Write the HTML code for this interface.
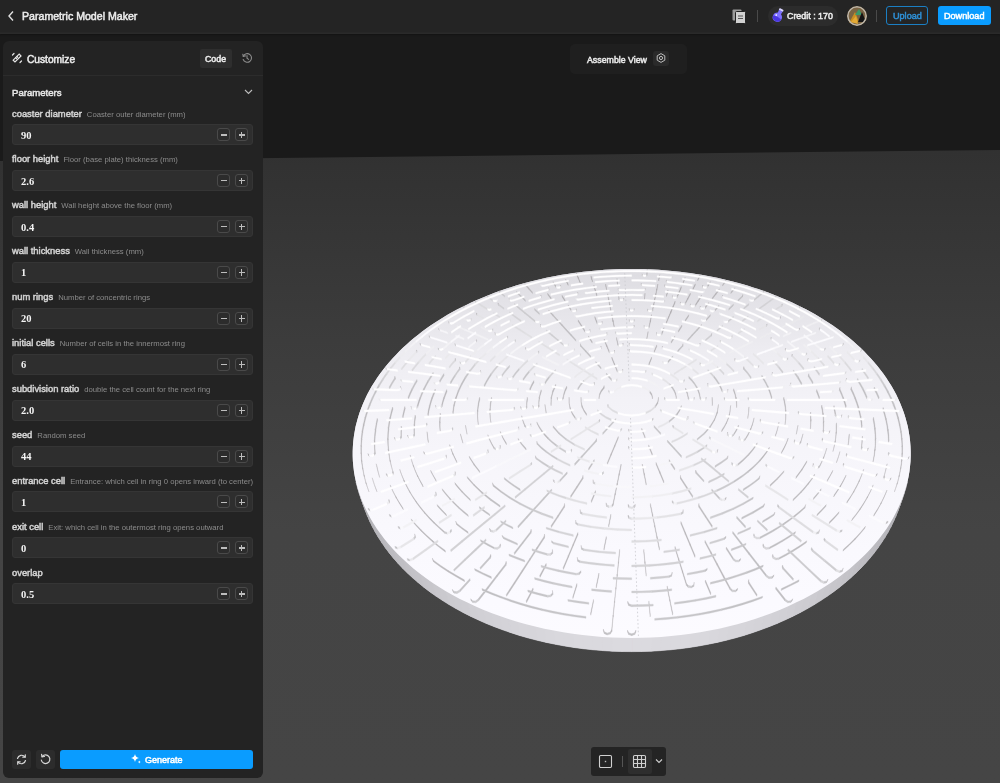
<!DOCTYPE html>
<html><head><meta charset="utf-8">
<style>
*{box-sizing:border-box;margin:0;padding:0}
html,body{width:1000px;height:783px;overflow:hidden;background:#1a1a1a;font-family:"Liberation Sans",sans-serif;color:#e8e8e8}
.abs{position:absolute}
#top{left:0;top:0;width:1000px;height:34px;background:#242424;box-shadow:inset 0 -1.5px 0 #2a2a2a,0 1px 1.5px #141414}
#sky{left:0;top:34px;width:1000px;height:749px;background:#1a1a1a}
#panel{left:3px;top:41px;width:260px;height:737px;background:#232323;border-radius:6px}
.t{position:absolute;white-space:nowrap;font-weight:normal;-webkit-text-stroke:0.5px currentColor}
#panel,#top,.t{will-change:transform}
.lbl{position:absolute;left:12px;font-size:9.4px;font-weight:normal;-webkit-text-stroke:0.5px currentColor;color:#d2d2d2;white-space:nowrap}
.lbl span{font-weight:normal;-webkit-text-stroke:0;font-size:7.7px;color:#8c8c8c;margin-left:5px}
.inp{position:absolute;left:12px;width:241px;height:21px;background:#2e2e2e;border:1px solid #353535;border-radius:3px}
.val{position:absolute;left:8px;top:4.5px;font-family:"Liberation Serif",serif;font-weight:bold;font-size:10.5px;color:#f4f4f4}
.pm{position:absolute;top:3px;width:13px;height:13px;border:1px solid #4a4a4a;border-radius:3px;background:#2c2c2c}
.pm:before{content:"";position:absolute;left:2.5px;top:5.2px;width:6.5px;height:1.2px;background:#bdbdbd}
.pm.p:after{content:"";position:absolute;left:5.15px;top:2.5px;width:1.2px;height:6.5px;background:#bdbdbd}
</style></head><body>
<div id="sky" class="abs"></div>
<svg class="abs" style="left:0;top:0" width="1000" height="783" viewBox="0 0 1000 783">
<defs><linearGradient id="fl" x1="0" y1="150" x2="0" y2="783" gradientUnits="userSpaceOnUse">
<stop offset="0" stop-color="#313131"/><stop offset="0.3" stop-color="#3c3c3c"/><stop offset="0.6" stop-color="#444444"/><stop offset="1" stop-color="#454545"/></linearGradient></defs>
<polygon points="0,161 1000,150 1000,783 0,783" fill="url(#fl)"/>
</svg>
<svg width="1000" height="783" viewBox="0 0 1000 783" style="position:absolute;left:0;top:0"><defs><linearGradient id="tg" x1="0" y1="269" x2="0" y2="638" gradientUnits="userSpaceOnUse"><stop offset="0.000" stop-color="rgb(221,220,225)"/><stop offset="0.084" stop-color="rgb(227,226,231)"/><stop offset="0.220" stop-color="rgb(237,236,241)"/><stop offset="0.355" stop-color="rgb(243,242,247)"/><stop offset="0.491" stop-color="rgb(246,245,250)"/><stop offset="0.626" stop-color="rgb(248,247,252)"/><stop offset="0.762" stop-color="rgb(250,249,254)"/><stop offset="0.897" stop-color="rgb(251,250,255)"/><stop offset="1.000" stop-color="rgb(252,251,255)"/></linearGradient></defs><polygon points="352.7,451.2 352.9,446.2 353.3,441.2 353.9,436.3 354.7,431.4 355.6,426.6 356.8,421.9 358.1,417.2 359.6,412.5 361.3,407.9 363.1,403.4 365.1,399.0 367.2,394.6 369.5,390.3 371.9,386.1 374.5,381.9 377.2,377.8 380.0,373.8 382.9,369.9 386.0,366.0 389.2,362.2 392.5,358.5 395.9,354.9 399.4,351.3 402.9,347.8 406.6,344.4 410.4,341.1 414.3,337.8 418.2,334.7 422.2,331.6 426.3,328.6 430.5,325.6 434.8,322.8 439.1,320.0 443.5,317.3 447.9,314.6 452.4,312.1 457.0,309.6 461.6,307.2 466.3,304.9 471.0,302.6 475.7,300.5 480.6,298.4 485.4,296.4 490.3,294.4 495.2,292.6 500.2,290.8 505.2,289.0 510.2,287.4 515.3,285.8 520.4,284.3 525.5,282.9 530.7,281.5 535.9,280.2 541.1,279.0 546.3,277.8 551.5,276.8 556.8,275.8 562.1,274.8 567.4,273.9 572.7,273.1 578.0,272.4 583.4,271.8 588.7,271.2 594.0,270.7 599.4,270.2 604.8,269.8 610.2,269.5 615.5,269.3 620.9,269.1 626.3,269.0 631.7,269.0 637.1,269.0 642.5,269.1 647.9,269.3 653.2,269.5 658.6,269.8 664.0,270.2 669.4,270.7 674.7,271.2 680.0,271.8 685.4,272.4 690.7,273.1 696.0,273.9 701.3,274.8 706.6,275.8 711.9,276.8 717.1,277.8 722.3,279.0 727.5,280.2 732.7,281.5 737.9,282.9 743.0,284.3 748.1,285.8 753.1,287.4 758.2,289.0 763.2,290.8 768.2,292.6 773.1,294.4 778.0,296.4 782.9,298.4 787.7,300.5 792.4,302.6 797.1,304.9 801.8,307.2 806.4,309.6 811.0,312.1 815.5,314.6 819.9,317.3 824.3,320.0 828.6,322.8 832.9,325.6 837.1,328.6 841.2,331.6 845.2,334.7 849.1,337.8 853.0,341.1 856.8,344.4 860.5,347.8 864.0,351.3 867.5,354.9 870.9,358.5 874.2,362.2 877.4,366.0 880.5,369.9 883.4,373.8 886.2,377.8 888.9,381.9 891.5,386.1 893.9,390.3 896.2,394.6 898.3,399.0 900.3,403.4 902.1,407.9 903.8,412.5 905.3,417.2 906.6,421.9 907.8,426.6 908.7,431.4 909.5,436.3 910.1,441.2 910.5,446.2 910.7,451.2 910.7,456.3 910.5,461.4 910.0,466.5 909.4,471.7 908.5,476.9 907.4,482.1 906.0,487.3 904.4,492.5 902.6,497.8 897.6,511.7 895.5,517.0 893.2,522.2 890.6,527.5 887.8,532.7 884.6,537.9 881.3,543.1 877.7,548.3 873.8,553.4 869.7,558.4 865.3,563.5 860.6,568.4 855.7,573.3 850.5,578.1 845.0,582.8 839.3,587.4 833.4,591.9 827.2,596.3 820.7,600.6 814.0,604.8 807.0,608.8 799.9,612.7 792.5,616.5 784.9,620.0 777.0,623.5 769.0,626.7 760.8,629.8 752.4,632.7 743.8,635.5 735.0,638.0 726.1,640.3 717.1,642.4 707.9,644.3 698.7,646.0 689.3,647.5 679.8,648.8 670.3,649.8 660.7,650.6 651.0,651.2 641.4,651.5 631.7,651.6 622.0,651.5 612.4,651.2 602.7,650.6 593.1,649.8 583.6,648.8 574.1,647.5 564.7,646.0 555.5,644.3 546.3,642.4 537.3,640.3 528.4,638.0 519.6,635.5 511.0,632.7 502.6,629.8 494.4,626.7 486.4,623.5 478.5,620.0 470.9,616.5 463.5,612.7 456.4,608.8 449.4,604.8 442.7,600.6 436.2,596.3 430.0,591.9 424.1,587.4 418.4,582.8 412.9,578.1 407.7,573.3 402.8,568.4 398.1,563.5 393.7,558.4 389.6,553.4 385.7,548.3 382.1,543.1 378.8,537.9 375.6,532.7 372.8,527.5 370.2,522.2 367.9,517.0 365.8,511.7 360.8,497.8 359.0,492.5 357.4,487.3 356.0,482.1 354.9,476.9 354.0,471.7 353.4,466.5 352.9,461.4 352.7,456.3" fill="#d8d7dc"/><polygon points="907.4,482.1 906.0,487.3 901.1,501.2 902.4,495.9" fill="rgb(177,176,181)" stroke="rgb(177,176,181)" stroke-width="0.6"/><polygon points="906.0,487.3 904.4,492.5 899.5,506.4 901.1,501.2" fill="rgb(177,176,181)" stroke="rgb(177,176,181)" stroke-width="0.6"/><polygon points="904.4,492.5 902.6,497.8 897.6,511.7 899.5,506.4" fill="rgb(177,176,181)" stroke="rgb(177,176,181)" stroke-width="0.6"/><polygon points="902.6,497.8 900.5,503.0 895.5,517.0 897.6,511.7" fill="rgb(178,177,182)" stroke="rgb(178,177,182)" stroke-width="0.6"/><polygon points="900.5,503.0 898.1,508.3 893.2,522.2 895.5,517.0" fill="rgb(179,178,183)" stroke="rgb(179,178,183)" stroke-width="0.6"/><polygon points="898.1,508.3 895.5,513.5 890.6,527.5 893.2,522.2" fill="rgb(180,179,184)" stroke="rgb(180,179,184)" stroke-width="0.6"/><polygon points="895.5,513.5 892.7,518.8 887.8,532.7 890.6,527.5" fill="rgb(181,180,185)" stroke="rgb(181,180,185)" stroke-width="0.6"/><polygon points="892.7,518.8 889.6,524.0 884.7,537.9 887.8,532.7" fill="rgb(182,181,186)" stroke="rgb(182,181,186)" stroke-width="0.6"/><polygon points="889.6,524.0 886.2,529.2 881.3,543.1 884.7,537.9" fill="rgb(184,183,188)" stroke="rgb(184,183,188)" stroke-width="0.6"/><polygon points="886.2,529.2 882.5,534.3 877.7,548.3 881.3,543.1" fill="rgb(185,184,189)" stroke="rgb(185,184,189)" stroke-width="0.6"/><polygon points="882.5,534.3 878.6,539.4 873.8,553.4 877.7,548.3" fill="rgb(186,185,190)" stroke="rgb(186,185,190)" stroke-width="0.6"/><polygon points="878.6,539.4 874.4,544.5 869.7,558.4 873.8,553.4" fill="rgb(187,186,191)" stroke="rgb(187,186,191)" stroke-width="0.6"/><polygon points="874.4,544.5 870.0,549.5 865.3,563.4 869.7,558.4" fill="rgb(188,187,192)" stroke="rgb(188,187,192)" stroke-width="0.6"/><polygon points="870.0,549.5 865.2,554.5 860.6,568.4 865.3,563.4" fill="rgb(190,189,194)" stroke="rgb(190,189,194)" stroke-width="0.6"/><polygon points="865.2,554.5 860.2,559.3 855.7,573.3 860.6,568.4" fill="rgb(191,190,195)" stroke="rgb(191,190,195)" stroke-width="0.6"/><polygon points="860.2,559.3 855.0,564.1 850.5,578.1 855.7,573.3" fill="rgb(193,192,197)" stroke="rgb(193,192,197)" stroke-width="0.6"/><polygon points="855.0,564.1 849.4,568.9 845.0,582.8 850.5,578.1" fill="rgb(195,194,199)" stroke="rgb(195,194,199)" stroke-width="0.6"/><polygon points="849.4,568.9 843.6,573.5 839.3,587.4 845.0,582.8" fill="rgb(196,195,200)" stroke="rgb(196,195,200)" stroke-width="0.6"/><polygon points="843.6,573.5 837.6,578.0 833.4,591.9 839.3,587.4" fill="rgb(198,197,202)" stroke="rgb(198,197,202)" stroke-width="0.6"/><polygon points="837.6,578.0 831.3,582.4 827.2,596.3 833.4,591.9" fill="rgb(199,198,203)" stroke="rgb(199,198,203)" stroke-width="0.6"/><polygon points="831.3,582.4 824.7,586.7 820.7,600.6 827.2,596.3" fill="rgb(201,200,205)" stroke="rgb(201,200,205)" stroke-width="0.6"/><polygon points="824.7,586.7 817.9,590.9 814.0,604.8 820.7,600.6" fill="rgb(202,201,206)" stroke="rgb(202,201,206)" stroke-width="0.6"/><polygon points="817.9,590.9 810.8,595.0 807.1,608.8 814.0,604.8" fill="rgb(204,203,208)" stroke="rgb(204,203,208)" stroke-width="0.6"/><polygon points="810.8,595.0 803.5,598.9 799.9,612.7 807.1,608.8" fill="rgb(205,204,209)" stroke="rgb(205,204,209)" stroke-width="0.6"/><polygon points="803.5,598.9 795.9,602.6 792.5,616.4 799.9,612.7" fill="rgb(206,205,210)" stroke="rgb(206,205,210)" stroke-width="0.6"/><polygon points="795.9,602.6 788.2,606.2 784.9,620.0 792.5,616.4" fill="rgb(208,207,212)" stroke="rgb(208,207,212)" stroke-width="0.6"/><polygon points="788.2,606.2 780.2,609.7 777.0,623.5 784.9,620.0" fill="rgb(209,208,213)" stroke="rgb(209,208,213)" stroke-width="0.6"/><polygon points="780.2,609.7 772.0,613.0 769.0,626.7 777.0,623.5" fill="rgb(210,209,214)" stroke="rgb(210,209,214)" stroke-width="0.6"/><polygon points="772.0,613.0 763.6,616.1 760.8,629.8 769.0,626.7" fill="rgb(211,210,215)" stroke="rgb(211,210,215)" stroke-width="0.6"/><polygon points="763.6,616.1 755.0,619.0 752.4,632.7 760.8,629.8" fill="rgb(212,211,216)" stroke="rgb(212,211,216)" stroke-width="0.6"/><polygon points="755.0,619.0 746.2,621.7 743.8,635.5 752.4,632.7" fill="rgb(213,212,217)" stroke="rgb(213,212,217)" stroke-width="0.6"/><polygon points="746.2,621.7 737.3,624.2 735.0,638.0 743.8,635.5" fill="rgb(214,213,218)" stroke="rgb(214,213,218)" stroke-width="0.6"/><polygon points="737.3,624.2 728.2,626.6 726.1,640.3 735.0,638.0" fill="rgb(214,213,218)" stroke="rgb(214,213,218)" stroke-width="0.6"/><polygon points="728.2,626.6 719.0,628.7 717.1,642.4 726.1,640.3" fill="rgb(215,214,219)" stroke="rgb(215,214,219)" stroke-width="0.6"/><polygon points="719.0,628.7 709.6,630.6 707.9,644.3 717.1,642.4" fill="rgb(216,215,220)" stroke="rgb(216,215,220)" stroke-width="0.6"/><polygon points="709.6,630.6 700.2,632.3 698.7,646.0 707.9,644.3" fill="rgb(217,216,221)" stroke="rgb(217,216,221)" stroke-width="0.6"/><polygon points="700.2,632.3 690.6,633.8 689.3,647.5 698.7,646.0" fill="rgb(217,216,221)" stroke="rgb(217,216,221)" stroke-width="0.6"/><polygon points="690.6,633.8 680.9,635.1 679.8,648.8 689.3,647.5" fill="rgb(218,217,222)" stroke="rgb(218,217,222)" stroke-width="0.6"/><polygon points="680.9,635.1 671.2,636.1 670.3,649.8 679.8,648.8" fill="rgb(218,217,222)" stroke="rgb(218,217,222)" stroke-width="0.6"/><polygon points="671.2,636.1 661.3,636.9 660.7,650.6 670.3,649.8" fill="rgb(218,217,222)" stroke="rgb(218,217,222)" stroke-width="0.6"/><polygon points="661.3,636.9 651.5,637.5 651.1,651.2 660.7,650.6" fill="rgb(218,217,222)" stroke="rgb(218,217,222)" stroke-width="0.6"/><polygon points="651.5,637.5 641.6,637.8 641.4,651.5 651.1,651.2" fill="rgb(219,218,223)" stroke="rgb(219,218,223)" stroke-width="0.6"/><polygon points="641.6,637.8 631.7,638.0 631.7,651.6 641.4,651.5" fill="rgb(219,218,223)" stroke="rgb(219,218,223)" stroke-width="0.6"/><polygon points="631.7,638.0 621.8,637.8 622.0,651.5 631.7,651.6" fill="rgb(219,218,223)" stroke="rgb(219,218,223)" stroke-width="0.6"/><polygon points="621.8,637.8 611.9,637.5 612.3,651.2 622.0,651.5" fill="rgb(219,218,223)" stroke="rgb(219,218,223)" stroke-width="0.6"/><polygon points="611.9,637.5 602.1,636.9 602.7,650.6 612.3,651.2" fill="rgb(218,217,222)" stroke="rgb(218,217,222)" stroke-width="0.6"/><polygon points="602.1,636.9 592.2,636.1 593.1,649.8 602.7,650.6" fill="rgb(218,217,222)" stroke="rgb(218,217,222)" stroke-width="0.6"/><polygon points="592.2,636.1 582.5,635.1 583.6,648.8 593.1,649.8" fill="rgb(218,217,222)" stroke="rgb(218,217,222)" stroke-width="0.6"/><polygon points="582.5,635.1 572.8,633.8 574.1,647.5 583.6,648.8" fill="rgb(218,217,222)" stroke="rgb(218,217,222)" stroke-width="0.6"/><polygon points="572.8,633.8 563.2,632.3 564.7,646.0 574.1,647.5" fill="rgb(217,216,221)" stroke="rgb(217,216,221)" stroke-width="0.6"/><polygon points="563.2,632.3 553.8,630.6 555.5,644.3 564.7,646.0" fill="rgb(217,216,221)" stroke="rgb(217,216,221)" stroke-width="0.6"/><polygon points="553.8,630.6 544.4,628.7 546.3,642.4 555.5,644.3" fill="rgb(216,215,220)" stroke="rgb(216,215,220)" stroke-width="0.6"/><polygon points="544.4,628.7 535.2,626.6 537.3,640.3 546.3,642.4" fill="rgb(215,214,219)" stroke="rgb(215,214,219)" stroke-width="0.6"/><polygon points="535.2,626.6 526.1,624.2 528.4,638.0 537.3,640.3" fill="rgb(214,213,218)" stroke="rgb(214,213,218)" stroke-width="0.6"/><polygon points="526.1,624.2 517.2,621.7 519.6,635.5 528.4,638.0" fill="rgb(214,213,218)" stroke="rgb(214,213,218)" stroke-width="0.6"/><polygon points="517.2,621.7 508.4,619.0 511.0,632.7 519.6,635.5" fill="rgb(213,212,217)" stroke="rgb(213,212,217)" stroke-width="0.6"/><polygon points="508.4,619.0 499.8,616.1 502.6,629.8 511.0,632.7" fill="rgb(212,211,216)" stroke="rgb(212,211,216)" stroke-width="0.6"/><polygon points="499.8,616.1 491.4,613.0 494.4,626.7 502.6,629.8" fill="rgb(211,210,215)" stroke="rgb(211,210,215)" stroke-width="0.6"/><polygon points="491.4,613.0 483.2,609.7 486.4,623.5 494.4,626.7" fill="rgb(210,209,214)" stroke="rgb(210,209,214)" stroke-width="0.6"/><polygon points="483.2,609.7 475.2,606.2 478.5,620.0 486.4,623.5" fill="rgb(209,208,213)" stroke="rgb(209,208,213)" stroke-width="0.6"/><polygon points="475.2,606.2 467.5,602.6 470.9,616.4 478.5,620.0" fill="rgb(208,207,212)" stroke="rgb(208,207,212)" stroke-width="0.6"/><polygon points="467.5,602.6 459.9,598.9 463.5,612.7 470.9,616.4" fill="rgb(206,205,210)" stroke="rgb(206,205,210)" stroke-width="0.6"/><polygon points="459.9,598.9 452.6,595.0 456.3,608.8 463.5,612.7" fill="rgb(205,204,209)" stroke="rgb(205,204,209)" stroke-width="0.6"/><polygon points="452.6,595.0 445.5,590.9 449.4,604.8 456.3,608.8" fill="rgb(204,203,208)" stroke="rgb(204,203,208)" stroke-width="0.6"/><polygon points="445.5,590.9 438.7,586.7 442.7,600.6 449.4,604.8" fill="rgb(202,201,206)" stroke="rgb(202,201,206)" stroke-width="0.6"/><polygon points="438.7,586.7 432.1,582.4 436.2,596.3 442.7,600.6" fill="rgb(201,200,205)" stroke="rgb(201,200,205)" stroke-width="0.6"/><polygon points="432.1,582.4 425.8,578.0 430.0,591.9 436.2,596.3" fill="rgb(199,198,203)" stroke="rgb(199,198,203)" stroke-width="0.6"/><polygon points="425.8,578.0 419.8,573.5 424.1,587.4 430.0,591.9" fill="rgb(198,197,202)" stroke="rgb(198,197,202)" stroke-width="0.6"/><polygon points="419.8,573.5 414.0,568.9 418.4,582.8 424.1,587.4" fill="rgb(196,195,200)" stroke="rgb(196,195,200)" stroke-width="0.6"/><polygon points="414.0,568.9 408.4,564.1 412.9,578.1 418.4,582.8" fill="rgb(195,194,199)" stroke="rgb(195,194,199)" stroke-width="0.6"/><polygon points="408.4,564.1 403.2,559.3 407.7,573.3 412.9,578.1" fill="rgb(193,192,197)" stroke="rgb(193,192,197)" stroke-width="0.6"/><polygon points="403.2,559.3 398.2,554.5 402.8,568.4 407.7,573.3" fill="rgb(191,190,195)" stroke="rgb(191,190,195)" stroke-width="0.6"/><polygon points="398.2,554.5 393.4,549.5 398.1,563.4 402.8,568.4" fill="rgb(190,189,194)" stroke="rgb(190,189,194)" stroke-width="0.6"/><polygon points="393.4,549.5 389.0,544.5 393.7,558.4 398.1,563.4" fill="rgb(188,187,192)" stroke="rgb(188,187,192)" stroke-width="0.6"/><polygon points="389.0,544.5 384.8,539.4 389.6,553.4 393.7,558.4" fill="rgb(187,186,191)" stroke="rgb(187,186,191)" stroke-width="0.6"/><polygon points="384.8,539.4 380.9,534.3 385.7,548.3 389.6,553.4" fill="rgb(186,185,190)" stroke="rgb(186,185,190)" stroke-width="0.6"/><polygon points="380.9,534.3 377.2,529.2 382.1,543.1 385.7,548.3" fill="rgb(185,184,189)" stroke="rgb(185,184,189)" stroke-width="0.6"/><polygon points="377.2,529.2 373.8,524.0 378.7,537.9 382.1,543.1" fill="rgb(184,183,188)" stroke="rgb(184,183,188)" stroke-width="0.6"/><polygon points="373.8,524.0 370.7,518.8 375.6,532.7 378.7,537.9" fill="rgb(182,181,186)" stroke="rgb(182,181,186)" stroke-width="0.6"/><polygon points="370.7,518.8 367.9,513.5 372.8,527.5 375.6,532.7" fill="rgb(181,180,185)" stroke="rgb(181,180,185)" stroke-width="0.6"/><polygon points="367.9,513.5 365.3,508.3 370.2,522.2 372.8,527.5" fill="rgb(180,179,184)" stroke="rgb(180,179,184)" stroke-width="0.6"/><polygon points="365.3,508.3 362.9,503.0 367.9,517.0 370.2,522.2" fill="rgb(179,178,183)" stroke="rgb(179,178,183)" stroke-width="0.6"/><polygon points="362.9,503.0 360.8,497.8 365.8,511.7 367.9,517.0" fill="rgb(178,177,182)" stroke="rgb(178,177,182)" stroke-width="0.6"/><polygon points="360.8,497.8 359.0,492.5 363.9,506.4 365.8,511.7" fill="rgb(177,176,181)" stroke="rgb(177,176,181)" stroke-width="0.6"/><polygon points="359.0,492.5 357.4,487.3 362.3,501.2 363.9,506.4" fill="rgb(177,176,181)" stroke="rgb(177,176,181)" stroke-width="0.6"/><polygon points="357.4,487.3 356.0,482.1 361.0,495.9 362.3,501.2" fill="rgb(177,176,181)" stroke="rgb(177,176,181)" stroke-width="0.6"/><polygon points="898.3,399.0 900.3,403.4 902.1,408.0 903.8,412.5 905.3,417.2 906.6,421.9 907.8,426.6 908.7,431.4 909.5,436.3 910.1,441.2 910.5,446.2 910.7,451.2 910.7,456.3 910.5,461.4 910.0,466.5 909.4,471.7 908.5,476.8 907.4,482.1 906.0,487.3 904.4,492.5 902.6,497.8 900.5,503.0 898.1,508.3 895.5,513.5 892.7,518.8 889.6,524.0 886.2,529.2 882.5,534.3 878.6,539.4 874.4,544.5 870.0,549.5 865.2,554.5 860.2,559.3 855.0,564.1 849.4,568.9 843.6,573.5 837.6,578.0 831.3,582.4 824.7,586.7 817.9,590.9 810.8,595.0 803.5,598.9 795.9,602.6 788.2,606.2 780.2,609.7 772.0,613.0 763.6,616.1 755.0,619.0 746.2,621.7 737.3,624.2 728.2,626.6 719.0,628.7 709.6,630.6 700.2,632.3 690.6,633.8 680.9,635.1 671.2,636.1 661.3,636.9 651.5,637.5 641.6,637.8 631.7,638.0 621.8,637.8 611.9,637.5 602.1,636.9 592.2,636.1 582.5,635.1 572.8,633.8 563.2,632.3 553.8,630.6 544.4,628.7 535.2,626.6 526.1,624.2 517.2,621.7 508.4,619.0 499.8,616.1 491.4,613.0 483.2,609.7 475.2,606.2 467.5,602.6 459.9,598.9 452.6,595.0 445.5,590.9 438.7,586.7 432.1,582.4 425.8,578.0 419.8,573.5 414.0,568.9 408.4,564.1 403.2,559.3 398.2,554.5 393.4,549.5 389.0,544.5 384.8,539.4 380.9,534.3 377.2,529.2 373.8,524.0 370.7,518.8 367.9,513.5 365.3,508.3 362.9,503.0 360.8,497.8 359.0,492.5 357.4,487.3 356.0,482.1 354.9,476.8 354.0,471.7 353.4,466.5 352.9,461.4 352.7,456.3 352.7,451.2 352.9,446.2 353.3,441.2 353.9,436.3 354.7,431.4 355.6,426.6 356.8,421.9 358.1,417.2 359.6,412.5 361.3,408.0 363.1,403.4 365.1,399.0 367.2,394.6 369.5,390.3 371.9,386.1 374.5,381.9 377.2,377.8 380.0,373.8 382.9,369.9 386.0,366.0 389.2,362.2 392.5,358.5 395.9,354.9 399.3,351.3 402.9,347.8 406.6,344.4 410.4,341.1 414.3,337.8 418.2,334.7 422.2,331.6 426.3,328.6 430.5,325.6 434.8,322.8 439.1,320.0 443.5,317.3 447.9,314.6 452.4,312.1 457.0,309.6 461.6,307.2 466.3,304.9 471.0,302.7 475.7,300.5 480.6,298.4 485.4,296.4 490.3,294.4 495.2,292.5 500.2,290.7 505.2,289.0 510.2,287.4 515.3,285.8 520.4,284.3 525.5,282.8 530.7,281.5 535.9,280.2 541.1,279.0 546.3,277.8 551.5,276.8 556.8,275.7 562.1,274.8 567.4,273.9 572.7,273.2 578.0,272.4 583.3,271.8 588.7,271.2 594.0,270.7 599.4,270.2 604.8,269.8 610.2,269.5 615.5,269.3 620.9,269.1 626.3,269.0 631.7,269.0 637.1,269.0 642.5,269.1 647.9,269.3 653.2,269.5 658.6,269.8 664.0,270.2 669.4,270.7 674.7,271.2 680.1,271.8 685.4,272.4 690.7,273.2 696.0,273.9 701.3,274.8 706.6,275.7 711.9,276.8 717.1,277.8 722.3,279.0 727.5,280.2 732.7,281.5 737.9,282.8 743.0,284.3 748.1,285.8 753.2,287.4 758.2,289.0 763.2,290.7 768.2,292.5 773.1,294.4 778.0,296.4 782.8,298.4 787.7,300.5 792.4,302.7 797.1,304.9 801.8,307.2 806.4,309.6 811.0,312.1 815.5,314.6 819.9,317.3 824.3,320.0 828.6,322.8 832.9,325.6 837.1,328.6 841.2,331.6 845.2,334.7 849.1,337.8 853.0,341.1 856.8,344.4 860.5,347.8 864.1,351.3 867.5,354.9 870.9,358.5 874.2,362.2 877.4,366.0 880.5,369.9 883.4,373.8 886.2,377.8 888.9,381.9 891.5,386.1 893.9,390.3 896.2,394.6" fill="url(#tg)"/><g stroke-width="0.6" stroke-opacity="0.55" stroke-linejoin="round"><path fill="#9f9ea1" stroke="#9f9ea1" d="M646.8 275.6l.5 -4.5 0 -1.7 -.4 4.6z"/><path fill="#a2a1a4" stroke="#a2a1a4" d="M658.7 281l.9 -4.7 .1 -1.6 -1 4.6zM617.5 285l-.5 -4.7 0 -1.7 .5 4.8zM763.6 292.1l-.2 1 .2 -1.7 .3 -.9zM500 293.1l-.2 -1 -.3 -1.6 .3 .9zM548.8 289.4l-.1 .9 -.1 -1.7 0 -.9zM742.5 296.2l-.1 .9 .2 -1.6 .1 -1zM541 296.7l.1 1 -.2 -1.7 -.1 -1zM722.3 297.7l.1 -1 .2 -1.7 -.1 1zM619 299.9l-.5 -5.1 -.1 -1.6 .5 5zM644.4 299.9l.5 -5.1 .1 -1.6 -.5 5z"/><path fill="#a5a4a7" stroke="#a5a4a7" d="M578.4 279l-1.9 -4.5 -.1 -1.7 1.9 4.5zM592.5 282l-1.5 -4.6 0 -1.6 1.4 4.6zM560.7 286.8l-.1 .9 -.2 -1.6 .2 -1zM702.8 287.7l-.1 -.9 .1 -1.7 .2 1zM656.7 290.5l1 -4.8 .1 -1.7 -1 4.9zM606.7 290.5l-1 -4.8 -.1 -1.7 1 4.9zM595.4 291.6l-1.5 -4.8 0 -1.7 1.5 4.8zM487.9 297.7l-.4 -.9 -.2 -1.7 .3 .9zM775.9 296.8l-.4 .9 .3 -1.7 .3 -.9zM655.7 295.5l1 -5 .1 -1.6 -1 4.9zM509.7 301.1l-.2 -.9 -.3 -1.7 .3 .9zM498.6 305.5l-.3 -.9 -.3 -1.7 .4 .9zM608.7 300.5l-1 -5 -.1 -1.7 1.1 5zM654.7 300.5l1 -5 .1 -1.7 -1.1 5zM609.8 305.7l-1.1 -5.2 0 -1.7 1 5.2zM653.6 305.7l1.1 -5.2 0 -1.7 -1 5.2zM700.2 308.7l0 -1 .1 -1.7 .1 1z"/><path fill="#a8a7aa" stroke="#a8a7aa" d="M580.3 283.5l-1.9 -4.5 -.1 -1.7 1.9 4.6zM683.1 283.5l1.9 -4.5 .1 -1.7 -1.9 4.6zM679.2 293l2 -4.8 .1 -1.7 -2 4.8zM476 302.8l-.4 -.9 -.3 -1.7 .4 .9zM577.8 294l-.2 .9 -.1 -1.7 .2 -.9zM596.9 296.5l-1.5 -4.9 0 -1.7 1.5 4.9zM666.5 296.5l1.5 -4.9 0 -1.7 -1.5 4.9zM677.1 297.8l2.1 -4.8 .1 -1.7 -2.1 4.8zM799.5 307.5l-.5 .9 .3 -1.7 .5 -.9zM464.4 308.4l-.5 -.9 -.3 -1.7 .5 .9zM782 305.6l-.4 1 .2 -1.8 .5 -.9zM680.6 304.6l-.3 -1 .1 -1.7 .3 1zM690.5 306.5l-.2 -1 .1 -1.7 .2 1zM652.6 311l1 -5.3 .1 -1.7 -1.1 5.2zM610.8 311l-1 -5.3 -.1 -1.7 1.1 5.2zM576.3 310.4l-.1 1 -.1 -1.7 .1 -1zM650.4 321.9l1.1 -5.6 0 -1.7 -1.1 5.5zM613 321.9l-1.1 -5.6 0 -1.7 1.1 5.5zM590 331.1l-.1 1.1 -.1 -1.8 .1 -1.1z"/><path fill="#abaaad" stroke="#abaaad" d="M697.6 280.9l2.4 -4.4 .1 -1.7 -2.4 4.5zM568.2 285.4l-2.4 -4.5 -.1 -1.6 2.4 4.5zM692.8 290l2.4 -4.6 .1 -1.6 -2.4 4.6zM672.7 298.1l-.3 -.9 0 -1.7 .4 .9zM672.9 307.9l2.2 -5.1 0 -1.7 -2.1 5.1zM477.2 315.6l-.5 -1 -.3 -1.7 .6 .9zM780.2 318.2l-.6 1 .3 -1.7 .6 -1zM670.8 313.1l2.1 -5.2 .1 -1.7 -2.2 5.1zM668.5 318.3l2.3 -5.2 0 -1.8 -2.2 5.3zM541 327l-.3 -1 -.2 -1.8 .3 1.1zM614.2 327.5l-1.2 -5.6 0 -1.8 1.2 5.6zM649.2 327.5l1.2 -5.6 0 -1.8 -1.2 5.6zM711.5 335.2l-.3 1.1 .1 -1.8 .4 -1.1zM646.8 339.2l1.2 -5.9 .1 -1.8 -1.2 5.9zM617.8 345.2l-1.2 -6 -.1 -1.8 1.3 6zM580.7 346.6l-.1 -1.1 -.1 -1.8 .1 1.2zM682.8 345.5l-.1 1.1 .1 -1.7 .1 -1.2zM601 347.8l0 1.2 -.1 -1.8 .1 -1.2zM662.4 349l0 -1.2 0 -1.8 .1 1.2zM400.9 388.1l.1 1.3 -.4 -1.8 -.2 -1.3zM850.9 389.9l.2 -1.3 .4 -1.8 -.2 1.3zM839.4 390.4l.2 -1.3 .4 -1.8 -.2 1.3zM790.2 385.8l.2 -1.3 .4 -1.8 -.2 1.3zM707.6 386.2l.1 -1.4 .1 -1.8 -.1 1.3z"/><path fill="#aeadb0" stroke="#aeadb0" d="M666.7 282.5l-.4 -.9 0 -1.7 .5 .9zM707.2 287.7l2.9 -4.4 .2 -1.7 -2.9 4.5zM556.2 287.7l-2.9 -4.4 -.2 -1.7 2.9 4.5zM665.2 287.2l-.4 -.9 0 -1.7 .4 .9zM687.7 299.6l2.6 -4.8 .1 -1.7 -2.6 4.8zM685.1 304.5l2.6 -4.9 .1 -1.7 -2.6 4.9zM766.8 325.7l-.6 .9 .3 -1.7 .6 -1zM597.1 323.8l-2.2 -5.5 -.1 -1.7 2.3 5.4zM666.3 323.8l2.2 -5.5 .1 -1.7 -2.3 5.4zM602.1 323l-.3 1.1 0 -1.7 .3 -1.1zM661.6 335l2.4 -5.7 0 -1.7 -2.4 5.6zM606.9 334.2l-.3 1.1 0 -1.7 .3 -1.2zM656.8 335.3l-.3 -1.1 0 -1.8 .3 1.2zM699.9 344.8l-.4 1.1 .2 -1.7 .4 -1.2zM395.2 378l.1 1.3 -.5 -1.8 0 -1.3zM614.5 351.9l-.3 1.2 0 -1.8 .3 -1.2zM460 368.6l-.2 1.3 -.3 -1.8 .1 -1.3zM846.1 381.2l0 -1.3 .5 -1.8 -.1 1.3zM808.4 376.8l0 -1.3 .4 -1.8 0 1.3zM480.8 372.1l-.1 1.3 -.3 -1.8 .1 -1.3zM772.2 375.2l-.1 -1.3 .3 -1.8 .1 1.3zM412 409.4l-.5 -1.3 -.5 -1.8 .5 1.3zM436.5 408.4l-.5 -1.3 -.5 -1.8 .6 1.3zM727.7 391l-.4 1.4 .2 -1.9 .4 -1.3zM712.1 399l.2 6.7 .2 -1.8 -.3 -6.7zM551.1 405.7l.2 -6.7 -.1 -1.8 -.3 6.7zM582.1 407.4l-.9 -4.2 -.1 -4.2 -.1 -1.8 .1 4.2 .9 4.1zM570.3 409.4l-1.1 -5.2 0 -5.2 -.1 -1.8 0 5.2 1 5.1zM478.4 424.9l-.5 -4.4 -.2 -4.4 .1 -4.3 -.3 -1.9 -.1 4.4 .2 4.4 .5 4.4zM785.6 411.8l.1 4.3 -.2 4.4 -.5 4.4 .3 -1.8 .5 -4.4 .2 -4.4 -.1 -4.4zM491 422.8l-.6 -4 -.3 -4 .1 -4 -.3 -1.9 -.1 4 .3 4 .5 4.1zM546.2 413.5l-1.1 -7.3 -.2 -1.8 1.2 7.2zM718.3 406.2l-1.1 7.3 .1 -1.9 1.2 -7.2zM748.7 408.7l-.2 5 -.8 4.9 .2 -1.8 .8 -5 .3 -4.9zM730.4 407.2l-.3 4.2 -.8 4.1 .2 -1.8 .8 -4.2 .4 -4.1zM608.2 407.6l-.3 -1.5 0 -1.8 .2 1.4zM836 433.6l-.4 4.5 -.7 4.5 .5 -1.9 .6 -4.5 .4 -4.5zM428.5 442.6l-.7 -4.5 -.4 -4.5 -.4 -1.9 .4 4.5 .6 4.5zM797.6 427.1l-1.3 7.2 .4 -1.9 1.3 -7.2zM467.1 434.3l-1.3 -7.2 -.4 -1.9 1.3 7.2zM687.9 417.9l-.2 1.5 .2 -1.8 .1 -1.5zM778.7 423.9l-.9 4.2 -1.1 4.2 -1.4 4.3 .3 -1.9 1.4 -4.2 1.2 -4.3 .8 -4.2zM874.6 451.1l-.7 5.5 -1 5.5 .6 -1.9 1 -5.5 .7 -5.5zM390.5 462.1l-1 -5.5 -.7 -5.5 -.6 -1.9 .7 5.5 1 5.5zM462.9 443.2l-2.1 -7.5 -.4 -1.9 2.1 7.5zM802.6 435.7l-2.1 7.5 .4 -1.9 2.1 -7.5zM834.9 442.6l-.9 4.5 -1.1 4.5 .5 -1.8 1.1 -4.6 .9 -4.5zM900.4 469.3l-.7 3.7 -.8 3.8 .6 -1.9 .8 -3.8 .7 -3.7zM364.5 476.8l-.8 -3.8 -.7 -3.7 -.6 -1.9 .7 3.7 .8 3.8zM727.4 435.5l0 -1.6 .2 -1.9 0 1.6zM453 454.7l-3 -8.2 -.4 -1.9 3 8.2z"/><path fill="#b1b0b3" stroke="#b1b0b3" d="M565.2 301.7l-3.1 -4.8 -.1 -1.7 3.1 4.8zM698.2 301.7l3.1 -4.8 .1 -1.7 -3.1 4.8zM695.1 306.5l3.1 -4.8 .1 -1.7 -3.1 4.8zM821.8 320.1l-.7 .9 .3 -1.7 .8 -.9zM731.9 337.4l-.5 1 .2 -1.8 .5 -1zM606.7 346.7l-2.5 -6 0 -1.7 2.5 5.9zM808 361.2l-.3 -1.2 .4 -1.8 .2 1.2zM455.7 360l-.3 1.2 -.3 -1.8 .2 -1.2zM609.3 352.7l-2.6 -6 0 -1.8 2.5 6zM654.1 352.7l2.6 -6 0 -1.8 -2.5 6zM614.5 365.3l-2.6 -6.4 -.1 -1.8 2.7 6.4zM648.9 365.3l2.6 -6.4 .1 -1.8 -2.7 6.4zM743.8 369.7l-.2 -1.3 .2 -1.8 .3 1.3zM622.7 370.9l-.3 1.3 0 -1.8 .3 -1.3zM604.2 387.5l-.4 1.3 0 -1.8 .3 -1.4zM841.5 416.4l-.7 1.4 .4 -1.9 .7 -1.3zM526.8 407.7l.2 -4.4 .5 -4.3 -.2 -1.8 -.6 4.3 -.1 4.4zM735.9 399l.5 4.3 .2 4.4 .2 -1.8 -.1 -4.4 -.6 -4.3zM539 406.7l0 -3.9 .4 -3.8 -.2 -1.8 -.4 3.8 0 3.9zM810.3 413.9l.4 7.6 .4 -1.9 -.4 -7.6zM414.5 435.8l-.1 -4.8 .2 -4.7 -.5 -1.9 -.2 4.7 .1 4.8zM836.1 424.7l0 4.4 -.1 4.5 .4 -1.9 .2 -4.5 -.1 -4.4zM440.3 431.4l-.2 -4.2 0 -4.1 -.5 -1.9 0 4.2 .3 4.1zM823.3 423.1l0 4.1 -.2 4.2 .4 -1.9 .3 -4.1 0 -4.2zM810.7 421.5l-.4 7.7 .4 -1.8 .4 -7.8zM375.3 454l-.3 -5.8 -.1 -5.7 -.6 -1.9 .1 5.7 .3 5.8zM388.8 451.1l-.5 -5.5 -.1 -5.4 -.6 -1.9 .2 5.5 .4 5.4zM875.2 440.2l-.1 5.4 -.5 5.5 .6 -1.9 .4 -5.4 .2 -5.5zM862 438l-.2 5.1 -.5 5.1 .5 -1.9 .5 -5.1 .2 -5.1zM848.9 435.8l-.3 4.8 -.6 4.8 .5 -1.9 .6 -4.8 .3 -4.8zM717.2 413.5l-2.8 7.1 .2 -1.8 2.7 -7.2zM729.3 415.5l-1.3 4.2 -1.7 4.1 .3 -1.9 1.7 -4.1 1.2 -4.1zM901.9 454.5l-.2 3.6 -.3 3.7 .6 -1.9 .3 -3.7 .2 -3.6zM362 461.8l-.3 -3.7 -.2 -3.6 -.6 -1.9 .2 3.6 .3 3.7zM525 426.9l-1.8 -4.6 -1.3 -4.7 -.2 -1.9 1.3 4.7 1.8 4.6zM753.8 419.7l-1.3 5.2 -2 5.2 .3 -1.9 1.9 -5.2 1.4 -5.2zM901.4 461.8l-.5 3.8 -.5 3.7 .6 -1.9 .6 -3.7 .4 -3.8zM363 469.3l-.5 -3.7 -.5 -3.8 -.6 -1.9 .4 3.8 .6 3.7zM826.3 449.9l-1.3 4.4 -1.7 4.4 .5 -1.9 1.6 -4.4 1.4 -4.4zM886.6 465.7l-1.3 5.9 -1.6 5.9 .6 -1.9 1.6 -5.9 1.3 -5.9zM379.7 477.5l-1.6 -5.9 -1.3 -5.9 -.6 -1.9 1.3 5.9 1.6 5.9zM839.5 453.4l-1.4 4.7 -1.7 4.7 .5 -1.9 1.7 -4.7 1.3 -4.7zM393.4 473.2l-1.6 -5.5 -1.3 -5.6 -.6 -1.9 1.3 5.6 1.6 5.5zM413.7 466.9l-1.7 -5 -1.3 -5.1 -.5 -1.9 1.3 5.1 1.7 5zM739.1 439.8l0 -1.6 .3 -1.9 -.1 1.6zM787.8 439.9l-1.8 4.6 -2.1 4.5 -2.6 4.6 .4 -1.9 2.5 -4.6 2.2 -4.5 1.8 -4.6zM898.9 476.8l-.9 3.8 -1.1 3.8 .7 -1.9 1 -3.8 .9 -3.8zM366.5 484.4l-1.1 -3.8 -.9 -3.8 -.6 -1.9 .9 3.8 1 3.8zM500.4 446.9l0 1.7 -.3 -1.9 0 -1.7zM537.4 444.7l-.4 -1.6 -.2 -1.9 .3 1.6zM456.9 462.7l-3.9 -8 -.4 -1.9 3.9 8zM488.2 451.3l-.1 1.7 -.3 -1.9 .1 -1.7zM823.3 458.7l-1.9 4.4 -2.1 4.3 .4 -1.9 2.2 -4.3 1.9 -4.4zM417.9 477l-2.3 -5 -1.9 -5.1 -.5 -1.9 1.9 5.1 2.2 5zM404.4 481.9l-2.2 -5.4 -2 -5.4 -.5 -1.9 1.9 5.4 2.3 5.4zM863.2 471.1l-2 5.4 -2.2 5.4 .5 -1.9 2.3 -5.4 1.9 -5.4zM896.9 484.4l-1.2 3.7 -1.3 3.8 .6 -1.9 1.4 -3.8 1.2 -3.7zM369 491.9l-1.3 -3.8 -1.2 -3.7 -.7 -1.9 1.2 3.7 1.4 3.8zM377 491.9l-2.3 -6.1 -1.9 -6.1 -.6 -1.9 1.9 6.1 2.3 6.1zM423.2 487l-2.8 -5 -2.5 -5 -.6 -1.9 2.6 5 2.8 5zM845.5 477l-2.5 5 -2.8 5 .5 -1.9 2.8 -5 2.6 -5zM409.9 492.6l-2.9 -5.3 -2.6 -5.4 -.5 -1.9 2.6 5.3 2.9 5.4zM859 481.9l-2.6 5.4 -2.9 5.3 .5 -1.9 2.9 -5.4 2.6 -5.3zM455.5 473.4l0 1.8 -.4 -1.9 0 -1.8zM396.4 498.3l-3 -5.7 -2.6 -5.7 -.6 -2 2.6 5.8 3 5.7zM872.6 486.9l-2.6 5.7 -3 5.7 .6 -1.9 3 -5.7 2.6 -5.8zM886.4 491.9l-2.6 6.1 -3 6.1 .6 -1.9 3 -6.1 2.6 -6.1zM867 498.3l-3.3 5.7 -3.7 5.7 .6 -1.9 3.7 -5.7 3.3 -5.7zM403.4 509.7l-3.7 -5.7 -3.3 -5.7 -.6 -1.9 3.3 5.7 3.7 5.7zM759.6 477.6l-.7 1.8 .3 -1.9 .7 -1.8zM880.8 504.1l-3.4 6.1 -3.8 6.1 .6 -2 3.8 -6 3.4 -6.1zM436.2 493.7l.2 1.9 -.5 -1.9 -.2 -1.9zM621.1 465.9l-1.9 9.4 -.1 -1.9 2 -9.4zM642.3 465.9l1.9 9.4 .1 -1.9 -2 -9.4zM493.4 486.4l-.6 -1.8 -.4 -1.9 .7 1.8zM583 477.2l-.1 1.8 -.1 -1.9 .1 -1.8zM680.5 479l-.1 -1.8 .1 -1.9 .1 1.8zM619.2 475.3l-2 9.8 0 -1.9 1.9 -9.8zM644.2 475.3l2 9.8 0 -1.9 -1.9 -9.8zM593.4 483.5l-.2 -1.9 -.1 -1.9 .2 1.8z"/><path fill="#b4b3b6" stroke="#b4b3b6" d="M722.5 286.1l3.3 -4.3 .2 -1.7 -3.3 4.3zM715.6 294.9l3.5 -4.4 .2 -1.7 -3.5 4.4zM712.1 299.5l3.5 -4.6 .2 -1.7 -3.5 4.6zM551.3 299.5l-3.5 -4.6 -.2 -1.7 3.5 4.6zM571.6 311.4l-3.3 -4.9 -.1 -1.7 3.2 4.9zM449.7 324.1l-.8 -.9 -.3 -1.7 .8 .9zM648.1 311.6l-.5 -1 0 -1.7 .6 1zM799.4 329.6l-.8 .9 .3 -1.7 .8 -.9zM685.2 321.6l3.4 -5.2 .1 -1.7 -3.4 5.1zM581.6 326.8l-3.4 -5.2 -.1 -1.8 3.4 5.3zM495.9 335.3l-.8 -1 -.2 -1.8 .7 1zM644.6 328.2l-.5 -1.1 0 -1.7 .5 1zM417.1 351.7l-.4 1.2 -.4 -1.8 .3 -1.2zM792.2 357l-.4 -1.2 .3 -1.8 .4 1.2zM623.1 344.8l-.5 1.1 -.1 -1.7 .6 -1.2zM617.2 371.8l-2.7 -6.5 0 -1.8 2.7 6.5zM594.3 383.9l-.3 1.3 -.1 -1.8 .4 -1.3zM833.6 407.4l.9 4.2 .7 4.3 .5 -1.8 -.7 -4.3 -1 -4.3zM428.2 415.9l.7 -4.3 .9 -4.2 -.4 -1.9 -1 4.3 -.7 4.3zM733.4 390.5l1.5 4.2 1 4.3 .2 -1.8 -1 -4.3 -1.4 -4.2zM821.4 406.9l.8 3.9 .6 4.1 .4 -1.9 -.6 -4 -.8 -4zM539.4 399l.8 -3.8 1.2 -3.7 -.2 -1.8 -1.1 3.7 -.9 3.8zM563.2 399l.8 -3.7 1.2 -3.7 1.7 -3.6 -.2 -1.8 -1.7 3.6 -1.2 3.6 -.7 3.8zM696.5 388l1.7 3.6 1.2 3.7 .8 3.7 .1 -1.8 -.7 -3.8 -1.2 -3.6 -1.7 -3.6zM783.5 399l.9 4.2 .7 4.3 .5 4.3 .3 -1.9 -.4 -4.3 -.7 -4.2 -1 -4.2zM477.8 411.8l.5 -4.3 .7 -4.3 .9 -4.2 -.3 -1.8 -1 4.2 -.7 4.2 -.4 4.3zM453.1 413.9l1.1 -7.6 -.3 -1.8 -1.2 7.5zM551.3 399l1.6 -6.5 -.1 -1.9 -1.6 6.6zM685.5 389.9l1.8 4.5 1 4.6 .1 -1.8 -1 -4.7 -1.8 -4.4zM860.4 418l.7 4.9 .6 5 .5 -1.9 -.5 -4.9 -.8 -4.9zM490.2 410.8l.3 -4 .5 -3.9 .8 -3.9 -.3 -1.8 -.8 3.8 -.6 4 -.2 3.9zM674.3 391.8l1.4 3.5 .6 3.7 .1 -1.8 -.6 -3.7 -1.4 -3.5zM414.6 426.3l.4 -4.7 .6 -4.6 -.5 -1.9 -.6 4.6 -.4 4.7zM558 400.3l-.7 -1.3 -.1 -1.8 .7 1.3zM706.1 399l-.7 1.3 .1 -1.8 .7 -1.3zM440.1 423.1l.1 -4.1 .4 -4.1 -.4 -1.9 -.4 4.1 -.2 4.1zM822.8 414.9l.4 4.1 .1 4.1 .5 -1.9 -.2 -4.1 -.4 -4.1zM374.9 442.5l.3 -5.7 .6 -5.6 -.6 -1.9 -.6 5.6 -.3 5.7zM887.6 431.2l.6 5.6 .3 5.7 .6 -1.9 -.3 -5.7 -.6 -5.6zM874.6 429.5l.4 5.3 .2 5.4 .6 -1.9 -.2 -5.3 -.4 -5.3zM388.2 440.2l.2 -5.4 .4 -5.3 -.6 -1.8 -.4 5.3 -.2 5.3zM901.5 439.9l.3 3.6 .1 3.6 .6 -1.8 -.1 -3.7 -.3 -3.6zM361.5 447.1l.1 -3.6 .3 -3.6 -.6 -1.9 -.3 3.6 -.1 3.7zM401.4 438l0 -5.1 .3 -5 -.5 -1.9 -.3 5 0 5.1zM658.5 399l-.7 4.4 -2.6 4.2 .1 -1.9 2.5 -4.1 .7 -4.4zM395.8 440.4l-1 -1.3 -.5 -1.9 1 1.3zM901.9 447.1l0 3.7 0 3.7 .6 -1.9 .1 -3.7 -.1 -3.6zM361.5 454.5l0 -3.7 0 -3.7 -.6 -1.8 -.1 3.6 .1 3.7zM409 438.2l-1 -1.3 -.6 -1.9 1 1.3zM908.6 458.4l-1.1 1.3 .6 -1.9 1.1 -1.3zM369.6 456.7l-1.1 -1.3 -.6 -1.9 1.1 1.3zM531 425.3l-.2 1.6 -.3 -1.9 .3 -1.5zM518.9 428.5l-.3 1.6 -.2 -1.9 .3 -1.6zM750.5 430.1l-2.4 5.1 -3.1 5.1 .3 -1.9 3 -5 2.5 -5.2zM506.5 444.7l-3.3 -5.7 -2.6 -5.7 -.3 -1.9 2.6 5.8 3.3 5.6zM494.3 449.1l-2.3 -4.1 -2.1 -4.2 -1.8 -4.2 -.3 -1.9 1.8 4.2 2 4.2 2.4 4.1zM596.5 440.4l-.4 1.6 -.1 -1.9 .4 -1.6zM813 466.8l-.1 -1.7 .4 -1.9 .2 1.8zM474.3 465.5l-4.7 -7.4 -.4 -1.9 4.7 7.4zM806.5 462.7l-4.9 8 .4 -1.9 4.9 -8zM717.6 451.2l-.7 1.6 .2 -1.9 .7 -1.6zM832.3 472.2l-2.5 4.6 -2.7 4.7 .5 -1.9 2.7 -4.7 2.5 -4.6zM436.3 481.5l-2.7 -4.7 -2.5 -4.6 -.5 -1.9 2.5 4.6 2.7 4.7zM536.3 459.2l-.7 -1.6 -.2 -1.9 .7 1.7zM727.8 457.6l-.7 1.6 .2 -1.8 .7 -1.7zM840.2 487l-3.2 4.9 -3.4 5 .5 -2 3.4 -4.9 3.2 -4.9zM853.5 492.6l-3.3 5.3 -3.5 5.3 .5 -1.9 3.6 -5.3 3.2 -5.3zM416.7 503.2l-3.5 -5.3 -3.3 -5.3 -.5 -1.9 3.2 5.3 3.6 5.3zM696.1 473.7l-.5 -1.8 .1 -1.9 .6 1.8zM860 509.7l-4 5.6 -4.4 5.5 .6 -1.9 4.4 -5.5 4 -5.6zM805.2 506.4l-.5 1.9 .4 -1.9 .6 -1.9zM617.2 485.1l-2 10 -.1 -1.9 2.1 -10zM764.2 505.5l-1 1.7 .3 -1.9 1 -1.7zM774.5 514l-1 1.8 .4 -1.9 1 -1.8zM615.2 495.1l-2.1 10.3 -.1 -1.9 2.1 -10.3zM456.9 524.9l-.8 -1.9 -.4 -1.9 .7 1.9zM415.2 535.8l.4 2 -.6 -1.9 -.4 -2zM564.7 505.3l-.2 2 -.2 -1.9 .2 -2zM698.9 507.3l-.2 -2 .2 -1.9 .2 2zM819.1 531.5l-.7 2 .5 -2 .7 -1.9zM606.7 506.7l-.6 -1.9 0 -2 .6 2zM580.5 513.5l-.2 -2.1 -.1 -1.9 .2 2.1zM683.1 511.4l-.2 2.1 .1 -1.9 .2 -2.1zM650.3 505.4l2.2 10.7 .1 -1.9 -2.2 -10.7zM491 532l-1.1 -1.8 -.4 -1.9 1.2 1.8zM576 524.1l-.2 -2.1 -.2 -1.9 .2 2.1zM610.9 516.1l-2.2 11 -.1 -1.9 2.2 -11zM652.5 516.1l2.2 11 .1 -1.9 -2.2 -11zM531.4 531.2l-.5 2.1 -.3 -1.9 .5 -2.2zM433.7 562l-.9 -2.1 -.5 -1.9 .9 2zM544.7 535.9l-.3 2.3 -.2 -2 .3 -2.2zM654.7 527.1l2.3 11.4 .1 -2 -2.3 -11.3zM842.7 569.9l-.9 2.1 .6 -2 .9 -2.1zM606.4 538.5l-2.4 11.7 -.1 -1.9 2.4 -11.8zM657 538.5l2.4 11.7 .1 -1.9 -2.4 -11.8zM581.6 549.4l-.4 -2.2 -.1 -1.9 .4 2.2zM552.7 551.3l-.1 2.3 -.2 -1.9 0 -2.3zM827.4 580.9l-1.1 2.1 .5 -2 1.2 -2zM674.9 548.3l3.7 12 .1 -1.9 -3.7 -12zM619.7 551.2l-1.2 12.3 -.1 -1.9 1.2 -12.3zM643.7 551.2l1.2 12.3 .1 -1.9 -1.2 -12.3zM577.8 561.4l-.4 -2.3 -.1 -1.9 .4 2.3zM454.2 593.2l-1.4 -2 -.5 -1.9 1.4 2zM678.6 560.3l3.8 12.3 .2 -1.9 -3.9 -12.3zM618.5 563.5l-1.3 12.7 0 -2 1.2 -12.6zM644.9 563.5l1.3 12.7 0 -2 -1.2 -12.6zM748.7 583.9l-.4 -2.5 .4 -1.9 .3 2.5zM672.1 574l-.7 2.4 .2 -1.9 .6 -2.4zM682.4 572.6l4 12.8 .1 -1.9 -3.9 -12.8zM792.3 600.6l-1.7 2 .5 -1.9 1.6 -2zM472.8 602.6l-1.7 -2 -.4 -1.9 1.6 2zM599 574.9l-2.7 13 -.1 -2 2.7 -12.9zM694 584.1l-.4 2.5 .2 -1.9 .4 -2.5zM617.2 576.2l-1.3 13.1 0 -1.9 1.3 -13.2zM552.7 592.2l.1 2.6 -.2 -2 -.2 -2.5zM577 585.4l-4.1 13.2 -.1 -1.9 4.1 -13.2zM667.1 587.9l2.7 13.4 .1 -1.9 -2.7 -13.5z"/><path fill="#b7b6b9" stroke="#b7b6b9" d="M642.8 276.3l-.6 -.8 0 -1.7 .6 .8zM528.7 289.3l-3.8 -4.2 -.2 -1.7 3.8 4.2zM641.8 285.7l-.6 -.8 0 -1.7 .6 .9zM532.6 293.6l-3.9 -4.3 -.2 -1.7 3.9 4.3zM730.8 293.6l3.9 -4.3 .2 -1.7 -3.9 4.3zM623.9 299.7l-.7 1 0 -1.7 .6 -1zM704.9 308.9l3.6 -4.8 .2 -1.7 -3.7 4.7zM439.8 330.9l-.9 -.9 -.4 -1.7 .9 .9zM585 332.2l-3.4 -5.4 -.1 -1.7 3.5 5.3zM678.4 332.2l3.4 -5.4 .1 -1.7 -3.5 5.3zM785.7 351l-.5 -1.2 .3 -1.8 .5 1.2zM592.2 343.2l-3.6 -5.6 -.1 -1.7 3.7 5.6zM671.2 343.2l3.6 -5.6 .1 -1.7 -3.7 5.6zM735.2 361.3l-.5 -1.3 .2 -1.8 .5 1.3zM843 399l1.5 4.4 1.3 4.5 .5 -1.9 -1.3 -4.4 -1.6 -4.4zM417.6 407.9l1.3 -4.5 1.5 -4.4 -.4 -1.8 -1.6 4.4 -1.3 4.4zM456.1 399l2.6 -7.2 -.4 -1.8 -2.6 7.2zM882.7 409.4l1.6 5.3 1.4 5.4 .5 -1.8 -1.4 -5.4 -1.6 -5.4zM429.8 407.4l1.2 -4.2 1.3 -4.2 -.4 -1.8 -1.4 4.1 -1.1 4.2zM390.4 419.1l1.2 -5.2 1.4 -5 -.5 -1.9 -1.4 5.1 -1.2 5.1zM767.6 387.7l1.6 3.7 1.3 3.8 1.1 3.8 .3 -1.8 -1.1 -3.9 -1.3 -3.7 -1.6 -3.7zM897.8 418.9l.8 3.4 .8 3.5 .6 -1.9 -.8 -3.4 -.8 -3.5zM364 425.8l.8 -3.5 .8 -3.4 -.6 -1.9 -.8 3.5 -.8 3.4zM442 406.9l1 -4 1.2 -3.9 -.4 -1.8 -1.2 3.9 -1 3.9zM858.1 408.4l1.2 4.8 1.1 4.8 .5 -1.8 -1.1 -4.9 -1.2 -4.8zM403 418l1.1 -4.8 1.2 -4.8 -.5 -1.9 -1.2 4.8 -1.1 4.9zM454.2 406.3l1.9 -7.3 -.4 -1.8 -1.8 7.3zM552.9 392.5l2.9 -6.3 -.1 -1.9 -2.9 6.3zM899.4 425.8l.7 3.5 .6 3.5 .6 -1.9 -.6 -3.5 -.7 -3.5zM362.7 432.8l.6 -3.5 .7 -3.5 -.6 -1.9 -.7 3.5 -.6 3.5zM375.8 431.2l.8 -5.6 1.1 -5.5 -.5 -1.8 -1.1 5.4 -.9 5.6zM885.7 420.1l1.1 5.5 .8 5.6 .6 -1.9 -.9 -5.6 -1.1 -5.4zM873 419.1l.9 5.2 .7 5.2 .6 -1.8 -.7 -5.3 -1 -5.2zM388.8 429.5l.7 -5.2 .9 -5.2 -.5 -1.9 -1 5.2 -.7 5.3zM599 399l.7 -3.6 1.6 -3.4 2.5 -3.2 0 -1.8 -2.6 3.2 -1.6 3.4 -.7 3.6zM900.7 432.8l.4 3.5 .4 3.6 .6 -1.9 -.3 -3.5 -.5 -3.6zM361.9 439.9l.4 -3.6 .4 -3.5 -.6 -1.9 -.5 3.6 -.3 3.5zM649.5 392.5l2.2 3.1 .8 3.4 .1 -1.8 -.8 -3.4 -2.2 -3.1zM694.2 399l-.7 1.3 .1 -1.8 .7 -1.3zM521.7 409.5l-.9 -1.3 -.3 -1.8 1 1.3zM829.5 432.5l-1.1 1.3 .5 -1.9 1 -1.3zM681.3 407.4l-1.9 4.1 -2.6 3.9 .1 -1.8 2.7 -4 1.8 -4.1zM586.6 415.4l-2.6 -3.9 -1.9 -4.1 -.1 -1.9 1.8 4.1 2.7 4zM575.7 419.4l-3.3 -4.9 -2.1 -5.1 -.2 -1.9 2.2 5.2 3.2 4.9zM867.9 449.7l-1.1 1.2 .5 -1.9 1.2 -1.2zM714.4 420.6l-4.2 7 .1 -1.8 4.3 -7zM541.8 431.8l-2.6 -4 -2.1 -4 -.3 -1.9 2.2 4 2.6 4zM726.3 423.8l-2.1 4 -2.6 4 .2 -1.9 2.6 -4 2.2 -4zM738.4 426.9l-2.3 4.6 -2.9 4.5 .3 -1.8 2.8 -4.6 2.3 -4.6zM794.6 443.2l-.4 -1.7 .4 -1.9 .4 1.7zM807.4 446.5l-.4 -1.6 .4 -1.9 .4 1.6zM641.7 430.1l3.4 8.2 0 -1.8 -3.4 -8.2zM446.5 456.7l-.3 1.7 -.4 -1.9 .3 -1.7zM843.5 466.6l-.4 -1.8 .5 -1.8 .4 1.7zM618.3 438.3l-3.5 8.4 -.1 -1.8 3.6 -8.4zM769.1 449.1l-2.8 4.1 -3 4 -3.3 4 .3 -1.9 3.3 -4 3.1 -4 2.7 -4.1zM614.8 446.7l-3.7 8.7 0 -1.9 3.6 -8.6zM648.6 446.7l3.7 8.7 0 -1.9 -3.6 -8.6zM479.8 472.6l-5.5 -7.1 -.4 -1.9 5.5 7.1zM801.6 470.7l-5.8 7.8 .4 -1.9 5.8 -7.8zM814.2 476l-2.9 4.3 -3.2 4.2 .5 -1.9 3.2 -4.2 2.9 -4.3zM611.1 455.4l-3.7 8.9 0 -1.9 3.7 -8.9zM389.5 501.2l-.2 2 -.6 -1.9 .2 -2zM808.1 484.5l-3.4 4.2 -3.7 4.1 .4 -1.9 3.7 -4.1 3.5 -4.2zM462.4 492.8l-3.7 -4.1 -3.4 -4.2 -.5 -1.9 3.5 4.2 3.7 4.1zM656 464.3l3.8 9.1 .1 -1.9 -3.9 -9.1zM820.8 490.6l-3.6 4.5 -3.9 4.5 .4 -1.9 3.9 -4.5 3.6 -4.5zM450.1 499.6l-3.9 -4.5 -3.6 -4.5 -.4 -1.9 3.6 4.5 3.9 4.5zM424.8 513.6l-4.2 -5.2 -3.9 -5.2 -.5 -1.9 3.9 5.2 4.2 5.2zM659.8 473.4l4 9.5 0 -1.9 -3.9 -9.5zM434.3 523.7l-4.9 -5 -4.6 -5.1 -.5 -1.9 4.6 5.1 4.9 5zM838.6 513.6l-4.6 5.1 -4.9 5 .5 -1.9 4.9 -5 4.6 -5.1zM421.6 531.7l-5.1 -5.4 -4.7 -5.5 -.6 -1.9 4.8 5.5 5.1 5.4zM864.9 528.2l-4.9 5.9 -5.3 5.8 .6 -1.9 5.3 -5.8 4.9 -5.9zM595.6 492.6l-4.2 9.9 -.1 -1.9 4.2 -10zM635.2 506.2l-1 1.9 0 -2 1 -1.8zM629.2 508.1l-1 -1.9 0 -1.9 1 1.8zM854.7 539.9l-5.7 5.7 -6.1 5.6 .6 -2 6.1 -5.5 5.7 -5.7zM629.2 518.9l-1.1 -1.9 0 -2 1.1 2zM503.9 538.9l-1.4 -1.8 -.4 -1.9 1.4 1.7zM754.3 537.8l-.7 -2.2 .3 -1.9 .7 2.2zM680.8 523.5l4.5 10.9 .2 -1.9 -4.6 -11zM500.6 545.8l-.8 2.2 -.3 -1.9 .8 -2.3zM763.6 548l-.8 -2.2 .3 -2 .8 2.3zM578.1 534.4l-4.8 11.3 -.1 -1.9 4.7 -11.3zM685.3 534.4l4.8 11.3 .1 -1.9 -4.7 -11.3zM573.3 545.7l-4.9 11.7 -.1 -2 4.9 -11.6zM690.1 545.7l4.9 11.7 .1 -2 -4.9 -11.6zM506.5 563.2l-.6 2.4 -.4 -1.9 .6 -2.4zM773.5 576.7l-1.6 1.8 .3 -1.9 1.7 -1.8zM568.4 557.4l-5 12 -.2 -1.9 5.1 -12.1zM705.2 581.9l5.4 12.9 .2 -2 -5.4 -12.8zM615.9 589.3l-1.3 13.6 -.1 -2 1.4 -13.5zM628.8 605.7l-1.1 -2.5 0 -1.9 1.1 2.5zM593.6 601.3l-2.8 13.9 -.2 -1.9 2.9 -13.9zM669.8 601.3l2.8 13.9 .2 -1.9 -2.9 -13.9zM614.6 602.9l-1.4 14 -.1 -1.9 1.4 -14.1zM648.8 602.9l1.4 14 .1 -1.9 -1.4 -14.1zM613.2 616.9l-1.4 14.6 -.1 -1.9 1.4 -14.6zM604.4 633.7l-1 -2.7 0 -1.9 .9 2.7zM611.8 631.5l-1.5 2.6 -.1 -1.9 1.5 -2.6zM635.9 632l-1.2 2.6 0 -1.9 1.2 -2.6zM628.7 634.6l-1.2 -2.6 0 -1.9 1.2 2.6z"/><path fill="#bab9bc" stroke="#bab9bc" d="M714.5 311.6l4.2 -4.6 .2 -1.8 -4.2 4.7zM634.2 310.1l-.7 1 0 -1.7 .7 -1zM629.9 311.1l-.7 -1 0 -1.7 .7 1zM553.2 316.3l-4.3 -4.7 -.2 -1.7 4.3 4.7zM526.4 350.1l-.8 -1 -.2 -1.8 .8 1.1zM432.3 399l1.6 -4.1 1.7 -4 -.4 -1.9 -1.8 4.1 -1.5 4.1zM854.9 399l1.7 4.7 1.5 4.7 .5 -1.9 -1.5 -4.7 -1.7 -4.6zM444.2 399l1.4 -3.8 1.5 -3.8 -.4 -1.9 -1.5 3.8 -1.4 3.9zM816.3 391.4l1.5 3.8 1.4 3.8 .4 -1.8 -1.4 -3.9 -1.5 -3.8zM895.7 412.1l1.1 3.4 1 3.4 .6 -1.9 -1 -3.4 -1.1 -3.3zM365.6 418.9l1 -3.4 1.1 -3.4 -.6 -1.8 -1.1 3.3 -1 3.4zM530 390.5l1.8 -4.1 2.2 -3.9 -.2 -1.9 -2.2 4 -1.9 4.1zM718.5 384.3l1.9 3.6 1.6 3.6 .2 -1.8 -1.6 -3.7 -1.9 -3.5zM533.9 408.5l-.9 -1.3 -.3 -1.8 1 1.2zM760.7 422.3l-.7 -1.6 .3 -1.8 .6 1.5zM822.6 441.4l-.7 -1.6 .5 -1.9 .6 1.7zM846.7 456.8l-.6 -1.7 .5 -1.9 .6 1.7zM425.3 454.6l-1.4 -1.2 -.4 -1.9 1.3 1.2zM548.3 439.4l-3.5 -3.7 -3 -3.9 -.2 -1.9 3 3.9 3.5 3.8zM629.5 432.2l-.9 -1.4 0 -1.9 .9 1.5zM890.6 479.7l-1.4 1.2 .6 -1.9 1.4 -1.2zM884.3 479.4l-.6 -1.9 .6 -1.9 .6 1.9zM393.4 473.2l-.5 1.9 -.6 -1.9 .5 -1.9zM526.2 450.1l-4.2 -4.8 -3.6 -5 -.3 -1.9 3.7 5 4.2 4.8zM876.8 475.4l-1.5 1.2 .6 -1.9 1.5 -1.2zM388.1 476.6l-1.5 -1.2 -.6 -1.9 1.5 1.2zM629.5 440.8l-1 -1.6 0 -1.8 .9 1.5zM756.9 444.7l-3.9 5.5 -4.5 5.4 .2 -1.9 4.6 -5.4 3.9 -5.5zM629.4 449.6l-.9 -1.6 0 -1.9 .9 1.6zM571.7 450.8l-.8 1.6 -.2 -1.9 .8 -1.6zM783.6 472.6l-6.4 7 .4 -1.9 6.4 -7zM474.4 486.1l-6.8 -7.6 -.4 -1.9 6.8 7.6zM482.1 493.5l-7.7 -7.4 -.4 -1.9 7.7 7.4zM470.5 500.8l-4.2 -4 -3.9 -4 -.4 -1.9 3.9 4 4.2 4zM801 492.8l-3.9 4 -4.2 4 .4 -1.9 4.2 -4 3.9 -4zM458.7 508.3l-4.4 -4.3 -4.2 -4.4 -.4 -1.9 4.1 4.4 4.5 4.3zM446.6 515.9l-4.6 -4.6 -4.4 -4.8 -.5 -1.9 4.4 4.7 4.6 4.7zM825.8 506.5l-4.4 4.8 -4.6 4.6 .5 -1.9 4.6 -4.7 4.4 -4.7zM726 499.1l-1.4 1.5 .2 -1.9 1.4 -1.5zM445 533.5l-5.5 -4.9 -5.2 -4.9 -.5 -1.9 5.2 4.9 5.5 4.8zM432.9 542.2l-5.8 -5.2 -5.5 -5.3 -.5 -1.9 5.4 5.3 5.9 5.2zM445.6 552.2l-6.5 -4.9 -6.2 -5.1 -.5 -1.9 6.1 5.1 6.6 4.9zM773.1 558.5l-.8 -2.3 .4 -1.9 .8 2.3zM491.1 556.2l-.8 2.3 -.4 -1.9 .8 -2.3zM704.8 542.3l6 11.3 .2 -1.9 -6 -11.3zM782.9 569.3l-.8 -2.3 .4 -2 .9 2.4zM740.4 560.3l-1.8 1.7 .3 -1.9 1.8 -1.7zM710.8 553.6l6.2 11.7 .3 -1.9 -6.3 -11.7zM546.4 565.3l-6.4 12.1 -.3 -1.9 6.4 -12.1zM717 565.3l6.4 12.1 .3 -1.9 -6.4 -12.1zM723.4 577.4l6.7 12.4 .3 -1.9 -6.7 -12.4zM737.4 590.2l-2 1.7 .3 -1.9 2 -1.7zM533.3 589.8l-6.8 12.9 -.3 -1.9 6.8 -12.9z"/><path fill="#bdbcbf" stroke="#bdbcbf" d="M557.5 321.1l-4.3 -4.8 -.2 -1.7 4.4 4.8zM705.9 321.1l4.3 -4.8 .2 -1.7 -4.4 4.8zM430.3 338.1l-1 -.8 -.4 -1.8 1 .9zM562 326l-4.5 -4.9 -.1 -1.7 4.5 4.9zM634.3 321.1l-.8 1 0 -1.8 .8 -.9zM629.9 322.1l-.8 -1 0 -1.7 .8 .9zM566.5 331l-4.5 -5 -.1 -1.7 4.5 5zM696.9 331l4.5 -5 .1 -1.7 -4.5 5zM634.3 326.8l-.8 1 0 -1.8 .8 -1zM476.8 341.1l-.6 1.2 -.3 -1.8 .6 -1.1zM629.8 345.7l-.8 -1.1 0 -1.8 .8 1.1zM629.8 351.9l-.8 -1.1 0 -1.8 .8 1.1zM700.6 365.6l-.7 -1.2 .1 -1.8 .7 1.2zM408.5 399l1.9 -4.6 2.1 -4.5 -.4 -1.8 -2.2 4.5 -1.9 4.6zM850.9 389.9l2.1 4.5 1.9 4.6 .5 -1.8 -1.9 -4.6 -2.2 -4.5zM420.4 399l1.7 -4.3 1.9 -4.3 -.4 -1.8 -1.9 4.2 -1.7 4.4zM839.4 390.4l1.9 4.3 1.7 4.3 .4 -1.8 -1.7 -4.4 -1.9 -4.2zM893.3 405.5l1.3 3.3 1.1 3.3 .6 -1.8 -1.1 -3.4 -1.3 -3.3zM367.7 412.1l1.1 -3.3 1.3 -3.3 -.6 -1.9 -1.3 3.3 -1.1 3.4zM458.7 391.8l3.2 -6.9 -.3 -1.8 -3.3 6.9zM539 406.7l-.8 1.4 -.2 -1.8 .8 -1.4zM599.8 421.1l-1 1.4 0 -1.8 .9 -1.5zM800.5 443.2l-1.4 1.2 .4 -1.9 1.4 -1.2zM673.7 428.3l-1 -1.4 .1 -1.9 1 1.5zM710.2 427.6l-5.8 6.6 .1 -1.8 5.8 -6.6zM559 434.2l-5.8 -6.6 -.1 -1.8 5.8 6.6zM748.5 455.6l-5.2 5.2 -5.8 5 .2 -1.9 5.8 -5 5.2 -5.2zM760 461.2l-3.7 3.9 -3.9 3.7 -4.3 3.7 .3 -1.9 4.2 -3.7 4 -3.7 3.7 -3.9zM370.5 511.2l-1.9 -1.2 -.6 -1.9 1.8 1.2zM594.3 461.5l-5.6 8.6 -.1 -1.9 5.6 -8.6zM669.1 461.5l5.6 8.6 .1 -1.9 -5.6 -8.6zM777.2 479.6l-7.2 6.8 .3 -1.9 7.3 -6.8zM501.5 492.8l-8.1 -6.4 -.3 -1.9 8.1 6.4zM887.5 523l-2 1 .6 -1.9 2 -1zM554.9 483l-1.4 -1.5 -.2 -1.9 1.4 1.5zM490.7 500.6l-8.6 -7.1 -.4 -1.9 8.7 7zM582.9 479l-6 9.2 -.1 -1.9 6 -9.2zM680.5 479l6 9.2 .1 -1.9 -6 -9.2zM576.9 488.2l-6.1 9.4 -.2 -1.9 6.2 -9.4zM686.5 488.2l6.1 9.4 .2 -1.9 -6.2 -9.4zM468.4 516.6l-5 -4.1 -4.7 -4.2 -.4 -1.9 4.7 4.2 5 4.1zM804.7 508.3l-4.7 4.2 -5 4.1 .4 -1.9 5 -4.1 4.7 -4.2zM795 516.6l-5.3 4 -5.5 3.9 .4 -1.9 5.5 -3.9 5.3 -4zM613.1 505.4l-1.4 1.8 -.1 -1.9 1.4 -1.8zM468.3 533.5l-5.9 -4.2 -5.5 -4.4 -.5 -1.9 5.6 4.4 5.8 4.2zM564.5 507.3l-6.5 10 -.2 -1.9 6.5 -10zM698.9 507.3l6.5 10 .2 -1.9 -6.5 -10zM795.1 533.5l-6.1 4.1 -6.5 4 .5 -1.9 6.4 -4 6.2 -4.1zM558 517.3l-6.7 10.3 -.2 -2 6.7 -10.2zM705.4 517.3l6.7 10.3 .2 -2 -6.7 -10.2zM806.3 542.8l-6.5 4.4 -6.8 4.3 .5 -1.9 6.8 -4.3 6.5 -4.5zM725.8 538.2l-1.8 1.5 .2 -1.9 1.8 -1.6zM448.5 572.2l-7.6 -5 -7.2 -5.2 -.5 -2 7.2 5.2 7.6 5.1zM544.4 538.2l-7.1 10.9 -.2 -2 7.1 -10.9zM537.3 549.1l-7.3 11.2 -.2 -1.9 7.3 -11.3zM726.1 549.1l7.3 11.2 .2 -1.9 -7.3 -11.3zM464.7 581.7l-8.2 -4.7 -8 -4.8 -.5 -1.9 8 4.8 8.3 4.7zM530 560.3l-7.5 11.6 -.3 -1.9 7.6 -11.6zM522.5 571.9l-7.8 12 -.3 -1.9 7.8 -12zM581 572.6l-1.8 2.1 -.2 -2 1.8 -2zM514.7 583.9l-8.1 12.4 -.3 -1.9 8.1 -12.4zM748.7 583.9l8.1 12.4 .3 -1.9 -8.1 -12.4zM688.2 587.5l-1.8 -2.1 .1 -1.9 1.9 2.1z"/><path fill="#c0bfc2" stroke="#c0bfc2" d="M521 297.1l-4.4 -4.1 -.2 -1.7 4.4 4.2zM525.5 301.4l-4.5 -4.3 -.2 -1.6 4.5 4.2zM737.9 301.4l4.5 -4.3 .2 -1.6 -4.5 4.2zM421.3 345.8l-1.1 -.9 -.4 -1.7 1.1 .8zM843.2 344.9l-1.1 .9 .4 -1.8 1.1 -.8zM771.5 340l-.7 -1.1 .2 -1.8 .7 1.1zM456.1 346.2l-1 -.9 -.4 -1.8 1.1 .9zM571.2 336.1l-4.7 -5.1 -.1 -1.7 4.7 5zM692.2 336.1l4.7 -5.1 .1 -1.7 -4.7 5zM687.5 341.3l4.7 -5.2 .1 -1.8 -4.7 5.2zM575.9 341.3l-4.7 -5.2 -.1 -1.8 4.7 5.2zM585.7 352.1l-5 -5.5 -.1 -1.7 5 5.4zM677.7 352.1l5 -5.5 .1 -1.7 -5 5.4zM539 352.5l-.8 1.2 -.1 -1.8 .7 -1.2zM590.7 357.6l-5 -5.5 -.1 -1.8 5 5.5zM667.6 363.3l5.1 -5.7 .1 -1.8 -5.2 5.7zM873.8 389l2.6 4.9 2.3 5.1 .5 -1.8 -2.3 -5.1 -2.6 -5zM424 390.4l2.1 -4.2 2.3 -4.1 -.4 -1.8 -2.3 4.1 -2.1 4.2zM862.4 389.4l2.3 4.8 2.1 4.8 .5 -1.8 -2.1 -4.9 -2.4 -4.7zM461.9 384.9l3.9 -6.7 -.4 -1.9 -3.8 6.8zM797.6 378.2l3.9 6.7 .3 -1.8 -3.8 -6.8zM890.6 399l1.4 3.2 1.3 3.3 .6 -1.9 -1.3 -3.2 -1.4 -3.2zM370.1 405.5l1.3 -3.3 1.4 -3.2 -.6 -1.8 -1.4 3.2 -1.3 3.2zM484.5 386.8l2 -4 2.2 -3.8 2.5 -3.8 -.3 -1.8 -2.5 3.8 -2.2 3.8 -2.1 3.9zM761.6 377l2.2 3.5 2 3.6 1.8 3.6 .3 -1.8 -1.8 -3.7 -2 -3.5 -2.2 -3.5zM669.4 385.2l2.8 3.2 2.1 3.4 .1 -1.8 -2.1 -3.4 -2.8 -3.2zM665.4 400.3l-1 -1.3 .1 -1.8 1 1.3zM514.7 408.7l-.9 1.5 -.3 -1.9 .9 -1.4zM526.8 407.7l-.8 1.4 -.2 -1.8 .8 -1.4zM823.9 433l-.8 -1.6 .4 -1.9 .8 1.6zM453.1 429.2l-.8 1.6 -.4 -1.9 .8 -1.5zM862.1 449.9l-.8 -1.7 .5 -1.9 .8 1.7zM391.8 517.3l-2 -1 -.6 -2 2 1.1zM500.2 507.2l-9.5 -6.6 -.3 -2 9.5 6.7zM778.7 508.2l-1.3 -1.9 .4 -1.9 1.2 1.9zM489.9 515.8l-5.2 -3.6 -5 -3.7 -.4 -1.9 5 3.7 5.2 3.6zM784.2 524.5l-5.8 3.8 -6 3.7 .3 -1.9 6.1 -3.7 5.8 -3.8zM812.4 551.7l-1.3 -2.2 .5 -2 1.3 2.3zM782.5 541.6l-6.7 3.8 -6.9 3.7 .4 -1.9 6.9 -3.7 6.8 -3.8zM494.5 549.1l-6.9 -3.7 -6.7 -3.8 -.5 -1.9 6.8 3.8 6.9 3.7zM732.5 533.3l8.1 10.5 .3 -1.9 -8.1 -10.5zM530.9 533.3l-8.1 10.5 -.3 -1.9 8.1 -10.5zM793 551.5l-7.1 4.2 -7.4 3.9 .4 -1.9 7.4 -4 7.2 -4.1zM553.7 544.1l-2 -1.5 -.2 -1.9 2 1.5zM522.8 543.8l-8.3 10.7 -.3 -1.9 8.3 -10.7zM740.6 543.8l8.3 10.7 .3 -1.9 -8.3 -10.7zM748.9 554.5l8.6 11.1 .4 -1.9 -8.7 -11.1zM491.5 578.5l-8.4 -3.9 -8.1 -4.1 -.5 -1.9 8.2 4.1 8.5 3.9zM757.5 565.6l8.9 11.5 .3 -2 -8.8 -11.4zM505.9 565.6l-8.9 11.5 -.3 -2 8.8 -11.4zM798.7 581.7l-8.7 4.4 -8.9 4.3 .4 -1.9 9 -4.3 8.6 -4.4zM497 577.1l-9.1 11.8 -.4 -2 9.2 -11.8zM707.1 570.2l-2.2 1.5 .2 -2 2.2 -1.4zM487.9 588.9l-9.4 12.1 -.5 -1.9 9.5 -12.2zM775.5 588.9l9.4 12.1 .5 -1.9 -9.5 -12.2zM501.1 598.1l-9.5 -3.7 -9.3 -4 -.4 -1.9 9.3 4 9.5 3.7zM693.6 586.6l-2.4 1.4 .2 -1.9 2.4 -1.4zM552.8 594.8l-2.1 2 -.2 -1.9 2.1 -2.1zM607.2 635l-2.8 -1.3 -.1 -1.9 2.8 1.3z"/><path fill="#c3c2c5" stroke="#c3c2c5" d="M728.7 310.2l4.6 -4.5 .2 -1.7 -4.6 4.4zM539.4 314.6l-4.7 -4.4 -.2 -1.8 4.8 4.5zM819.9 330.4l-.7 -1.1 .4 -1.8 .6 1.1zM439.5 350.6l-1.2 -.9 -.4 -1.8 1.2 .9zM825.1 349.7l-1.2 .9 .4 -1.8 1.2 -.9zM515.5 341.2l-.7 1.1 -.3 -1.8 .8 -1.1zM375.9 392.7l1.6 -3.2 1.8 -3 -.6 -1.9 -1.7 3.1 -1.7 3.1zM884.1 386.5l1.8 3 1.6 3.2 .6 -1.9 -1.7 -3.1 -1.7 -3.1zM857.1 380.3l2.7 4.5 2.6 4.6 .4 -1.8 -2.5 -4.6 -2.7 -4.6zM439.6 383l2.2 -3.8 2.4 -3.8 -.4 -1.8 -2.4 3.8 -2.2 3.8zM412.5 389.9l2.3 -4.4 2.5 -4.3 -.4 -1.8 -2.5 4.3 -2.3 4.4zM887.5 392.7l1.6 3.1 1.5 3.2 .6 -1.8 -1.6 -3.2 -1.5 -3.2zM372.8 399l1.5 -3.2 1.6 -3.1 -.6 -1.9 -1.5 3.2 -1.6 3.2zM450.7 383.9l2.1 -3.6 2.2 -3.5 -.4 -1.8 -2.2 3.5 -2.1 3.6zM808.4 376.8l2.2 3.5 2.1 3.6 .4 -1.8 -2.1 -3.6 -2.2 -3.5zM601.1 369l-5.3 -5.7 0 -1.8 5.2 5.7zM713.7 377.5l2.6 3.4 2.2 3.4 .2 -1.8 -2.2 -3.5 -2.6 -3.3zM544.9 384.3l2.2 -3.4 2.6 -3.4 -.2 -1.8 -2.6 3.3 -2.2 3.5zM611.9 381l-5.5 -6.1 0 -1.8 5.5 6.1zM688.8 378.2l3 3.1 2.6 3.3 2.1 3.4 .2 -1.8 -2.2 -3.4 -2.6 -3.3 -3 -3.1zM577.9 389.9l2.8 -4.3 3.5 -3.9 -.1 -1.8 -3.5 3.9 -2.8 4.3zM689.3 400.3l-1 -1.3 .1 -1.8 1 1.3zM414.5 435.8l-.9 1.6 -.5 -1.9 .9 -1.6zM375.3 454l-.9 1.7 -.6 -1.9 .9 -1.7zM889 455.7l-.9 -1.7 .6 -1.9 .9 1.7zM762.8 433.3l-1.4 1.2 .3 -1.9 1.4 -1.2zM556.5 446.5l-4.3 -3.4 -3.9 -3.7 -.2 -1.8 3.9 3.6 4.3 3.4zM546.5 452.8l-4.8 -3.9 -4.3 -4.2 -.3 -1.9 4.4 4.2 4.8 3.9zM819.3 467.4l-1.7 1.1 .4 -1.9 1.7 -1.1zM531.8 464.2l-1.2 1.6 -.2 -1.9 1.2 -1.6zM732.8 465.8l-1.2 -1.6 .2 -1.9 1.2 1.6zM748.1 472.5l-4.6 3.6 -4.9 3.4 -5.1 3.3 .2 -1.9 5.2 -3.3 4.9 -3.4 4.6 -3.6zM520.3 490.7l-5.6 -3.6 -5.3 -3.8 -4.9 -3.9 -.3 -1.9 4.9 3.9 5.3 3.8 5.6 3.6zM758.9 479.4l-4.9 3.9 -5.3 3.8 -5.6 3.6 .3 -1.9 5.6 -3.6 5.3 -3.8 4.9 -3.9zM510.4 498.9l-8.9 -6.1 -.3 -1.9 8.9 6.1zM400.6 529.2l-2.1 -1 -.6 -1.9 2.1 .9zM763.2 507.2l-10.4 6.3 .3 -2 10.4 -6.2zM773.5 515.8l-5.4 3.4 -5.7 3.4 .4 -1.9 5.7 -3.4 5.4 -3.4zM397.8 549.1l-2.4 -.9 -.6 -1.9 2.4 .9zM451.7 531.1l-1.4 2.1 -.5 -1.9 1.4 -2.1zM825.2 541.9l-1.5 -2.1 .5 -1.9 1.5 2.1zM772.4 532l-6.3 3.5 -6.6 3.4 .4 -2 6.5 -3.3 6.3 -3.5zM762.9 567l-8.2 3.5 -8.5 3.2 .3 -2 8.5 -3.2 8.3 -3.4zM580.2 562.7l-2.4 -1.3 -.1 -1.9 2.3 1.3zM732.3 591.8l-2.2 -2 .3 -1.9 2.2 2zM521.1 604.9l-10.1 -3.2 -9.9 -3.6 -.4 -1.9 9.9 3.5 10.1 3.3zM762.3 598.1l-9.9 3.6 -10.1 3.2 .4 -1.9 10.1 -3.3 9.9 -3.5zM742.3 604.9l-10.3 3 -10.6 2.7 .3 -1.9 10.6 -2.7 10.4 -3zM542 610.6l-10.6 -2.7 -10.3 -3 -.4 -1.9 10.4 3 10.6 2.7zM634.7 634.6l-3 1.1 0 -1.9 3 -1.1zM631.7 635.7l-3 -1.1 0 -1.9 3 1.1z"/><path fill="#c6c5c8" stroke="#c6c5c8" d="M618.8 290.7l-.8 -.8 0 -1.7 .7 .8zM645.4 289.9l-.8 .8 .1 -1.7 .7 -.8zM619.8 300.8l-.8 -.9 -.1 -1.7 .9 .9zM861.3 351.1l-1.3 .7 .5 -1.7 1.2 -.8zM507.9 337.5l-.8 1.1 -.2 -1.7 .8 -1.1zM389.6 389l2.7 -4.9 3 -4.8 -.5 -1.8 -3 4.8 -2.7 4.8zM428.4 382.1l2.5 -4 2.6 -4 -.4 -1.8 -2.6 3.9 -2.5 4.1zM793.2 371.7l4.4 6.5 .4 -1.9 -4.5 -6.4zM465.8 378.2l4.4 -6.5 -.3 -1.8 -4.5 6.4zM523.2 380.6l3 -4.2 3.3 -4.1 -.2 -1.9 -3.4 4.2 -2.9 4.2zM563.2 399l-1 1.3 -.1 -1.8 1 -1.3zM701.2 400.3l-1 -1.3 .1 -1.8 1 1.3zM401.4 438l-1 1.6 -.5 -1.9 1 -1.6zM676.8 415.4l-3.6 3.7 -4.3 3.4 .1 -1.8 4.3 -3.4 3.6 -3.7zM526.5 428l-1.5 -1.1 -.2 -1.9 1.5 1.2zM615.8 420.2l-6.4 7.1 0 -1.8 6.4 -7.1zM609.4 427.3l-6.6 7.3 -.1 -1.9 6.7 -7.2zM654 427.3l6.6 7.3 .1 -1.9 -6.7 -7.2zM566.3 440.3l-7.3 -6.1 -.1 -1.8 7.2 6.1zM704.4 434.2l-7.3 6.1 .2 -1.8 7.2 -6.1zM793.8 458.1l-1.7 1.1 .4 -1.9 1.7 -1.1zM596.1 442l-7 7.6 -.1 -1.8 7 -7.7zM667.3 442l7 7.6 .1 -1.8 -7 -7.7zM589.1 449.6l-7.1 7.9 -.1 -1.9 7.1 -7.8zM674.3 449.6l7.1 7.9 .1 -1.9 -7.1 -7.8zM582 457.5l-7.2 8 -.2 -1.9 7.3 -8zM696.1 473.7l7.7 8.4 .1 -1.9 -7.6 -8.4zM567.3 473.7l-7.7 8.4 -.1 -1.9 7.6 -8.4zM551.8 490.8l-8.1 8.9 -.2 -1.9 8.1 -8.9zM711.6 490.8l8.1 8.9 .2 -1.9 -8.1 -8.9zM520 504.6l-9.6 -5.7 -.3 -1.9 9.7 5.7zM753 498.9l-9.6 5.7 .2 -1.9 9.7 -5.7zM543.7 499.7l-8.3 9.1 -.2 -1.9 8.3 -9.1zM841.8 531.7l-2.4 .8 .6 -1.9 2.3 -.8zM673.7 504.1l-1.7 -1.6 .1 -1.9 1.7 1.6zM535.4 508.8l-8.5 9.4 -.3 -1.9 8.6 -9.4zM752.8 513.5l-11.2 5.7 .3 -1.9 11.2 -5.8zM513 528.9l-6.1 -3.1 -5.9 -3.2 -.4 -1.9 5.9 3.2 6.2 3.1zM526.9 518.2l-8.8 9.7 -.3 -1.9 8.8 -9.7zM736.5 518.2l8.8 9.7 .3 -1.9 -8.8 -9.7zM410.2 561.1l-2.5 -.7 -.6 -2 2.5 .8zM578.1 525.4l-2.1 -1.3 -.2 -1.9 2.1 1.3zM517.6 545.1l-7 -3 -6.7 -3.2 -.4 -2 6.8 3.2 7 3.1zM841.8 572l-2.7 .6 .6 -1.9 2.7 -.7zM490.3 558.5l-9.8 10.8 -.5 -1.9 9.9 -10.8zM524.8 562l-7.9 -2.9 -7.7 -3.2 -.3 -1.9 7.7 3.1 7.9 3zM583.9 550.7l-2.3 -1.3 -.1 -1.9 2.3 1.3zM552.6 553.6l-2.1 1.8 -.2 -2 2.1 -1.7zM782.9 569.3l10.2 11.2 .4 -1.9 -10.1 -11.2zM470.3 580.5l-10.4 11.5 -.5 -1.9 10.5 -11.5zM746.2 573.7l-8.7 2.9 -8.9 2.8 .3 -1.9 8.9 -2.8 8.7 -3zM671.4 576.4l-2.5 1.2 .1 -1.9 2.6 -1.2zM547.6 597.2l-9.9 -2.5 -9.7 -2.8 -.3 -1.9 9.8 2.8 9.9 2.4zM631.7 606.7l-2.9 -1 0 -1.9 2.9 1zM721.4 610.6l-10.7 2.4 -11 2.1 .2 -1.9 11 -2.1 10.8 -2.4zM563.7 615.1l-11 -2.1 -10.7 -2.4 -.3 -1.9 10.8 2.4 11 2.1zM586 618.3l-11.2 -1.5 -11.1 -1.7 -.2 -1.9 11.1 1.7 11.3 1.5zM699.7 615.1l-11.1 1.7 -11.2 1.5 .1 -1.9 11.3 -1.5 11.1 -1.7zM610.3 634.1l-3.1 .9 -.1 -1.9 3.1 -.9z"/><path fill="#c9c8cb" stroke="#c9c8cb" d="M646.8 275.6l-.7 .8 0 -1.6 .8 -.8zM504.8 297.1l-4.8 -4 -.2 -1.7 4.8 4zM758.6 297.1l4.8 -4 .2 -1.7 -4.8 4zM753.7 301.1l4.9 -4 .2 -1.7 -4.9 4zM806.6 354.6l-1.2 .8 .4 -1.8 1.1 -.8zM618.8 346.2l-1 -1 0 -1.8 1 1.1zM743.8 369.7l3.8 4.4 3.3 4.7 .3 -1.8 -3.4 -4.7 -3.7 -4.4zM512.5 378.8l3.3 -4.7 3.8 -4.4 -.3 -1.8 -3.7 4.4 -3.4 4.7zM684.4 381.3l-1.2 1 .1 -1.8 1.2 -1.1zM725 400.3l-1 -1.3 .2 -1.8 1 1.3zM798.9 414.3l-1 -1.5 .4 -1.8 1 1.4zM427.3 424.7l-.9 1.5 -.5 -1.9 1 -1.5zM653.2 419.7l-1.4 1.3 0 -1.9 1.4 -1.2zM496.1 450.1l-1.8 -1 -.3 -1.9 1.8 1zM557.5 460.1l-5.7 -3.5 -5.3 -3.8 -.2 -1.9 5.3 3.8 5.7 3.5zM548.5 467.5l-6.3 -4 -5.9 -4.3 -.2 -1.8 5.9 4.2 6.3 4zM727.1 459.2l-5.9 4.3 -6.3 4 .2 -1.9 6.3 -4 5.9 -4.2zM603.6 473.4l-1.6 1.5 -.1 -1.9 1.6 -1.5zM530.4 509.8l-10.4 -5.2 -.2 -1.9 10.4 5.2zM743.4 504.6l-10.4 5.2 .2 -1.9 10.4 -5.2zM582.6 514.8l-2.1 -1.3 -.1 -1.9 2.1 1.2zM682.9 513.5l-2.1 1.3 .1 -2 2.1 -1.2zM750.4 528.9l-6.3 2.9 -6.5 2.8 .3 -1.9 6.5 -2.8 6.3 -2.9zM745.8 545.1l-7.2 2.9 -7.4 2.7 .2 -1.9 7.5 -2.7 7.2 -2.9zM826.3 583l-2.8 .4 .5 -1.9 2.8 -.5zM457.1 593.5l-2.9 -.3 -.5 -1.9 2.9 .3zM553.1 584.2l-9.2 -2.3 -9.1 -2.5 -.3 -1.9 9.1 2.5 9.3 2.3zM728.6 579.4l-9.1 2.5 -9.2 2.3 .2 -1.9 9.3 -2.3 9.1 -2.5zM475.8 602.8l-3 -.2 -.5 -1.9 3 .2zM790.6 602.6l-3 .2 .5 -1.9 3 -.2zM715.8 597.2l-10.1 2.2 -10.3 1.9 .2 -1.9 10.3 -2 10.1 -2.2zM588.9 604.3l-10.5 -1.4 -10.4 -1.6 -.2 -1.9 10.4 1.6 10.6 1.4zM695.4 601.3l-10.4 1.6 -10.5 1.4 .1 -1.9 10.6 -1.4 10.4 -1.6zM677.4 618.3l-11.3 1.2 -11.4 .8 0 -1.9 11.5 -.8 11.3 -1.2z"/><path fill="#cccbce" stroke="#cccbce" d="M519.8 309.4l-5.1 -4.2 -.2 -1.7 5.1 4.2zM743.6 309.4l5.1 -4.2 .2 -1.7 -5.1 4.2zM524.9 313.7l-5.1 -4.3 -.2 -1.7 5.1 4.3zM530.2 318.1l-5.3 -4.4 -.2 -1.7 5.3 4.3zM652.6 311l-.9 .8 0 -1.7 .9 -.9zM535.6 322.5l-5.4 -4.4 -.2 -1.8 5.4 4.5zM727.8 322.5l5.4 -4.4 .2 -1.8 -5.4 4.5zM493.1 330.3l-.8 1.1 -.3 -1.7 .8 -1.1zM649.2 327.5l-.9 .9 0 -1.7 .9 -1zM616.3 334.2l-.9 -.9 -.1 -1.8 1 1zM787.8 359.5l-1.3 .9 .3 -1.8 1.3 -.9zM880.4 380.4l1.9 3 1.8 3.1 .6 -1.9 -1.9 -3 -1.9 -3zM379.3 386.5l1.8 -3.1 1.9 -3 -.5 -1.8 -1.9 3 -1.9 3zM455 376.8l2.3 -3.5 2.5 -3.4 -.3 -1.8 -2.5 3.4 -2.4 3.5zM501.8 377l2.4 -3.4 2.7 -3.3 2.8 -3.2 -.2 -1.8 -2.9 3.2 -2.6 3.3 -2.5 3.4zM621.7 430.1l-1.5 1.3 0 -1.9 1.5 -1.2zM710.7 439.8l-1.4 -1.4 .2 -1.9 1.4 1.5zM566.3 452.9l-5.1 -3.1 -4.7 -3.3 -.2 -1.9 4.7 3.3 5.1 3.1zM706.9 446.5l-4.7 3.3 -5.1 3.1 .2 -1.9 5.1 -3.1 4.7 -3.3zM733.5 482.8l-5.4 3.1 -5.7 3 -6 2.8 .3 -1.9 5.9 -2.8 5.7 -3 5.4 -3.1zM415.6 537.8l-1.7 2.1 -.6 -1.9 1.7 -2.1zM541.5 514.6l-11.1 -4.8 -.2 -1.9 11.1 4.7zM733 509.8l-11.1 4.8 .2 -2 11.1 -4.7zM818.4 533.5l-2.5 .7 .5 -1.9 2.5 -.8zM447.5 534.2l-2.5 -.7 -.5 -2 2.5 .8zM757.3 521.8l9.8 9.4 .4 -1.9 -9.9 -9.4zM506.1 521.8l-9.8 9.4 -.4 -1.9 9.9 -9.4zM486.2 540.8l-10.4 9.9 -.5 -1.9 10.5 -9.9zM787.6 550.7l10.7 10.1 .5 -1.9 -10.7 -10.1zM475.8 550.7l-10.7 10.1 -.5 -1.9 10.7 -10.1zM798.3 560.8l11 10.5 .5 -1.9 -11 -10.5zM465.1 560.8l-11 10.5 -.5 -1.9 11 -10.5zM547.6 555.5l-7.8 -2.3 -7.6 -2.5 -.2 -1.9 7.6 2.5 7.8 2.3zM809.3 571.3l11.3 10.8 .6 -2 -11.4 -10.7zM735.7 562l-2.3 -1.7 .2 -1.9 2.3 1.7zM558.5 571.7l-8.7 -2.1 -8.5 -2.3 -.3 -2 8.6 2.4 8.7 2zM704.9 571.7l-8.8 1.8 -8.9 1.6 .1 -1.9 9 -1.6 8.8 -1.9zM576.2 575.1l-8.9 -1.6 -8.8 -1.8 -.2 -2 8.8 1.9 9 1.6zM478.5 601l-2.7 1.8 -.5 -1.9 2.7 -1.8zM787.6 602.8l-2.7 -1.8 .5 -1.9 2.7 1.8zM572.2 588l-9.6 -1.8 -9.5 -2 -.2 -1.9 9.5 2 9.6 1.8zM611.6 592.4l-9.9 -.7 -10 -1 -.1 -1.9 10 1 10 .7zM671.7 590.7l-10 1 -9.9 .7 0 -1.9 10 -.7 10 -1zM653.2 606.1l-10.7 .4 -10.8 .2 0 -1.9 10.8 -.2 10.7 -.4z"/><path fill="#cfced1" stroke="#cfced1" d="M716.8 331.6l5.6 -4.6 .2 -1.7 -5.6 4.6zM552.2 336.3l-5.6 -4.7 -.2 -1.7 5.7 4.6zM558 341.1l-5.8 -4.8 -.1 -1.8 5.7 4.8zM705.4 341.1l5.8 -4.8 .1 -1.8 -5.7 4.8zM563.9 345.9l-5.9 -4.8 -.2 -1.8 5.9 4.9zM813.9 368.2l2.7 3.6 2.6 3.6 .4 -1.8 -2.6 -3.6 -2.8 -3.6zM778.2 367.6l4.5 5.8 .3 -1.8 -4.5 -5.8zM758.9 367.1l-1.3 .9 .2 -1.8 1.3 -.9zM491.2 375.2l2.7 -3.6 2.9 -3.6 3.2 -3.5 -.3 -1.8 -3.1 3.5 -3 3.5 -2.7 3.7zM748.9 400.3l-1.1 -1.3 .2 -1.8 1.2 1.3zM609.8 393.2l-1.3 -1.1 0 -1.9 1.3 1.1zM745 440.3l-1.7 1 .2 -1.9 1.8 -1zM574.9 445.8l-8.6 -5.5 -.2 -1.8 8.6 5.4zM724.1 475l-7.6 4.2 -8 3.8 .2 -1.9 8.1 -3.8 7.5 -4.2zM595.4 484.6l-2 -1.1 -.1 -2 2 1.2zM553.2 518.8l-11.7 -4.2 -.2 -2 11.7 4.2zM721.9 514.6l-11.7 4.2 .2 -2 11.7 -4.2zM559.6 533.1l-13.2 -4 -.2 -1.9 13.3 4zM717 529.1l-13.2 4 .1 -1.9 13.3 -4zM824.2 561.4l12 10 .6 -1.9 -12.1 -10zM724 539.7l-7.1 2.3 -7.2 2.1 .2 -1.9 7.2 -2.1 7.1 -2.3zM778.5 559.6l-2.8 .3 .4 -1.9 2.8 -.3zM568.6 547.8l-7.5 -1.7 -7.4 -2 -.2 -1.9 7.4 1.9 7.5 1.8zM715.8 555.5l-7.9 2.1 -8.1 1.9 .2 -1.9 8.1 -1.9 7.9 -2.1zM768.9 578.7l-2.5 -1.6 .3 -2 2.6 1.7zM771.9 578.5l-3 .2 .4 -1.9 2.9 -.2zM459.9 592l-2.8 1.5 -.5 -1.9 2.8 -1.5zM668.9 577.6l-9.2 .9 -9.3 .7 0 -1.9 9.4 -.7 9.2 -.9zM631.7 579.7l-9.4 -.2 -9.3 -.3 0 -1.9 9.3 .3 9.4 .2zM735.4 591.9l-3.1 -.1 .3 -1.9 3.1 .1zM691.2 588l-3 -.5 .2 -1.9 3 .5zM550.7 596.8l-3.1 .4 -.2 -2 3.1 -.3zM651.8 592.4l-10.1 .4 -10 .1 0 -1.9 10.1 -.1 10 -.4z"/><path fill="#d2d1d4" stroke="#d2d1d4" d="M493.2 301.6l-5.3 -3.9 -.3 -1.7 5.3 3.9zM770.2 301.6l5.3 -3.9 .3 -1.7 -5.3 3.9zM764.8 305.5l5.4 -3.9 .3 -1.7 -5.5 3.9zM504.1 309.5l-5.5 -4 -.2 -1.7 5.5 4zM759.3 309.5l5.5 -4 .2 -1.7 -5.5 4zM859.7 361.7l-1.3 .7 .4 -1.8 1.4 -.7zM720.8 342.7l-.9 -1.1 .1 -1.7 1 1zM383 380.4l1.9 -3 2.1 -2.9 -.5 -1.8 -2.1 2.9 -1.9 3zM876.4 374.5l2.1 2.9 1.9 3 .5 -1.8 -1.9 -3 -2.1 -2.9zM861.7 370.1l3.3 4.6 3.1 4.6 .5 -1.8 -3.1 -4.6 -3.4 -4.6zM461.4 364.3l-1.3 -.8 -.4 -1.8 1.4 .8zM470.2 371.7l5 -6.3 -.3 -1.8 -5 6.3zM549.7 377.5l2.8 -3.2 3.2 -3 -.2 -1.8 -3.1 3 -2.9 3.2zM707.7 371.3l3.2 3 2.8 3.2 .2 -1.8 -2.9 -3.2 -3.1 -3zM836.4 417.4l-1.2 -1.5 .5 -1.8 1.1 1.4zM531.9 437l-1.7 -1 -.3 -1.8 1.8 .9zM733.2 436l-1.7 1 .2 -1.9 1.8 -.9zM767.1 467.3l-1.6 -1.6 .4 -1.9 1.6 1.6zM701.2 459.7l9 7.3 .2 -1.9 -9 -7.3zM553.2 467l-9.1 7.6 -.2 -1.9 9.1 -7.6zM710.2 467l9.1 7.6 .2 -1.9 -9.1 -7.6zM562.6 474.6l-7.3 -3.4 -6.8 -3.7 -.2 -1.9 6.9 3.7 7.3 3.4zM544.1 474.6l-9.4 7.7 -.2 -1.9 9.4 -7.7zM719.3 474.6l9.4 7.7 .2 -1.9 -9.4 -7.7zM534.7 482.3l-9.5 8 -.3 -1.9 9.6 -8zM525.2 490.3l-9.9 8.1 -.3 -1.9 9.9 -8.1zM738.2 490.3l9.9 8.1 .3 -1.9 -9.9 -8.1zM505.3 506.7l-10.3 8.6 -.4 -1.9 10.4 -8.6zM495 515.3l-10.6 8.7 -.4 -1.9 10.6 -8.7zM484.4 524l-10.9 9 -.4 -1.9 10.9 -9zM779 524l10.9 9 .4 -1.9 -10.9 -9zM473.5 533l-11.1 9.2 -.5 -1.9 11.2 -9.2zM789.9 533l11.1 9.2 .5 -1.9 -11.2 -9.2zM462.4 542.2l-11.4 9.5 -.5 -1.9 11.4 -9.5zM812.4 551.7l11.8 9.7 .5 -1.9 -11.8 -9.7zM597.1 565l-8.5 -1 -8.4 -1.3 -.2 -1.9 8.5 1.3 8.5 1zM683.2 562.7l-8.4 1.3 -8.5 1 .1 -1.9 8.5 -1 8.5 -1.3zM614.3 566.4l-8.6 -.6 -8.6 -.8 -.1 -1.9 8.6 .8 8.7 .6zM666.3 565l-8.6 .8 -8.6 .6 0 -1.9 8.7 -.6 8.6 -.8zM579.2 574.7l-3 .4 -.1 -1.9 2.9 -.5z"/><path fill="#d5d4d7" stroke="#d5d4d7" d="M471.5 319.9l-.8 1.1 -.3 -1.8 .9 -1zM515.4 317.7l-5.7 -4.2 -.2 -1.7 5.7 4.1zM521.2 321.9l-5.8 -4.2 -.2 -1.8 5.8 4.2zM742.2 321.9l5.8 -4.2 .2 -1.8 -5.8 4.2zM387.3 370.1l-1.4 -.7 -.5 -1.8 1.4 .7zM839.6 365.1l-1.4 .8 .4 -1.8 1.4 -.8zM798.1 363.3l2.8 3.3 2.7 3.3 .3 -1.8 -2.6 -3.3 -2.8 -3.3zM535.7 375.8l-1.4 -.9 -.2 -1.8 1.4 .9zM848.9 418.4l-1.1 -1.4 .5 -1.9 1.1 1.5zM609 507.7l-2.3 -1 0 -1.9 2.3 1zM573.4 536.4l-13.8 -3.3 -.1 -1.9 13.7 3.3zM703.8 533.1l-13.8 3.3 .2 -1.9 13.7 -3.3zM768.9 549.1l-2.8 .3 .4 -1.9 2.8 -.3zM497.3 549.4l-2.8 -.3 -.4 -1.9 2.8 .3zM775.7 559.9l-2.6 -1.4 .4 -1.9 2.6 1.4zM599.6 552.8l-7.8 -1 -7.9 -1.1 -.1 -1.9 7.8 1.1 8 1zM679.5 550.7l-7.9 1.1 -7.8 1 0 -1.9 8 -1 7.8 -1.1zM738.6 562l-2.9 0 .2 -1.9 3 0zM649.1 566.4l-8.7 .3 -8.7 .2 0 -2 8.7 -.1 8.7 -.3z"/><path fill="#d8d7da" stroke="#d8d7da" d="M664.9 301.5l-1 .8 .1 -1.7 1 -.8zM387 374.5l2.1 -2.9 2.1 -2.8 -.5 -1.8 -2.1 2.8 -2.1 2.9zM872.2 368.8l2.1 2.8 2.1 2.9 .5 -1.8 -2.1 -2.9 -2.1 -2.8zM773.1 362l5.1 5.6 .3 -1.8 -5.1 -5.6zM717 367.9l3.6 3.4 3.3 3.6 .2 -1.8 -3.3 -3.6 -3.6 -3.4zM618.5 372.8l-1.3 -1 0 -1.8 1.3 1zM646.2 371.8l-1.3 1 0 -1.8 1.3 -1zM442 406.9l-1.2 1.3 -.4 -1.8 1.2 -1.4zM661.8 412.2l-1.4 -1.2 0 -1.8 1.5 1.1zM611.6 421l-5.6 -2.7 -4.8 -3.2 -3.7 -3.6 -.1 -1.9 3.8 3.7 4.7 3.2 5.7 2.6zM570.2 466.3l-6.6 -3 -6.1 -3.2 -.2 -1.9 6.2 3.2 6.5 3zM705.9 460.1l-6.1 3.2 -6.6 3 .2 -1.9 6.5 -3 6.2 -3.2zM566.1 499l-6.6 -2.2 -6.4 -2.5 -6.1 -2.6 -.3 -1.9 6.2 2.6 6.4 2.5 6.7 2.2zM716.4 491.7l-6.1 2.6 -6.4 2.5 -6.6 2.2 .1 -1.9 6.7 -2.2 6.4 -2.5 6.2 -2.6zM493.7 532.4l-2.7 -.4 -.3 -1.9 2.6 .4zM766.1 549.4l-2.5 -1.4 .3 -1.9 2.6 1.4zM499.8 548l-2.5 1.4 -.4 -1.9 2.6 -1.4zM823.5 583.4l-2.9 -1.3 .6 -2 2.8 1.4zM615.6 554.1l-8 -.6 -8 -.7 0 -1.9 7.9 .7 8.1 .5z"/><path fill="#dbdadd" stroke="#dbdadd" d="M672.4 277.4l-1 .8 .1 -1.7 .9 -.7zM481.8 306.6l-5.8 -3.8 -.3 -1.7 5.9 3.7zM775.6 310.3l6 -3.7 .2 -1.8 -5.9 3.8zM487.8 310.3l-6 -3.7 -.2 -1.8 5.9 3.8zM499.9 318l-6.1 -3.9 -.3 -1.7 6.2 3.9zM412.3 371.4l3.2 -4.2 3.5 -4.2 -.5 -1.8 -3.4 4.2 -3.3 4.2zM844.4 363l3.5 4.2 3.2 4.2 .5 -1.8 -3.3 -4.2 -3.4 -4.2zM449.5 368.2l2.9 -3.6 3 -3.4 -.3 -1.8 -3.1 3.4 -2.8 3.6zM845.9 373.4l-1.5 .7 .4 -1.8 1.5 -.7zM610.5 353.7l-1.2 -1 -.1 -1.8 1.2 1zM580.9 355.2l-1.2 1 -.1 -1.8 1.2 -1zM529.5 372.3l3.7 -4 4.1 -3.7 -.2 -1.8 -4.1 3.7 -3.7 3.9zM726.1 364.6l4.1 3.7 3.7 4 .2 -1.9 -3.7 -3.9 -4.1 -3.7zM723.3 392.7l-1.3 -1.2 .2 -1.8 1.3 1.2zM581.3 419l-1.5 1.2 -.1 -1.9 1.5 -1.2zM697.1 452.9l-5.4 2.8 -5.8 2.6 .1 -1.9 5.8 -2.6 5.5 -2.8zM436.4 495.6l-1.9 1.7 -.5 -1.9 1.9 -1.7zM759.5 538.9l-2.7 .2 .3 -1.9 2.8 -.3zM756.8 539.1l-2.5 -1.3 .3 -1.9 2.5 1.3zM550.5 555.4l-2.9 .1 -.2 -1.9 2.9 -.2z"/><path fill="#dedde0" stroke="#dedde0" d="M757.3 322l6.2 -4 .2 -1.7 -6.2 3.9zM518.9 330.1l-6.5 -4.1 -.2 -1.8 6.5 4.1zM598.3 324.6l-1.2 -.8 0 -1.8 1.1 .9zM738 334.2l6.5 -4.1 .2 -1.8 -6.5 4.1zM525.4 334.2l-6.5 -4.1 -.2 -1.8 6.5 4.1zM600.6 330.2l-1.2 -.9 0 -1.7 1.1 .8zM661.6 335l-1.2 .9 .1 -1.8 1.1 -.9zM391.2 368.8l2.3 -2.8 2.2 -2.8 -.4 -1.8 -2.3 2.8 -2.3 2.8zM867.7 363.2l2.2 2.8 2.3 2.8 .5 -1.8 -2.3 -2.8 -2.3 -2.8zM401.7 370.1l3.5 -4.5 3.7 -4.3 -.5 -1.8 -3.6 4.3 -3.5 4.5zM817.8 359.1l3.2 3.6 3.1 3.7 .4 -1.8 -3.1 -3.7 -3.2 -3.6zM689.8 351.2l-1.2 -1.1 .2 -1.7 1.1 1zM574.8 350.1l-1.2 1.1 -.1 -1.8 1.1 -1zM475.2 365.4l5.5 -5.9 -.3 -1.8 -5.5 5.9zM519.6 369.7l4.1 -4.3 4.5 -4.1 -.2 -1.8 -4.5 4.1 -4.2 4.3zM617.2 380.6l-1.4 1 0 -1.8 1.4 -1.1zM468 399l-1.2 1.3 -.4 -1.8 1.3 -1.3zM618 414l-5.6 -2.8 -4.2 -3.6 -.1 -1.9 4.2 3.7 5.6 2.8zM655.2 407.6l-4.2 3.6 -5.6 2.8 .1 -1.8 5.6 -2.8 4.2 -3.7zM570.2 423l-1.5 1.2 -.2 -1.8 1.6 -1.3zM694.7 424.2l-1.5 -1.2 .1 -1.9 1.6 1.3zM687.5 434.3l-4.8 3.1 -5.3 2.9 -5.7 2.5 .1 -1.9 5.8 -2.5 5.2 -2.9 4.9 -3.1zM484.7 508.2l-11.2 8.2 -.4 -2 11.3 -8.1zM778.7 508.2l11.2 8.2 .4 -2 -11.3 -8.1zM789.9 516.4l11.5 8.3 .4 -1.9 -11.5 -8.4zM801.4 524.7l11.7 8.5 .5 -1.9 -11.8 -8.5zM438.2 541.9l-12.4 9 -.5 -1.9 12.4 -9zM825.2 541.9l12.4 9 .5 -1.9 -12.4 -9zM425.8 550.9l-12.7 9.2 -.6 -2 12.8 -9.1zM631.7 519.7l-2.5 -.8 0 -1.9 2.5 .8zM591.1 527.8l-13 -2.4 -.2 -1.9 13.1 2.4zM661.3 541l-14.8 1.1 .1 -1.9 14.8 -1.2zM646.5 542.1l-14.8 .4 0 -1.9 14.9 -.4z"/><path fill="#e1e0e3" stroke="#e1e0e3" d="M591.6 308.7l-1.1 -.8 -.1 -1.7 1.1 .8zM510.7 321l-.9 1 -.3 -1.8 1 -1zM532 338.4l-6.6 -4.2 -.2 -1.8 6.6 4.2zM545.6 347l-6.8 -4.3 -.2 -1.8 6.9 4.4zM429.1 364.7l3.3 -3.9 3.5 -3.8 -.4 -1.8 -3.5 3.8 -3.3 3.9zM827.5 357l3.5 3.8 3.3 3.9 .4 -1.8 -3.3 -3.9 -3.5 -3.8zM568.7 345.2l-1.1 1 -.1 -1.8 1.1 -1zM710.8 351.5l7 -4.5 .1 -1.7 -7 4.4zM552.6 351.5l-7 -4.5 -.1 -1.7 7 4.4zM465.3 363.3l2.9 -3.2 3 -3.1 -.3 -1.8 -3 3.1 -3 3.2zM792.2 357l3 3.1 2.9 3.2 .4 -1.8 -3 -3.2 -3 -3.1zM559.7 356l-7.1 -4.5 -.1 -1.8 7.1 4.5zM402.4 381.8l-1.6 -.7 -.5 -1.8 1.7 .6zM744.1 358l3.4 2.9 3.2 3.1 3 3.1 .2 -1.8 -3 -3.1 -3.2 -3.1 -3.4 -2.9zM498 378.2l-1.5 -.8 -.3 -1.8 1.5 .8zM653.1 375.6l-1.4 -1.1 .1 -1.8 1.4 1.1zM417.6 407.9l-1.3 1.4 -.4 -1.9 1.2 -1.4zM589.1 391.8l-1.4 1.1 -.1 -1.8 1.4 -1.1zM729 436.8l-1.6 -1.3 .2 -1.9 1.7 1.3zM598.5 435.4l-7 -3.3 -6.2 -3.8 -.2 -1.8 6.3 3.8 7 3.2zM584.7 450.5l-9.8 -4.7 -.2 -1.9 9.9 4.7zM587 504.4l-7.1 -1.6 -7 -1.8 -6.8 -2 -.1 -1.9 6.8 2 6.9 1.8 7.2 1.6zM697.3 499l-6.8 2 -7 1.8 -7.1 1.6 .1 -1.9 7.2 -1.6 6.9 -1.8 6.8 -2zM634.2 508.1l-2.5 .7 0 -1.9 2.5 -.8zM631.7 508.8l-2.5 -.7 0 -2 2.5 .8zM604.5 529.5l-13.4 -1.7 -.1 -1.9 13.4 1.7zM839.1 572.6l-2.9 -1.2 .6 -1.9 2.9 1.2z"/><path fill="#e4e3e6" stroke="#e4e3e6" d="M585.3 293.7l-1.1 -.7 -.1 -1.7 1.1 .7zM677.1 297.8l-1 .8 .1 -1.7 1 -.8zM792.6 312l6.4 -3.6 .3 -1.7 -6.4 3.5zM470.8 312l-6.4 -3.6 -.3 -1.7 6.4 3.5zM483.8 319.2l-6.6 -3.6 -.2 -1.8 6.5 3.7zM419 363l3.5 -4.1 3.8 -4 -.4 -1.7 -3.8 3.9 -3.6 4.1zM837.1 354.9l3.8 4 3.5 4.1 .5 -1.8 -3.6 -4.1 -3.8 -3.9zM490.3 362l5.5 -5.3 -.3 -1.8 -5.5 5.3zM374.2 390.2l-1.7 -.6 -.5 -1.9 1.7 .7zM574.3 365.2l-7.3 -4.6 -.2 -1.8 7.4 4.6zM689.1 365.2l7.3 -4.6 .2 -1.8 -7.4 4.6zM840.4 382.9l-1.6 .7 .4 -1.8 1.7 -.7zM681.6 370l7.5 -4.8 .1 -1.8 -7.5 4.8zM581.8 370l-7.5 -4.8 -.1 -1.8 7.5 4.8zM692.2 369.7l6.1 5 .2 -1.8 -6.2 -5zM674 374.8l7.6 -4.8 .1 -1.8 -7.6 4.8zM589.4 374.8l-7.6 -4.8 -.1 -1.8 7.6 4.8zM508.7 380.1l-1.6 -.9 -.2 -1.8 1.5 .8zM597.1 379.7l-7.7 -4.9 -.1 -1.8 7.8 4.9zM662.2 379.7l3.9 2.6 3.3 2.9 .1 -1.8 -3.3 -2.9 -3.9 -2.6zM518.5 389.6l-1.3 1.2 -.3 -1.8 1.4 -1.2zM687.7 419.4l-1.7 1 .1 -1.9 1.8 -.9zM577.4 420.4l-1.7 -1 -.2 -1.8 1.8 .9zM740.8 441.1l-1.7 -1.3 .2 -1.9 1.8 1.3zM455.5 475.2l-1.9 1.5 -.4 -1.9 1.9 -1.5zM722 500.9l-2.3 -1.2 .2 -1.9 2.3 1.2zM606.8 518.4l-8.2 -.9 -8 -1.3 -8 -1.4 -.1 -2 7.9 1.5 8.1 1.3 8.2 .9zM680.8 514.8l-8 1.4 -8 1.3 -8.2 .9 .1 -1.9 8.2 -.9 8.1 -1.3 7.9 -1.5zM496.3 531.2l-2.6 1.2 -.4 -1.9 2.6 -1.2zM618 530.6l-13.5 -1.1 -.1 -1.9 13.6 1zM631.7 530.9l-13.7 -.3 0 -2 13.7 .4z"/><path fill="#e7e6e9" stroke="#e7e6e9" d="M492.3 309.4l-1 .9 -.2 -1.7 1 -.9zM497.2 326.6l-6.8 -3.7 -.2 -1.7 6.7 3.7zM759.4 330.4l6.8 -3.8 .3 -1.7 -6.9 3.8zM395.7 363.2l2.4 -2.7 2.4 -2.7 -.4 -1.8 -2.5 2.7 -2.3 2.7zM862.9 357.8l2.4 2.7 2.4 2.7 .4 -1.8 -2.3 -2.7 -2.5 -2.7zM500 364.5l3.3 -3.3 3.5 -3.3 3.6 -3.1 -.2 -1.8 -3.7 3.1 -3.5 3.3 -3.3 3.3zM753 354.8l3.6 3.1 3.5 3.3 3.3 3.3 .3 -1.8 -3.3 -3.3 -3.5 -3.3 -3.7 -3.1zM663.8 363.9l-1.3 -1 0 -1.8 1.4 1zM435.8 384.5l-1.7 -.6 -.4 -1.9 1.7 .7zM584.2 381.7l4.3 -3.6 4.9 -3.3 -.1 -1.8 -4.9 3.2 -4.3 3.7zM670 374.8l4.9 3.3 4.3 3.6 .1 -1.8 -4.3 -3.7 -4.9 -3.2zM598.8 422.5l-9.1 5.8 -.1 -1.8 9.2 -5.8zM668.9 422.5l-5 3 -5.6 2.6 0 -1.9 5.7 -2.5 5 -3zM589.7 428.3l-9.4 6 -.1 -1.9 9.4 -5.9zM673.7 428.3l9.4 6 .1 -1.9 -9.4 -5.9zM580.3 434.3l-9.5 6 -.2 -1.8 9.6 -6.1zM500.4 448.6l-1.8 1.3 -.3 -1.9 1.8 -1.3zM692.6 440.3l9.8 6.2 .1 -1.9 -9.7 -6.1zM561 446.5l-9.9 6.3 -.2 -1.9 10 -6.3zM702.4 446.5l9.9 6.3 .2 -1.9 -10 -6.3zM737.5 465.8l-2.3 .7 .3 -1.9 2.2 -.7zM530.6 465.8l-10.6 6.7 -.2 -1.9 10.6 -6.7zM520 472.5l-10.7 6.9 -.3 -1.9 10.8 -6.9zM693.2 466.3l-6.8 2.7 -7.2 2.4 .1 -1.9 7.2 -2.4 6.9 -2.7zM765.2 486.4l11.2 7.1 .4 -1.9 -11.3 -7.1zM559.6 482.1l-2.2 1.2 -.1 -1.9 2.2 -1.2zM487 493.5l-11.5 7.3 -.4 -1.9 11.5 -7.3zM776.4 493.5l11.5 7.3 .4 -1.9 -11.5 -7.3zM691.1 489.5l-9.3 2.7 -9.7 2.2 .1 -2 9.7 -2.1 9.3 -2.7zM451.7 515.9l-12.3 7.8 -.5 -1.9 12.3 -7.8zM811.7 515.9l12.3 7.8 .5 -1.9 -12.3 -7.8zM824 523.7l12.6 8 .6 -1.9 -12.7 -8zM413.9 539.9l-13.2 8.3 -.6 -1.9 13.2 -8.3z"/><path fill="#eae9ec" stroke="#eae9ec" d="M576.8 300.3l-1.1 -.7 -.1 -1.7 1.1 .7zM685.1 304.5l-1.2 .7 .1 -1.7 1.2 -.7zM467 321.2l-6.9 -3.4 -.3 -1.7 6.9 3.4zM796.4 321.2l6.9 -3.4 .3 -1.7 -6.9 3.4zM789.3 324.7l7.1 -3.5 .3 -1.7 -7.1 3.4zM846.7 352.9l4 4.1 3.8 4.3 .5 -1.8 -3.9 -4.2 -4 -4.2zM408.9 361.3l3.8 -4.3 4 -4.1 -.4 -1.8 -4 4.2 -3.9 4.2zM810.9 352.1l3.5 3.5 3.4 3.5 .4 -1.8 -3.4 -3.5 -3.6 -3.5zM445.6 359.1l3.4 -3.5 3.5 -3.5 -.3 -1.8 -3.6 3.5 -3.4 3.5zM776.7 353.8l6 5.7 .3 -1.8 -6 -5.7zM480.7 359.5l6 -5.7 -.3 -1.8 -6 5.7zM896.3 400.3l-1.9 .6 .6 -1.9 1.8 -.5zM574.6 378.2l3.4 -3 3.7 -2.7 4.1 -2.5 -.1 -1.8 -4.1 2.5 -3.7 2.7 -3.4 3zM541.1 385.6l-1.6 -.9 -.2 -1.8 1.7 .8zM488.1 453l-1.8 1.4 -.3 -1.9 1.8 -1.4zM589.9 462.7l-6.3 -2.1 -6.1 -2.3 -.1 -1.9 6.1 2.3 6.3 2.1zM656.6 518.4l-8.3 .7 -8.3 .5 -8.3 .1 0 -1.9 8.4 -.2 8.3 -.4 8.3 -.7zM413.1 560.1l-2.9 1 -.6 -1.9 2.9 -1.1z"/><path fill="#edecef" stroke="#edecef" d="M782.1 328.1l7.2 -3.4 .3 -1.8 -7.2 3.5zM724.3 322.8l-1.2 -1 .2 -1.7 1.2 .9zM540.3 321.8l-1.2 1 -.2 -1.8 1.2 -.9zM488.5 331.7l-7.2 -3.6 -.3 -1.7 7.3 3.5zM767.5 335.3l7.4 -3.6 .2 -1.8 -7.3 3.6zM760 338.9l7.5 -3.6 .3 -1.8 -7.5 3.6zM857.9 352.6l2.5 2.6 2.5 2.6 .4 -1.8 -2.4 -2.6 -2.6 -2.6zM400.5 357.8l2.5 -2.6 2.5 -2.6 -.4 -1.8 -2.6 2.6 -2.4 2.6zM471.2 357l3.2 -3 3.3 -3 -.3 -1.8 -3.3 3 -3.2 3zM708.9 361.6l4.2 3 3.9 3.3 .2 -1.8 -3.9 -3.3 -4.2 -3zM380.9 400.9l-1.8 -.6 -.6 -1.8 1.9 .5zM872.4 400.3l-1.9 .6 .6 -1.9 1.8 -.5zM833.3 392l-1.8 .6 .5 -1.9 1.7 -.6zM469.5 387.4l-1.7 -.7 -.4 -1.9 1.7 .7zM709.1 387.2l-1.5 -1 .1 -1.9 1.5 1.1zM389.3 503.2l-2 1.6 -.7 -1.9 2.1 -1.6zM724.6 500.6l-2.6 .3 .2 -1.9 2.6 -.3zM611.7 507.2l-2.7 .5 0 -1.9 2.6 -.5z"/><path fill="#f0eff2" stroke="#f0eff2" d="M557.3 288.4l-1.1 -.7 -.2 -1.6 1.2 .6zM707.2 287.7l-1.1 .7 .1 -1.7 1.2 -.6zM704.3 292.3l-1.2 .7 .1 -1.7 1.2 -.7zM497.7 300.8l-1.1 .9 -.2 -1.7 1.1 -.9zM695.1 306.5l-1.3 .7 .1 -1.7 1.3 -.7zM813.7 324.1l7.4 -3.1 .3 -1.7 -7.4 3.1zM735 314l-1.2 -.9 .2 -1.7 1.2 .8zM572.8 312.1l-1.2 -.7 -.2 -1.7 1.3 .7zM806.2 327.3l7.5 -3.2 .3 -1.7 -7.5 3.2zM576.1 317.2l-1.3 -.8 -.1 -1.7 1.3 .8zM464.8 330.5l-7.6 -3.2 -.3 -1.7 7.6 3.2zM852.7 347.5l2.6 2.5 2.6 2.6 .4 -1.8 -2.6 -2.6 -2.6 -2.5zM405.5 352.6l2.6 -2.6 2.6 -2.5 -.4 -1.8 -2.6 2.5 -2.6 2.6zM586.4 333l-1.4 -.8 0 -1.8 1.3 .8zM426.3 354.9l3.9 -3.8 4 -3.8 -.4 -1.8 -4 3.8 -3.9 3.9zM829.2 347.3l4 3.8 3.9 3.8 .4 -1.7 -3.9 -3.9 -4 -3.8zM803.4 345.5l3.8 3.3 3.7 3.3 .3 -1.8 -3.7 -3.3 -3.7 -3.3zM744.8 346.3l7.7 -3.7 .2 -1.8 -7.7 3.8zM794.6 348.2l3.5 3.2 3.5 3.2 .3 -1.8 -3.4 -3.2 -3.6 -3.1zM770.3 348.5l6.4 5.3 .3 -1.8 -6.4 -5.3zM486.7 353.8l6.4 -5.3 -.3 -1.8 -6.4 5.3zM737 350.1l7.8 -3.8 .2 -1.7 -7.8 3.8zM495.8 356.7l5.9 -5.1 -.2 -1.8 -6 5.1zM729 354l8 -3.9 .2 -1.7 -8 3.8zM717.1 357.6l4.7 3.4 4.3 3.6 .2 -1.8 -4.3 -3.6 -4.7 -3.4zM900.7 411.5l-2 .5 .6 -1.9 2 -.5zM364.7 412l-2 -.5 -.6 -1.9 2 .5zM784.4 387.6l-1.8 .7 .3 -1.8 1.8 -.7zM613.9 392.5l3.3 -2.7 4.3 -2 0 -1.8 -4.3 2 -3.4 2.7zM641.9 387.8l4.3 2 3.3 2.7 .1 -1.8 -3.4 -2.7 -4.3 -2zM815 468.3l-2 -1.5 .5 -1.8 1.9 1.4zM716.9 452.8l-2.2 .7 .2 -1.9 2.2 -.7zM611.2 497.3l-10.1 -1.2 -9.8 -1.7 -.1 -2 9.9 1.8 10.1 1.2zM672.1 494.4l-9.8 1.7 -10.1 1.2 0 -1.9 10.1 -1.2 9.9 -1.8zM400.7 548.2l-2.9 .9 -.6 -1.9 2.9 -.9zM450.3 533.2l-2.8 1 -.5 -1.9 2.8 -1zM815.9 534.2l-2.8 -1 .5 -1.9 2.8 1z"/><path fill="#f3f2f5" stroke="#f3f2f5" d="M542.1 286.7l-1.2 -.6 -.2 -1.7 1.3 .6zM472.5 333.8l-7.7 -3.3 -.3 -1.7 7.7 3.2zM410.7 347.5l2.7 -2.5 2.8 -2.4 -.5 -1.8 -2.7 2.5 -2.7 2.4zM847.2 342.6l2.8 2.4 2.7 2.5 .4 -1.8 -2.7 -2.4 -2.7 -2.5zM480.3 337.1l-7.8 -3.3 -.3 -1.8 7.8 3.3zM783.1 337.1l7.8 -3.3 .3 -1.8 -7.8 3.3zM488.1 340.4l-7.8 -3.3 -.3 -1.8 7.9 3.4zM812.1 342.8l4.1 3.4 3.9 3.5 .4 -1.8 -4 -3.5 -4 -3.4zM443.3 349.7l3.9 -3.5 4.1 -3.4 -.4 -1.8 -4 3.4 -4 3.5zM477.7 351l3.4 -2.9 3.5 -2.7 -.3 -1.8 -3.5 2.8 -3.4 2.8zM528.2 361.3l4.9 -3.9 5.1 -3.7 -.1 -1.8 -5.2 3.7 -4.9 3.9zM550.6 361.9l-8.2 -4 -.2 -1.8 8.2 4zM558.8 365.9l-8.2 -4 -.2 -1.8 8.3 4zM704.6 365.9l8.2 -4 .2 -1.8 -8.3 4zM868.2 400.3l-1.4 -1.3 .5 -1.8 1.4 1.3zM791.7 387l-1.5 -1.2 .4 -1.8 1.4 1.2zM544.9 384.3l-1.5 1.1 -.2 -1.8 1.5 -1.1zM647.6 381.6l4.6 2 4 2.4 3.4 2.8 0 -1.8 -3.3 -2.8 -4.1 -2.4 -4.6 -2zM599.4 475.1l-7.7 -1.7 -7.5 -2 -.1 -1.9 7.5 2 7.7 1.7zM455 499.8l-12.5 7 -.5 -1.9 12.5 -7zM808.4 499.8l12.5 7 .5 -1.9 -12.5 -7zM416.8 521.1l-13.3 7.4 -.6 -2 13.3 -7.3zM846.6 521.1l13.3 7.4 .6 -2 -13.3 -7.3zM652.2 497.3l-10.2 .8 -10.3 .2 0 -1.9 10.3 -.3 10.2 -.7zM839.4 532.5l-2.8 -.8 .6 -1.9 2.8 .8zM676.4 504.4l-2.7 -.3 .1 -1.9 2.7 .3z"/><path fill="#f6f5f8" stroke="#f6f5f8" d="M750.3 301.3l-1.1 -.8 .2 -1.7 1.1 .9zM704.9 308.9l-1.4 .6 .2 -1.7 1.3 -.7zM720.5 315l-1.2 -.8 .2 -1.8 1.2 .9zM447.8 333.8l-8 -2.9 -.4 -1.7 8 2.9zM807.5 336.8l8.1 -3 .4 -1.7 -8.1 2.9zM799.3 339.8l8.2 -3 .4 -1.8 -8.3 3zM464.1 339.8l-8.2 -3 -.4 -1.8 8.3 3zM468.8 348.2l3.6 -3 3.8 -2.9 -.3 -1.8 -3.8 3 -3.6 3zM787.2 342.3l3.8 2.9 3.6 3 .3 -1.7 -3.6 -3 -3.8 -3zM501.7 351.6l6.4 -4.8 -.3 -1.8 -6.3 4.8zM510.4 354.8l3.9 -3 4 -3 4.2 -2.7 -.2 -1.8 -4.2 2.8 -4 2.9 -3.9 3zM733.1 349.8l3.8 2.7 3.7 2.7 3.5 2.8 .2 -1.8 -3.5 -2.8 -3.7 -2.7 -3.8 -2.6zM685.2 365.2l7 4.5 .1 -1.8 -7 -4.5zM414 409.9l-2 -.5 -.5 -1.8 2 .5zM727.3 392.4l-1.8 .7 .2 -1.9 1.8 -.7zM530.8 426.9l-1.9 1.1 -.2 -1.8 1.8 -1.2zM603.3 465.9l-6.8 -1.4 -6.6 -1.8 -.1 -1.9 6.6 1.8 6.8 1.4zM673.5 462.7l-6.6 1.8 -6.8 1.4 .1 -1.9 6.8 -1.4 6.6 -1.8zM557.4 483.3l-2.5 -.3 -.2 -1.9 2.6 .3zM613.3 487.2l-9 -1.1 -8.9 -1.5 -.1 -1.9 8.9 1.5 9.1 1.1zM668 484.6l-8.9 1.5 -9 1.1 0 -1.9 9.1 -1.1 8.9 -1.5z"/><path fill="#f9f8fb" stroke="#f9f8fb" d="M714.5 311.6l-1.4 .6 .1 -1.7 1.5 -.6zM711.2 312.1l-1.3 -.8 .1 -1.8 1.3 .8zM702.4 321.6l-1.3 -.8 .2 -1.8 1.3 .9zM416.2 342.6l2.7 -2.4 2.9 -2.3 -.4 -1.8 -2.9 2.3 -2.8 2.4zM841.6 337.9l2.9 2.3 2.7 2.4 .5 -1.8 -2.8 -2.4 -2.9 -2.3zM803.7 336.3l4.3 3.2 4.1 3.3 .4 -1.8 -4.2 -3.3 -4.2 -3.2zM451.3 342.8l4.1 -3.3 4.3 -3.2 -.4 -1.8 -4.2 3.2 -4.2 3.3zM791 342.8l8.3 -3 .3 -1.8 -8.3 3.1zM774.1 349l8.5 -3.1 .3 -1.8 -8.5 3.1zM493.1 348.5l6.8 -5.1 -.2 -1.8 -6.9 5.1zM562.8 365.6l3.9 -2.6 4.2 -2.4 -.2 -1.8 -4.1 2.4 -3.9 2.6zM512.5 378.8l-1.6 1.1 -.2 -1.8 1.5 -1.1zM613.6 381.8l-1.7 -.8 0 -1.8 1.7 .8zM438.6 408.9l-2.1 -.5 -.4 -1.8 2 .5zM518.6 430.1l-1.9 1.1 -.2 -1.8 1.9 -1.2zM446.2 458.4l-2 1.3 -.5 -1.9 2.1 -1.3zM710.7 439.8l10.9 5.3 .2 -1.9 -10.9 -5.2zM721.6 445.1l11.1 5.4 .2 -1.9 -11.1 -5.4zM530.7 450.5l-11.3 5.5 -.2 -1.9 11.3 -5.5zM732.7 450.5l11.3 5.5 .2 -1.9 -11.3 -5.5zM519.4 456l-11.5 5.6 -.2 -1.9 11.5 -5.6zM507.9 461.6l-11.6 5.7 -.4 -1.9 11.8 -5.7zM885.5 524l-2.9 -.5 .6 -1.9 2.9 .5zM631.7 488.1l-9.2 -.2 -9.2 -.7 0 -1.9 9.2 .7 9.2 .2zM403.5 528.5l-2.9 .7 -.6 -2 2.9 -.7z"/><path fill="#fcfbfe" stroke="#fcfbfe" d="M541.1 297.7l-1.3 .7 -.2 -1.7 1.3 -.7zM723.6 298.4l-1.3 -.7 .2 -1.7 1.3 .7zM701.6 309.5l-1.4 -.8 .2 -1.7 1.3 .7zM427.6 333.3l3 -2.2 3 -2.2 -.4 -1.7 -3 2.1 -3 2.2zM829.8 328.9l3 2.2 3 2.2 .4 -1.8 -3 -2.2 -3 -2.1zM421.8 337.9l2.9 -2.3 2.9 -2.3 -.4 -1.8 -2.9 2.3 -2.9 2.3zM835.8 333.3l2.9 2.3 2.9 2.3 .4 -1.8 -2.9 -2.3 -2.9 -2.3zM819.9 330.4l4.8 3.4 4.6 3.6 .4 -1.7 -4.7 -3.6 -4.8 -3.5zM705.9 321.1l-1.5 .6 .1 -1.7 1.5 -.6zM438.8 340.8l-8.5 -2.7 -.4 -1.7 8.5 2.6zM824.6 340.8l8.5 -2.7 .4 -1.7 -8.5 2.6zM467.9 339.3l4.1 -3 4.2 -2.9 -.3 -1.8 -4.2 2.9 -4.1 3zM816 343.5l8.6 -2.7 .4 -1.8 -8.7 2.7zM447.4 343.5l-8.6 -2.7 -.4 -1.8 8.7 2.7zM807.3 346.2l8.7 -2.7 .3 -1.8 -8.7 2.7zM771.5 340l3.7 2.6 3.6 2.8 .3 -1.8 -3.6 -2.7 -3.8 -2.7zM484.6 345.4l3.6 -2.8 3.7 -2.6 -.2 -1.8 -3.8 2.7 -3.6 2.7zM464.9 349l-8.8 -2.8 -.3 -1.8 8.8 2.8zM508.1 346.8l6.7 -4.5 -.3 -1.8 -6.7 4.5zM765.5 352.2l8.6 -3.2 .3 -1.8 -8.6 3.2zM756.8 355.4l8.7 -3.2 .3 -1.8 -8.7 3.2zM601 349l-1.6 .8 0 -1.8 1.5 -.8zM664 349.8l-1.6 -.8 .1 -1.8 1.5 .8zM515.4 358.6l-8.8 -3.2 -.3 -1.8 8.9 3.2zM739.1 361.9l8.9 -3.3 .2 -1.8 -8.9 3.3zM524.3 361.9l-8.9 -3.3 -.2 -1.8 8.9 3.3zM699.8 356l4.7 2.7 4.4 2.9 .2 -1.8 -4.5 -2.9 -4.7 -2.7zM401 389.4l-1.5 1.3 -.5 -1.8 1.6 -1.3zM667.6 363.3l-1.7 .7 .1 -1.8 1.6 -.7zM439.6 383l-1.6 1.2 -.4 -1.8 1.6 -1.2zM501.8 377l-1.6 1.1 -.2 -1.9 1.5 -1zM613.9 392.5l-1.9 .8 0 -1.8 1.8 -.8zM840.8 417.8l-2.1 .4 .4 -1.9 2.1 -.4zM907.5 459.7l-2.5 .1 .7 -1.9 2.4 -.1zM372 456.9l-2.4 -.2 -.6 -1.9 2.4 .2zM664.9 435.4l-7.7 2.6 -8.2 1.9 .1 -1.9 8.2 -1.9 7.7 -2.6zM845.6 468l-2.1 -1.4 .5 -1.9 2.1 1.4zM631.7 450.2l-2.3 -.6 0 -1.9 2.3 .6zM570.9 452.4l-2.3 .9 -.1 -1.9 2.2 -.9zM568.6 453.3l-2.3 -.4 -.2 -1.9 2.4 .4zM767.1 467.3l11.9 5.8 .4 -1.9 -11.9 -5.8zM496.3 467.3l-11.9 5.8 -.4 -1.9 11.9 -5.8zM484.4 473.1l-12.2 5.9 -.3 -1.9 12.1 -5.9zM791.2 479l12.3 6 .4 -1.9 -12.4 -6zM373.3 510.8l-2.8 .4 -.7 -1.9 2.8 -.4zM617.3 467.9l-7 -.8 -7 -1.2 -.1 -1.9 7 1.2 7.1 .8zM816.1 491.1l12.8 6.2 .5 -1.9 -12.9 -6.2zM434.5 497.3l-13 6.4 -.5 -1.9 13 -6.4zM841.9 503.7l13.3 6.5 .6 -2 -13.4 -6.4zM408.2 510.2l-13.6 6.6 -.6 -2 13.6 -6.6zM394.6 516.8l-2.8 .5 -.6 -1.9 2.8 -.6zM868.8 516.8l13.8 6.7 .6 -1.9 -13.8 -6.8z"/><path fill="#fffeff" stroke="#fffeff" d="M623.8 272l3.9 -.1 4 0 0 -1.6 -4 0 -3.9 0zM631.7 271.9l4 0 3.9 .1 0 -1.7 -3.9 0 -4 0zM615.9 272.2l4 -.1 3.9 -.1 0 -1.7 -4 .1 -3.9 .2zM639.6 272l3.9 .1 4 .1 0 -1.6 -3.9 -.2 -4 -.1zM608 272.6l4 -.2 3.9 -.2 0 -1.6 -4 .1 -3.9 .2zM647.5 272.2l3.9 .2 4 .2 0 -1.7 -3.9 -.2 -4 -.1zM600.1 273.1l4 -.3 3.9 -.2 0 -1.7 -4 .3 -3.9 .3zM655.4 272.6l3.9 .2 4 .3 0 -1.6 -3.9 -.3 -4 -.3zM592.3 273.8l3.9 -.4 3.9 -.3 0 -1.6 -4 .3 -3.9 .4zM663.3 273.1l3.9 .3 3.9 .4 .1 -1.6 -3.9 -.4 -4 -.3zM671.1 273.8l3.9 .4 4 .4 0 -1.6 -3.9 -.4 -3.9 -.4zM584.4 274.6l4 -.4 3.9 -.4 -.1 -1.6 -3.9 .4 -3.9 .4zM679 274.6l3.9 .5 3.9 .5 .1 -1.6 -3.9 -.5 -4 -.5zM576.6 275.6l3.9 -.5 3.9 -.5 0 -1.6 -4 .5 -3.9 .5zM568.8 276.8l3.9 -.6 3.9 -.6 -.1 -1.6 -3.9 .5 -3.9 .6zM686.8 275.6l3.9 .6 3.9 .6 .1 -1.7 -3.9 -.6 -3.9 -.5zM694.6 276.8l3.8 .6 3.9 .7 .1 -1.7 -3.8 -.6 -3.9 -.7zM561.1 278.1l3.9 -.7 3.8 -.6 -.1 -1.7 -3.9 .7 -3.8 .6zM644.4 276.7l-1.6 -.4 0 -1.7 1.6 .4zM646.1 276.4l-1.7 .3 0 -1.7 1.7 -.2zM619 276.7l6.4 -.2 6.3 0 0 -1.7 -6.4 .1 -6.3 .1zM553.4 279.5l3.8 -.7 3.9 -.7 -.1 -1.7 -3.9 .7 -3.9 .8zM702.3 278.1l3.9 .7 3.8 .7 .2 -1.6 -3.9 -.8 -3.9 -.7zM606.3 277.3l6.4 -.4 6.3 -.2 0 -1.7 -6.4 .3 -6.3 .4zM593.7 278.3l6.3 -.5 6.3 -.5 0 -1.6 -6.3 .4 -6.4 .6zM657.1 277.3l6.3 .5 6.3 .5 .1 -1.6 -6.4 -.6 -6.3 -.4zM545.7 281.2l3.8 -.9 3.9 -.8 -.2 -1.6 -3.8 .8 -3.8 .8zM710 279.5l3.9 .8 3.8 .9 .1 -1.7 -3.8 -.8 -3.8 -.8zM671.4 278.2l-1.7 .1 .1 -1.6 1.7 -.2zM538.1 282.9l3.8 -.9 3.8 -.8 -.1 -1.7 -3.9 .9 -3.8 .9zM717.7 281.2l3.8 .8 3.8 .9 .2 -1.6 -3.8 -.9 -3.9 -.9zM682.3 279.8l6.2 .9 6.3 .9 .1 -1.6 -6.3 -1 -6.2 -.9zM530.5 284.9l3.8 -1 3.8 -1 -.2 -1.6 -3.8 .9 -3.8 1zM725.3 282.9l3.8 1 3.8 1 .2 -1.7 -3.8 -1 -3.8 -.9zM556.2 283.9l6.2 -1.2 6.2 -1.1 -.1 -1.6 -6.2 1.1 -6.2 1.2zM631.7 281.2l6.1 0 6.1 .2 0 -1.7 -6.1 -.1 -6.1 -.1zM523 286.9l3.7 -1 3.8 -1 -.2 -1.7 -3.7 1 -3.8 1.1zM732.9 284.9l3.8 1 3.7 1 .2 -1.6 -3.8 -1.1 -3.7 -1zM607.3 282l6.1 -.4 6.1 -.2 0 -1.7 -6.1 .3 -6.1 .3zM643.9 281.4l6.1 .2 6.1 .4 0 -1.7 -6.1 -.3 -6.1 -.3zM595.2 283l6 -.6 6.1 -.4 0 -1.7 -6.1 .5 -6.1 .5zM668.2 283l-1.5 -.5 .1 -1.7 1.5 .5zM544 286.6l6.1 -1.4 6.1 -1.3 -.1 -1.6 -6.1 1.3 -6.2 1.4zM707.2 283.9l6.1 1.3 6.1 1.4 .2 -1.6 -6.2 -1.4 -6.1 -1.3zM515.6 289.2l3.7 -1.2 3.7 -1.1 -.2 -1.6 -3.7 1.1 -3.7 1.1zM740.4 286.9l3.7 1.1 3.7 1.2 .2 -1.7 -3.7 -1.1 -3.7 -1.1zM668.2 283l6.1 .6 6 .8 .1 -1.7 -6 -.7 -6.1 -.7zM544 286.6l-1.9 .1 -.1 -1.7 1.8 0zM571.1 286.2l6 -1 6 -.8 -.1 -1.7 -6 .9 -6 .9zM680.3 284.4l6 .8 6 1 .1 -1.7 -6 -.9 -6 -.9zM747.8 289.2l3.7 1.2 3.7 1.2 .2 -1.7 -3.6 -1.2 -3.8 -1.2zM508.2 291.6l3.7 -1.2 3.7 -1.2 -.2 -1.7 -3.8 1.2 -3.6 1.2zM643.4 286.1l-1.6 -.4 0 -1.6 1.6 .4zM560.6 287.7l-1.4 .7 -.1 -1.7 1.3 -.6zM704.2 288.4l-1.4 -.7 .2 -1.6 1.3 .6zM559.2 288.4l-1.9 0 -.1 -1.7 1.9 0zM706.1 288.4l-1.9 0 .1 -1.7 1.9 0zM755.2 291.6l3.7 1.3 3.6 1.3 .3 -1.7 -3.7 -1.3 -3.7 -1.3zM500.9 294.2l3.6 -1.3 3.7 -1.3 -.2 -1.7 -3.7 1.3 -3.7 1.3zM608.3 286.7l5.8 -.3 5.9 -.3 0 -1.6 -5.9 .2 -5.8 .4zM643.4 286.1l5.9 .3 5.8 .3 0 -1.6 -5.8 -.4 -5.9 -.2zM731.5 289.8l6 1.7 6 1.8 .2 -1.7 -6 -1.8 -6 -1.7zM666.7 287.7l-1.5 -.5 0 -1.7 1.6 .5zM666.7 287.7l5.8 .6 5.8 .8 .1 -1.7 -5.8 -.7 -5.8 -.7zM585.1 289.1l5.8 -.8 5.8 -.6 -.1 -1.7 -5.8 .7 -5.8 .7zM548.7 290.3l-1.3 .7 -.1 -1.7 1.3 -.7zM493.7 296.9l3.6 -1.4 3.6 -1.3 -.3 -1.7 -3.6 1.3 -3.6 1.4zM762.5 294.2l3.6 1.3 3.6 1.4 .3 -1.7 -3.6 -1.4 -3.6 -1.3zM573.6 290.8l5.7 -.9 5.8 -.8 -.1 -1.7 -5.8 .8 -5.7 .9zM535.8 294.1l5.8 -1.6 5.8 -1.5 -.1 -1.7 -5.9 1.5 -5.8 1.6zM716 291l5.8 1.5 5.8 1.6 .2 -1.7 -5.8 -1.6 -5.9 -1.5zM508.1 297.3l5.9 -2.1 5.9 -1.9 -.2 -1.7 -5.9 2 -5.9 2zM743.5 293.3l5.9 1.9 5.9 2.1 .2 -1.7 -5.9 -2 -5.9 -2zM769.7 296.9l3.6 1.4 3.6 1.5 .2 -1.7 -3.5 -1.5 -3.6 -1.4zM486.5 299.8l3.6 -1.5 3.6 -1.4 -.3 -1.7 -3.6 1.4 -3.5 1.5zM562.2 293l5.7 -1.2 5.7 -1 -.1 -1.7 -5.8 1.1 -5.7 1.1zM689.8 290.8l5.7 1 5.7 1.2 .2 -1.7 -5.7 -1.1 -5.8 -1.1zM620.5 291l-1.7 -.3 -.1 -1.7 1.8 .3zM644.6 290.7l-1.7 .3 0 -1.7 1.8 -.3zM703.1 293l-1.9 0 .2 -1.7 1.8 0zM620.5 291l5.6 -.1 5.6 -.1 0 -1.6 -5.6 0 -5.6 .1zM631.7 290.8l5.6 .1 5.6 .1 0 -1.7 -5.6 -.1 -5.6 0zM598.2 292.5l5.5 -.5 5.6 -.4 0 -1.7 -5.6 .4 -5.6 .5zM550.9 295.5l5.6 -1.3 5.7 -1.2 -.2 -1.7 -5.6 1.2 -5.6 1.3zM776.9 299.8l3.5 1.5 3.5 1.5 .3 -1.7 -3.5 -1.5 -3.6 -1.5zM479.5 302.8l3.5 -1.5 3.5 -1.5 -.2 -1.7 -3.6 1.5 -3.5 1.5zM665.2 292.5l5.6 .6 5.5 .7 .1 -1.6 -5.6 -.7 -5.5 -.7zM587.1 293.8l5.5 -.7 5.6 -.6 -.1 -1.7 -5.5 .7 -5.6 .7zM587.1 293.8l-1.8 -.1 -.1 -1.7 1.8 .2zM676.3 293.8l5.5 .8 5.5 .9 .1 -1.7 -5.5 -.8 -5.5 -.8zM494.8 302l-1.6 -.4 -.3 -1.7 1.6 .4zM577.6 294.9l-1.5 .6 -.1 -1.7 1.5 -.6zM513.1 301.3l5.6 -1.9 5.6 -1.9 -.2 -1.7 -5.6 1.9 -5.6 2zM496.6 301.7l-1.8 .3 -.3 -1.7 1.9 -.3zM472.6 306.1l3.4 -1.7 3.5 -1.6 -.3 -1.7 -3.5 1.6 -3.4 1.7zM783.9 302.8l3.5 1.6 3.4 1.7 .3 -1.7 -3.4 -1.7 -3.5 -1.6zM565.2 297.6l5.4 -1.1 5.5 -1 -.1 -1.7 -5.5 1 -5.4 1.1zM511.2 301.6l-1.5 -.5 -.2 -1.7 1.5 .5zM753.7 301.1l-1.5 .5 .2 -1.7 1.5 -.5zM513.1 301.3l-1.9 .3 -.2 -1.7 1.9 -.2zM752.2 301.6l-1.9 -.3 .2 -1.6 1.9 .2zM621 296l5.4 -.1 5.3 -.1 0 -1.7 -5.4 .1 -5.3 .1zM631.7 295.8l5.3 .1 5.4 .1 0 -1.7 -5.3 -.1 -5.4 -.1zM528.8 301.8l5.5 -1.8 5.5 -1.6 -.2 -1.7 -5.5 1.6 -5.4 1.8zM723.6 298.4l5.5 1.6 5.5 1.8 .1 -1.7 -5.4 -1.8 -5.5 -1.6zM610.3 296.6l5.4 -.4 5.3 -.2 0 -1.7 -5.4 .2 -5.3 .4zM465.7 309.5l3.4 -1.8 3.5 -1.6 -.3 -1.7 -3.5 1.6 -3.4 1.7zM790.8 306.1l3.5 1.6 3.4 1.8 .3 -1.8 -3.4 -1.7 -3.5 -1.6zM698.2 297.6l5.4 1.2 5.3 1.3 .2 -1.7 -5.4 -1.3 -5.4 -1.2zM599.7 297.5l5.3 -.5 5.3 -.4 0 -1.7 -5.3 .4 -5.3 .5zM653.1 296.6l5.3 .4 5.3 .5 0 -1.7 -5.3 -.5 -5.3 -.4zM589.2 298.7l5.2 -.7 5.3 -.5 0 -1.7 -5.3 .6 -5.3 .6zM674.2 298.7l-1.5 -.6 .1 -1.7 1.5 .6zM676.1 298.6l-1.9 .1 .1 -1.7 1.9 -.1zM543.9 302.9l5.2 -1.5 5.4 -1.3 -.2 -1.7 -5.3 1.3 -5.3 1.5zM708.9 300.1l5.4 1.3 5.2 1.5 .2 -1.7 -5.3 -1.5 -5.3 -1.3zM578.7 300.4l5.2 -.9 5.3 -.8 -.1 -1.7 -5.3 .8 -5.2 .9zM734.6 301.8l5.4 1.8 5.3 1.9 .2 -1.7 -5.4 -1.9 -5.4 -1.8zM797.7 309.5l3.3 1.7 3.4 1.8 .3 -1.7 -3.4 -1.8 -3.3 -1.8zM459 313l3.4 -1.8 3.3 -1.7 -.3 -1.8 -3.3 1.8 -3.4 1.8zM578.7 300.4l-1.9 -.1 -.1 -1.7 1.9 .1zM719.5 302.9l5.3 1.5 5.2 1.7 .1 -1.7 -5.2 -1.7 -5.2 -1.5zM533.4 306.1l5.2 -1.7 5.3 -1.5 -.2 -1.7 -5.2 1.5 -5.2 1.7zM623.2 300.7l-1.7 .4 0 -1.7 1.7 -.4zM621.5 301.1l-1.7 -.3 0 -1.7 1.7 .3zM631.7 300.9l5.1 .1 5.1 .1 0 -1.7 -5.1 -.1 -5.1 -.1zM641.9 301.1l5 .2 5.1 .3 0 -1.7 -5 -.3 -5.1 -.2zM507.6 309.6l5.2 -2.1 5.3 -2 -.2 -1.7 -5.3 2 -5.2 2.1zM558.1 304.7l5.1 -1.2 5.1 -1.1 -.1 -1.7 -5.1 1.1 -5.1 1.2zM452.5 316.7l3.2 -1.8 3.3 -1.9 -.3 -1.7 -3.3 1.8 -3.3 1.9zM804.4 313l3.3 1.9 3.2 1.8 .4 -1.7 -3.3 -1.9 -3.3 -1.8zM489.4 310.7l-1.6 -.4 -.3 -1.7 1.7 .4zM601.3 302.5l5.1 -.5 5 -.4 0 -1.7 -5.1 .4 -5 .5zM652 301.6l5 .4 5.1 .5 0 -1.7 -5 -.5 -5.1 -.4zM491.3 310.3l-1.9 .4 -.2 -1.7 1.9 -.4zM663.9 302.3l-1.8 .2 0 -1.7 1.9 -.2zM591.3 303.7l5 -.6 5 -.6 0 -1.7 -5.1 .6 -5 .6zM789 311.8l5.4 2.9 5.3 2.9 .3 -1.8 -5.3 -2.9 -5.4 -2.8zM463.7 317.6l5.3 -2.9 5.4 -2.9 -.3 -1.7 -5.4 2.8 -5.3 2.9zM523.2 309.7l5.1 -1.9 5.1 -1.7 -.1 -1.7 -5.2 1.7 -5.1 1.9zM705.3 304.7l5.1 1.3 5 1.4 .1 -1.7 -5 -1.4 -5.1 -1.3zM548 307.4l5 -1.4 5.1 -1.3 -.1 -1.7 -5.1 1.3 -5 1.4zM581.3 305.3l5 -.8 5 -.8 -.1 -1.7 -5 .7 -5 .9zM772.1 310.3l5.3 2.5 5.2 2.6 .2 -1.7 -5.2 -2.6 -5.3 -2.5zM682.1 305.3l-1.5 -.7 .1 -1.7 1.5 .7zM683.9 305.2l-1.8 .1 .1 -1.7 1.8 -.1zM810.9 316.7l3.3 2 3.2 1.9 .3 -1.7 -3.2 -2 -3.2 -1.9zM446 320.6l3.2 -1.9 3.3 -2 -.4 -1.7 -3.2 1.9 -3.2 2zM755.8 309.6l5.2 2.2 5 2.3 .3 -1.7 -5.1 -2.3 -5.2 -2.2zM571.5 307.2l4.9 -1 4.9 -.9 -.1 -1.7 -4.9 .9 -4.9 1zM691.9 307.2l-1.4 -.7 .1 -1.7 1.4 .7zM538.1 310.5l4.9 -1.6 5 -1.5 -.1 -1.7 -5 1.5 -5 1.6zM715.4 307.4l5 1.5 4.9 1.6 .2 -1.7 -5 -1.6 -5 -1.5zM693.8 307.2l-1.9 0 .1 -1.7 1.9 0zM740.2 309.7l5 1.9 5 2.1 .2 -1.8 -5 -2 -5 -1.9zM561.8 309.5l4.8 -1.2 4.9 -1.1 -.1 -1.7 -4.9 1.1 -4.8 1.1zM602.9 307.6l9.6 -.8 0 -1.7 -9.6 .8zM650.9 306.8l9.6 .8 0 -1.7 -9.6 -.8zM439.7 324.7l3.1 -2.1 3.2 -2 -.3 -1.7 -3.2 2 -3.1 2zM817.4 320.6l3.2 2 3.1 2.1 .3 -1.8 -3.1 -2 -3.2 -2zM703.5 309.5l-1.9 0 .1 -1.8 2 .1zM453.4 323.8l5.1 -3.2 5.2 -3 -.3 -1.8 -5.2 3.1 -5.1 3.1zM782.6 315.4l5.1 2.7 5 2.9 .3 -1.8 -5 -2.8 -5.2 -2.7zM593.4 308.8l9.5 -1.2 0 -1.7 -9.5 1.2zM660.5 307.6l9.5 1.2 0 -1.7 -9.5 -1.2zM766 314.1l5.1 2.5 4.9 2.5 .3 -1.8 -5 -2.5 -5 -2.4zM487.4 319.1l4.9 -2.5 5.1 -2.5 -.3 -1.7 -5 2.4 -5 2.5zM593.4 308.8l-1.8 -.1 -.1 -1.7 1.9 .1zM552.2 312.1l4.8 -1.4 4.8 -1.2 -.1 -1.8 -4.8 1.3 -4.8 1.3zM670 308.8l9.4 1.5 0 -1.7 -9.4 -1.5zM503.5 318l4.8 -2.2 4.9 -2.1 -.2 -1.8 -4.9 2.2 -4.8 2.2zM750.2 313.7l4.9 2.1 4.8 2.2 .2 -1.7 -4.8 -2.2 -4.9 -2.2zM713.1 312.2l-1.9 -.1 .1 -1.8 1.9 .2zM468.8 321.5l-1.8 -.3 -.3 -1.7 1.8 .3zM470.7 321l-1.9 .5 -.3 -1.7 1.9 -.6zM451.6 324.4l-1.9 -.3 -.3 -1.7 1.8 .2zM779.6 319.2l-1.7 .3 .2 -1.7 1.8 -.3zM453.4 323.8l-1.8 .6 -.4 -1.8 1.9 -.6zM777.9 319.5l-1.9 -.4 .3 -1.8 1.8 .5zM823.7 324.7l3.1 2.1 3 2.1 .4 -1.7 -3.1 -2.2 -3.1 -2.1zM433.6 328.9l3 -2.1 3.1 -2.1 -.3 -1.8 -3.1 2.1 -3.1 2.2zM679.4 310.3l9.3 1.8 .1 -1.7 -9.4 -1.8zM576.2 311.4l-1.5 .7 -.1 -1.7 1.5 -.7zM542.9 315l4.6 -1.5 4.7 -1.4 -.1 -1.8 -4.7 1.5 -4.7 1.5zM574.7 312.1l-1.9 0 -.1 -1.7 1.9 0zM735 314l4.7 1.8 4.7 2 .3 -1.7 -4.8 -2 -4.7 -1.9zM633.5 311.1l-1.8 .4 0 -1.7 1.8 -.4zM631.7 311.5l-1.8 -.4 0 -1.7 1.8 .4zM688.7 312.1l9.1 2.2 .1 -1.7 -9.1 -2.2zM649.8 312.1l-1.7 -.5 .1 -1.7 1.6 .5zM477.8 324.4l4.8 -2.7 4.8 -2.6 -.3 -1.8 -4.8 2.6 -4.8 2.8zM651.7 311.8l-1.9 .3 0 -1.7 1.9 -.3zM604.6 312.9l9 -.8 0 -1.7 -9.1 .8zM494.1 322.8l4.7 -2.5 4.7 -2.3 -.2 -1.7 -4.8 2.3 -4.7 2.4zM759.9 318l4.7 2.3 4.7 2.5 .3 -1.8 -4.7 -2.4 -4.8 -2.3zM720.5 315l4.6 1.6 4.6 1.7 .2 -1.7 -4.6 -1.7 -4.6 -1.6zM595.6 314l9 -1.1 -.1 -1.7 -8.9 1.1zM697.8 314.3l9 2.5 .2 -1.7 -9.1 -2.5zM744.4 317.8l4.7 2 4.5 2.2 .3 -1.8 -4.6 -2.1 -4.6 -2zM586.8 315.4l8.8 -1.4 0 -1.7 -8.9 1.4zM578 317.2l8.8 -1.8 -.1 -1.7 -8.8 1.8zM729.7 318.3l4.5 1.8 4.4 1.9 .2 -1.8 -4.4 -1.8 -4.5 -1.8zM578 317.2l-1.9 0 -.1 -1.7 1.9 0zM468.5 330.1l4.6 -2.9 4.7 -2.8 -.3 -1.7 -4.7 2.8 -4.6 2.9zM785.6 324.4l4.7 2.8 4.6 2.9 .3 -1.7 -4.6 -2.9 -4.7 -2.8zM769.3 322.8l4.6 2.5 4.5 2.6 .3 -1.8 -4.5 -2.6 -4.6 -2.5zM485 327.9l4.5 -2.6 4.6 -2.5 -.3 -1.8 -4.6 2.5 -4.5 2.6zM451.6 333.3l4.6 -3.2 4.7 -3.2 -.3 -1.7 -4.7 3.1 -4.7 3.2zM802.5 326.9l4.7 3.2 4.6 3.2 .4 -1.8 -4.7 -3.2 -4.7 -3.1zM500.8 326.5l4.5 -2.3 4.5 -2.2 -.3 -1.8 -4.5 2.3 -4.4 2.3zM614.7 317.5l5.7 -.3 5.6 -.2 5.7 -.1 0 -1.7 -5.7 .1 -5.7 .2 -5.6 .3zM631.7 316.9l5.7 .1 5.6 .2 5.7 .3 0 -1.7 -5.6 -.3 -5.7 -.2 -5.7 -.1zM597.9 319.3l5.6 -.7 5.6 -.6 5.6 -.5 0 -1.7 -5.7 .5 -5.6 .6 -5.6 .7zM648.7 317.5l5.6 .5 5.6 .6 5.6 .7 .1 -1.7 -5.6 -.7 -5.6 -.6 -5.7 -.5zM798.6 330.5l-1.9 .2 .3 -1.7 1.9 -.2zM796.7 330.7l-1.8 -.6 .3 -1.7 1.8 .6zM516.1 326l4.3 -2.1 4.4 -1.9 -.2 -1.8 -4.4 2 -4.3 2zM738.6 322l4.4 1.9 4.3 2.1 .2 -1.8 -4.3 -2 -4.4 -2zM537.1 323l-1.5 -.5 -.2 -1.7 1.6 .5zM727.8 322.5l-1.5 .5 .1 -1.7 1.6 -.5zM726.3 323l-2 -.2 .2 -1.8 1.9 .3zM539.1 322.8l-2 .2 -.1 -1.7 1.9 -.3zM704.4 321.7l-2 -.1 .2 -1.7 1.9 .1zM778.4 327.9l4.4 2.7 4.4 2.8 .3 -1.8 -4.4 -2.8 -4.4 -2.7zM552.7 324.3l8.3 -2.7 -.2 -1.7 -8.3 2.7zM507.7 330.3l4.2 -2.2 4.2 -2.1 -.2 -1.8 -4.3 2.2 -4.1 2.2zM747.3 326l4.2 2.1 4.2 2.2 .2 -1.7 -4.1 -2.2 -4.3 -2.2zM633.5 322.1l-1.8 .4 0 -1.7 1.8 -.5zM631.7 322.5l-1.8 -.4 0 -1.8 1.8 .5zM490.4 332l-1.9 -.3 -.2 -1.8 1.8 .3zM544.6 327.3l8.1 -3 -.2 -1.7 -8.1 2.9zM492.3 331.4l-1.9 .6 -.3 -1.8 1.9 -.5zM682 322.3l5.4 1.3 5.3 1.4 5.2 1.5 .2 -1.7 -5.3 -1.5 -5.3 -1.4 -5.4 -1.3zM542.6 327.6l-1.6 -.6 -.2 -1.7 1.7 .5zM544.6 327.3l-2 .3 -.1 -1.8 1.9 -.3zM601.8 324.1l-1.6 .7 0 -1.8 1.6 -.6zM600.2 324.8l-1.9 -.2 -.1 -1.7 2 .1zM771.1 331.4l4.2 2.6 4.1 2.7 .2 -1.8 -4 -2.7 -4.2 -2.5zM499.7 335l3.9 -2.4 4.1 -2.3 -.2 -1.7 -4.1 2.3 -4 2.3zM718.8 327.3l7.9 3.3 .2 -1.8 -7.9 -3.3zM663.2 324.8l5.1 .8 5.2 .9 5 1.1 .1 -1.8 -5.1 -1 -5.1 -1 -5.2 -.8zM740.8 330.1l7.9 4.1 .2 -1.8 -7.8 -4.1zM697.9 326.5l5.2 1.7 5.1 1.8 5 1.9 .2 -1.8 -5 -1.9 -5.1 -1.8 -5.2 -1.6zM497.8 335.6l-1.9 -.3 -.3 -1.8 1.9 .3zM499.7 335l-1.9 .6 -.3 -1.8 1.9 -.6zM833.1 348.2l9 -2.4 .4 -1.8 -9 2.4zM430.3 348.2l-9 -2.4 -.4 -1.8 9 2.4zM726.7 330.6l7.6 3.6 .2 -1.8 -7.6 -3.6zM633.5 327.8l-1.8 .4 0 -1.7 1.8 -.5zM570 331.5l4.9 -1.4 5 -1.3 5 -1.2 -.1 -1.8 -5 1.2 -5 1.3 -4.9 1.5zM646.3 328.7l-1.7 -.5 0 -1.8 1.8 .6zM617.1 328.7l7.3 -.4 7.3 -.1 0 -1.7 -7.3 .1 -7.4 .4zM648.3 328.4l-2 .3 .1 -1.7 1.9 -.3zM602.6 330.3l7.2 -.9 7.3 -.7 -.1 -1.7 -7.3 .6 -7.2 1zM850.6 353.9l9.4 -2.1 .5 -1.7 -9.5 2zM748.7 334.2l7.6 4.4 .2 -1.7 -7.6 -4.5zM602.6 330.3l-2 -.1 -.1 -1.8 2 .2zM734.3 334.2l7.3 3.9 .2 -1.8 -7.3 -3.9zM660.8 330.3l7.2 1.2 7 1.5 .1 -1.8 -7.1 -1.4 -7.1 -1.2zM535.8 338.4l4.7 -2.3 4.8 -2.2 4.9 -2 -.2 -1.8 -4.9 2.1 -4.8 2.1 -4.7 2.3zM713.2 331.9l4.9 2 4.8 2.2 4.7 2.3 .2 -1.8 -4.7 -2.3 -4.8 -2.1 -4.9 -2.1zM589.9 332.2l-1.5 .8 -.1 -1.8 1.5 -.8zM588.4 333l-2 0 -.1 -1.8 2 0zM443.3 349.7l-1.8 .9 -.3 -1.8 1.7 -.9zM821.9 350.6l-1.8 -.9 .4 -1.8 1.7 .9zM499.9 343.4l7.2 -4.8 -.2 -1.7 -7.2 4.7zM441.5 350.6l-2 0 -.4 -1.8 2.1 0zM823.9 350.6l-2 0 .3 -1.8 2.1 0zM731.4 338.4l-1.8 .4 .2 -1.7 1.8 -.5zM741.6 338.1l7 4.2 .3 -1.8 -7.1 -4.2zM729.6 338.8l-2 -.4 .2 -1.8 2 .5zM618.3 334.5l6.7 -.3 6.7 -.2 0 -1.7 -6.7 .1 -6.8 .4zM618.3 334.5l-2 -.3 0 -1.7 1.9 .3zM606.6 335.3l-1.6 .7 -.1 -1.8 1.7 -.6zM658.4 336l-1.6 -.7 0 -1.7 1.7 .6zM660.4 335.9l-2 .1 .1 -1.8 2 -.1zM592 338.5l6.4 -1.4 6.6 -1.1 -.1 -1.8 -6.5 1.1 -6.5 1.4zM831.4 358l9.6 -2.1 .4 -1.7 -9.7 2zM522.5 346.1l4.3 -2.7 4.4 -2.6 4.6 -2.4 -.2 -1.8 -4.6 2.5 -4.4 2.5 -4.3 2.7zM473.8 351.7l-8.9 -2.7 -.3 -1.8 8.9 2.8zM789.6 351.7l8.9 -2.7 .3 -1.8 -8.9 2.8zM856.2 362.3l-1.7 -1 .5 -1.8 1.7 1zM858.4 362.4l-2.2 -.1 .5 -1.8 2.1 .1zM458 355.4l-9.3 -2.4 -.4 -1.8 9.3 2.4zM579.5 341.9l6.2 -1.9 6.3 -1.5 -.1 -1.8 -6.3 1.6 -6.2 1.8zM671.4 338.5l6.3 1.5 6.2 1.9 .1 -1.8 -6.2 -1.8 -6.3 -1.6zM415.1 364.2l-10.1 -1.8 -.4 -1.8 10 1.8zM787.5 351.8l-1.8 -.8 .3 -1.8 1.8 .8zM789.6 351.7l-2.1 .1 .3 -1.8 2.1 0zM619.5 340.5l6.1 -.4 6.1 -.1 0 -1.8 -6.1 .2 -6.1 .3zM631.7 340l6.1 .1 6.1 .4 0 -1.8 -6.1 -.3 -6.1 -.2zM441.8 360.1l-9.8 -2.1 -.3 -1.8 9.7 2.1zM803.3 355.4l-1.7 -.8 .3 -1.8 1.8 .8zM805.4 355.4l-2.1 0 .4 -1.8 2.1 0zM643.9 340.5l6.1 .5 6 .8 0 -1.8 -6 -.7 -6.1 -.6zM701.7 341.3l6.3 2.8 5.9 2.9 .2 -1.7 -6 -3 -6.2 -2.7zM549.5 347l5.9 -2.9 6.3 -2.8 -.2 -1.7 -6.2 2.7 -6 3zM530.3 349.8l4 -2.5 4 -2.3 4.3 -2.3 -.2 -1.8 -4.2 2.3 -4.1 2.4 -4 2.5zM720.8 342.7l4.3 2.3 4 2.3 4 2.5 .2 -1.7 -4 -2.5 -4.1 -2.4 -4.2 -2.3zM683.9 341.9l6.1 2 5.8 2.3 .1 -1.8 -5.8 -2.2 -6.1 -2.1zM595.7 344.1l5.8 -1.3 5.9 -1 0 -1.8 -5.9 1.1 -5.9 1.2zM656 341.8l5.9 1 5.8 1.3 .1 -1.8 -5.9 -1.2 -5.9 -1.1zM467.4 357.9l-9.4 -2.5 -.4 -1.8 9.5 2.5zM397.8 371.4l-10.5 -1.3 -.5 -1.8 10.6 1.3zM565.6 346.5l-1.7 -.6 -.2 -1.7 1.7 .5zM699.5 345.9l-1.7 .6 .2 -1.8 1.7 -.5zM567.6 346.2l-2 .3 -.2 -1.8 2.1 -.3zM697.8 346.5l-2 -.3 .1 -1.8 2.1 .3zM811.8 362.2l9.8 -2.1 .4 -1.8 -9.8 2.1zM836 365.7l-1.7 -1 .4 -1.8 1.7 1zM528.4 350.4l-2 -.3 -.2 -1.7 2 .3zM530.3 349.8l-1.9 .6 -.2 -1.7 1.9 -.6zM838.2 365.9l-2.2 -.2 .4 -1.8 2.2 .2zM631.7 346.1l-1.9 -.4 0 -1.8 1.9 .4zM809.7 362.1l-1.7 -.9 .3 -1.8 1.8 .9zM622.6 345.9l-1.8 .6 -.1 -1.7 1.8 -.6zM631.7 346.1l5.5 .1 5.4 .3 .1 -1.7 -5.5 -.3 -5.5 -.2zM620.8 346.5l-2 -.3 0 -1.7 1.9 .3zM811.8 362.2l-2.1 -.1 .4 -1.8 2.1 .1zM855 372.8l10.6 -1.4 .4 -1.8 -10.5 1.4zM713.9 347l5.8 3.3 5.5 3.4 .1 -1.8 -5.4 -3.4 -5.8 -3.2zM476.9 360.4l-9.5 -2.5 -.3 -1.8 9.5 2.5zM435.4 367.6l-10.2 -1.7 -.4 -1.8 10.2 1.7zM642.6 346.5l5.5 .5 5.3 .8 .1 -1.8 -5.4 -.7 -5.4 -.5zM784.4 360.4l-1.7 -.9 .3 -1.8 1.7 .9zM786.5 360.4l-2.1 0 .3 -1.8 2.1 0zM419 374.1l-10.6 -1.3 -.5 -1.8 10.7 1.3zM465.3 363.3l-1.7 1 -.4 -1.8 1.7 -1zM463.6 364.3l-2.2 0 -.3 -1.8 2.1 0zM445.7 369.4l-10.3 -1.8 -.4 -1.8 10.3 1.7zM817.7 369.4l10.3 -1.8 .4 -1.8 -10.3 1.7zM486.4 362.9l-9.5 -2.5 -.3 -1.8 9.5 2.5zM589.3 352.6l5 -1.5 5.1 -1.3 0 -1.8 -5.2 1.3 -5 1.5zM664 349.8l5.1 1.3 5 1.5 .1 -1.8 -5 -1.5 -5.2 -1.3zM706.9 351.5l5.2 2.9 5 3.2 .2 -1.8 -5 -3.2 -5.2 -2.9zM546.3 357.6l5 -3.2 5.2 -2.9 -.2 -1.8 -5.2 2.9 -5 3.2zM689.8 351.2l5.1 2.3 4.9 2.5 .1 -1.8 -4.9 -2.5 -5.1 -2.3zM563.6 356l4.9 -2.5 5.1 -2.3 -.1 -1.8 -5.1 2.3 -4.9 2.5zM631.7 352.4l-1.9 -.5 0 -1.8 1.9 .5zM631.7 352.4l9.6 .4 .1 -1.8 -9.7 -.4zM833.7 375.4l10.7 -1.3 .4 -1.8 -10.7 1.3zM429.7 375.4l-10.7 -1.3 -.4 -1.8 10.7 1.3zM641.3 352.8l9.6 1 0 -1.7 -9.5 -1.1zM674.1 352.6l4.8 1.7 4.8 1.9 .1 -1.8 -4.8 -1.8 -4.8 -1.8zM614.2 353.1l-1.7 .7 0 -1.7 1.7 -.8zM612.5 353.8l-2 -.1 -.1 -1.8 2.1 .2zM861 381.8l11 -1 .5 -1.8 -11.1 .9zM807.4 371.1l10.3 -1.7 .4 -1.9 -10.4 1.8zM767.3 365.4l9.7 -2.5 .3 -1.8 -9.7 2.5zM650.9 353.8l9.2 1.9 .1 -1.8 -9.3 -1.8zM737 362l-1.8 -.7 .2 -1.8 1.8 .7zM739.1 361.9l-2.1 .1 .2 -1.8 2.1 -.1zM660.1 355.7l8.9 2.5 .1 -1.8 -8.9 -2.5zM440.4 376.8l-10.7 -1.4 -.4 -1.8 10.7 1.4zM823 376.8l10.7 -1.4 .4 -1.8 -10.7 1.4zM570.9 360.6l4.3 -2.3 4.5 -2.1 -.1 -1.8 -4.5 2.1 -4.4 2.3zM683.7 356.2l4.5 2.1 4.3 2.3 .2 -1.8 -4.4 -2.3 -4.5 -2.1zM849.9 382.7l11.1 -.9 .4 -1.9 -11.1 1zM413.5 382.7l-11.1 -.9 -.4 -1.9 11.1 1zM797 372.9l10.4 -1.8 .3 -1.8 -10.4 1.8zM505.8 368l-9.7 -2.6 -.3 -1.8 9.8 2.6zM847.6 382.3l-1.5 -1.1 .4 -1.8 1.6 1.1zM385.7 390.7l-11.5 -.5 -.5 -1.8 11.5 .4zM849.9 382.7l-2.3 -.4 .5 -1.8 2.2 .4zM586 361.4l8.4 -3.2 -.1 -1.8 -8.4 3.2zM669 358.2l8.4 3.2 .1 -1.8 -8.4 -3.2zM755.4 368l-1.7 -.9 .2 -1.8 1.8 .9zM757.6 368l-2.2 0 .3 -1.8 2.1 0zM786.5 374.6l10.5 -1.7 .3 -1.8 -10.5 1.7zM476.9 374.6l-10.5 -1.7 -.3 -1.8 10.5 1.7zM397.2 391.1l-11.5 -.4 -.5 -1.9 11.5 .5zM866.2 391.1l11.5 -.4 .5 -1.9 -11.5 .5zM480.7 373.4l-1.6 1.1 -.3 -1.8 1.6 -1.1zM677.4 361.4l7.8 3.8 .1 -1.8 -7.8 -3.8zM578.2 365.2l7.8 -3.8 -.1 -1.8 -7.8 3.8zM542.5 368.5l-9.2 -3.3 -.2 -1.8 9.2 3.3zM479.1 374.5l-2.2 .1 -.3 -1.8 2.2 -.1zM399.5 390.7l-2.3 .4 -.5 -1.8 2.3 -.4zM827.6 384.5l11.2 -.9 .4 -1.8 -11.2 .9zM702.5 366.2l-1.9 -.6 .1 -1.8 2 .6zM665.9 364l-2.1 -.1 .1 -1.8 2.1 .1zM704.6 365.9l-2.1 .3 .2 -1.8 2 -.3zM776 376.4l10.5 -1.8 .3 -1.8 -10.5 1.8zM438 384.2l-2.2 .3 -.4 -1.8 2.2 -.3zM773.8 376.3l-1.6 -1.1 .3 -1.8 1.6 1.1zM776 376.4l-2.2 -.1 .3 -1.8 2.2 .1zM631.7 365.4l6.9 .3 6.9 .8 0 -1.8 -6.8 -.8 -7 -.3zM585.8 370l4.3 -2.3 4.6 -2.1 4.9 -1.7 -.1 -1.8 -4.8 1.7 -4.7 2.1 -4.3 2.3zM816.4 385.5l11.2 -1 .4 -1.8 -11.2 1zM551.7 371.9l-9.2 -3.4 -.2 -1.8 9.3 3.4zM711.7 371.9l9.2 -3.4 .2 -1.8 -9.3 3.4zM882.5 400.9l11.9 0 .6 -1.9 -12 0zM604.9 369.7l6.3 -1.9 6.7 -1.3 0 -1.8 -6.7 1.3 -6.4 1.8zM645.5 366.5l6.7 1.3 6.3 1.9 .1 -1.9 -6.4 -1.8 -6.7 -1.3zM500.2 378.1l-2.2 .1 -.3 -1.8 2.3 -.2zM805.2 386.4l11.2 -.9 .4 -1.8 -11.2 .9zM458.2 386.4l-11.2 -.9 -.4 -1.8 11.2 .9zM727.7 375.8l10.1 -2.6 .2 -1.8 -10.1 2.6zM392.9 400.9l-12 0 -.5 -1.9 11.9 0zM431.9 392.6l-11.6 -.5 -.4 -1.8 11.5 .4zM754.7 380.1l10.7 -1.9 .3 -1.8 -10.7 1.8zM561.1 375.3l-9.4 -3.4 -.1 -1.8 9.4 3.4zM702.3 375.3l9.4 -3.4 .1 -1.8 -9.4 3.4zM870.5 400.9l-2.3 -.6 .5 -1.8 2.4 .5zM658.5 369.7l6 2.3 5.5 2.8 .1 -1.8 -5.5 -2.8 -6 -2.4zM793.9 387.4l11.3 -1 .4 -1.8 -11.3 .9zM510.9 379.9l-2.2 .2 -.3 -1.9 2.3 -.1zM404.8 400.9l-11.9 0 -.6 -1.9 12 0zM631.7 372.1l5.6 .2 5.4 .7 .1 -1.8 -5.5 -.7 -5.6 -.2zM622.4 372.2l-1.7 .8 -.1 -1.8 1.8 -.8zM443.4 393.1l-11.5 -.5 -.5 -1.9 11.7 .5zM820 393.1l11.5 -.5 .5 -1.9 -11.7 .5zM545.8 378.5l-10.1 -2.7 -.2 -1.8 10.1 2.7zM620.7 373l-2.2 -.2 0 -1.8 2.1 .2zM644.9 372.8l-2.2 .2 .1 -1.8 2.1 -.2zM793.9 387.4l-2.2 -.4 .3 -1.8 2.3 .3zM744 381.9l10.7 -1.8 .3 -1.9 -10.8 1.9zM480.8 388.3l-11.3 -.9 -.4 -1.9 11.4 1zM416.7 400.9l-11.9 0 -.5 -1.9 12 0zM570.6 378.8l-9.5 -3.5 -.1 -1.8 9.5 3.5zM692.8 378.8l9.5 -3.5 .1 -1.8 -9.5 3.5zM886.4 411.5l12.3 .5 .6 -1.9 -12.4 -.5zM377 411.5l-12.3 .5 -.6 -1.9 12.4 -.5zM530.3 383.7l-10.9 -1.8 -.2 -1.8 10.8 1.8zM733.1 383.7l10.9 -1.8 .2 -1.8 -10.8 1.8zM601.2 379.7l4.3 -2.2 4.8 -1.9 -.1 -1.8 -4.7 1.9 -4.4 2.2zM653.1 375.6l4.8 1.9 4.3 2.2 .1 -1.8 -4.4 -2.2 -4.7 -1.9zM834.7 400.9l12 0 .4 -1.9 -11.9 0zM771.3 389.2l11.3 -.9 .3 -1.8 -11.3 .9zM492.1 389.2l-11.3 -.9 -.3 -1.8 11.3 .9zM874 410.9l12.4 .6 .5 -1.9 -12.3 -.5zM389.4 410.9l-12.4 .6 -.5 -1.9 12.3 -.5zM722.3 385.6l10.8 -1.9 .3 -1.8 -11 1.8zM822.8 400.9l11.9 0 .5 -1.9 -12 0zM503.5 390.2l-11.4 -1 -.3 -1.8 11.4 1zM759.9 390.2l11.4 -1 .3 -1.8 -11.4 1zM631.7 379l5.5 .3 5.3 .9 5.1 1.4 0 -1.8 -5 -1.4 -5.4 -.9 -5.5 -.3zM861.7 410.4l12.3 .5 .6 -1.8 -12.4 -.5zM681 382.5l-1.8 -.8 .1 -1.8 1.8 .8zM683.2 382.3l-2.2 .2 .1 -1.8 2.2 -.2zM543.4 385.4l-2.3 .2 -.1 -1.9 2.2 -.1zM615.8 381.6l-2.2 .2 0 -1.8 2.2 -.2zM810.8 400.9l12 0 .4 -1.9 -12 0zM514.9 391.2l-11.4 -1 -.3 -1.8 11.5 .9zM748.5 391.2l11.4 -1 .3 -1.8 -11.5 .9zM711.3 387.4l11 -1.8 .1 -1.9 -10.9 1.9zM849.4 409.9l12.3 .5 .5 -1.8 -12.3 -.5zM590 385.9l-9.8 -3.6 -.1 -1.8 9.8 3.6zM517.2 390.8l-2.3 .4 -.2 -1.9 2.2 -.3zM416.3 409.3l-2.3 .6 -.5 -1.8 2.4 -.7zM711.3 387.4l-2.2 -.2 .1 -1.8 2.3 .2zM464.5 400.9l-11.9 0 -.4 -1.9 12 0zM798.9 400.9l11.9 0 .4 -1.9 -12 0zM737 392.1l11.5 -.9 .2 -1.9 -11.5 1zM594 385.2l-1.8 .9 -.1 -1.9 1.8 -.8zM837.1 409.4l12.3 .5 .5 -1.8 -12.3 -.5zM592.2 386.1l-2.2 -.2 -.1 -1.8 2.2 .1zM466.8 400.3l-2.3 .6 -.3 -1.9 2.2 -.5zM563.1 389.3l-11 -1.9 -.2 -1.8 11.1 1.9zM786.9 400.9l12 0 .3 -1.9 -11.9 0zM621.5 387.8l4.9 -1.2 5.3 -.5 0 -1.8 -5.3 .4 -4.9 1.3zM631.7 386.1l5.3 .5 4.9 1.2 0 -1.8 -4.9 -1.3 -5.3 -.4zM663.6 389.5l9.8 -3.6 .1 -1.8 -9.9 3.6zM824.8 408.9l12.3 .5 .5 -1.8 -12.3 -.5zM537.9 393.1l-11.5 -1 -.2 -1.8 11.5 .9zM440.8 408.2l-2.2 .7 -.5 -1.8 2.3 -.7zM689.2 391.2l11.1 -1.9 .1 -1.8 -11.1 1.9zM725.5 393.1l-2.2 -.4 .2 -1.8 2.2 .3zM399.5 420.3l-12.7 1 -.5 -1.8 12.7 -1.1zM500.3 400.9l-11.9 0 -.3 -1.9 12 0zM763.1 400.9l11.9 0 .3 -1.9 -12 0zM585.4 393.1l-11.2 -1.9 -.1 -1.8 11.2 1.9zM678 393.1l11.2 -1.9 .1 -1.8 -11.2 1.9zM412.2 419.2l-12.7 1.1 -.5 -1.9 12.7 -1zM851.2 419.2l12.7 1.1 .5 -1.9 -12.7 -1zM587.7 392.9l-2.3 .2 -.1 -1.8 2.3 -.2zM851.2 419.2l-2.3 -.8 .5 -1.8 2.3 .8zM751.1 400.9l12 0 .2 -1.9 -11.9 0zM512.3 400.9l-12 0 -.2 -1.9 11.9 0zM751.1 400.9l-2.2 -.6 .3 -1.8 2.2 .5zM612 393.3l-2.2 -.1 0 -1.9 2.2 .2zM524.2 400.9l-11.9 0 -.3 -1.9 12 0zM838.7 418.2l-2.3 -.8 .4 -1.9 2.3 .8zM437.3 417.1l-12.6 1.1 -.4 -1.9 12.6 -1zM727.2 400.9l12 0 .2 -1.9 -12 0zM727.2 400.9l-2.2 -.6 .2 -1.8 2.2 .5zM449.8 416.1l-12.5 1 -.4 -1.8 12.5 -1.1zM813.6 416.1l12.5 1 .4 -1.8 -12.5 -1.1zM560 400.9l-2 -.6 -.1 -1.8 2 .5zM705.4 400.3l-2 .6 .1 -1.9 2 -.5zM562.2 400.3l-2.2 .6 -.1 -1.9 2.2 -.5zM703.4 400.9l-2.2 -.6 .1 -1.8 2.2 .5zM462.2 415l-12.4 1.1 -.4 -1.9 12.5 -1zM801.2 415l12.4 1.1 .4 -1.9 -12.5 -1zM801.2 415l-2.3 -.7 .4 -1.9 2.2 .8zM693.5 400.3l-2.1 .6 .1 -1.9 2.1 -.5zM691.4 400.9l-2.1 -.6 .1 -1.8 2.1 .5zM474.7 414l-12.5 1 -.3 -1.8 12.4 -1.1zM411.2 428.7l-12.9 1.6 -.5 -1.8 12.9 -1.7zM852.2 428.7l12.9 1.6 .5 -1.8 -12.9 -1.7zM595.9 400.9l-12 0 -.1 -1.9 12 0zM667.5 400.9l12 0 .1 -1.9 -12 0zM667.5 400.9l-2.1 -.6 .1 -1.8 2.1 .5zM776.4 413l12.3 1 .4 -1.9 -12.4 -1zM499.3 411.9l-12.3 1.1 -.3 -1.9 12.3 -1zM764.1 411.9l12.3 1.1 .3 -1.9 -12.3 -1zM839.3 427.1l12.9 1.6 .5 -1.9 -12.9 -1.6zM424.1 427.1l-12.9 1.6 -.5 -1.9 12.9 -1.6zM426.4 426.2l-2.3 .9 -.5 -1.9 2.3 -.9zM751.8 410.9l12.3 1 .3 -1.8 -12.4 -1zM511.6 410.9l-12.3 1 -.3 -1.8 12.4 -1zM513.8 410.2l-2.2 .7 -.2 -1.8 2.1 -.8zM523.9 409.9l-2.2 -.4 -.2 -1.8 2.1 .3zM526 409.1l-2.1 .8 -.3 -1.9 2.2 -.7zM536.1 408.9l-2.2 -.4 -.2 -1.9 2.1 .4zM538.2 408.1l-2.1 .8 -.3 -1.9 2.2 -.7zM878.5 442.9l13.3 2.2 .6 -1.9 -13.3 -2.2zM384.9 442.9l-13.3 2.2 -.6 -1.9 13.3 -2.2zM398.1 440.6l-2.3 -.2 -.5 -1.9 2.3 .2zM400.4 439.6l-2.3 1 -.5 -1.9 2.3 -1zM677.7 408.8l11.9 2 .1 -1.9 -11.9 -2zM852.1 438.4l13.2 2.2 .5 -1.9 -13.2 -2.2zM411.3 438.4l-2.3 -.2 -.6 -1.9 2.4 .2zM413.6 437.4l-2.3 1 -.5 -1.9 2.3 -1zM573.8 410.8l-12 2 -.1 -1.8 12 -2.1zM689.6 410.8l12 2 .1 -1.8 -12 -2.1zM701.6 412.8l12 2.1 .2 -1.9 -12.1 -2zM561.8 412.8l-12 2.1 -.2 -1.9 12.1 -2zM828.4 433.8l-2.3 .2 .5 -1.9 2.3 -.2zM826.1 434l-2.2 -1 .4 -1.9 2.3 1zM549.8 414.9l-12.2 2 -.2 -1.8 12.2 -2.1zM450.1 431.8l-12.8 2.2 -.5 -1.9 12.9 -2.2zM452.3 430.8l-2.2 1 -.4 -1.9 2.2 -1zM537.6 416.9l-12.2 2.1 -.2 -1.9 12.2 -2zM725.8 416.9l12.2 2.1 .2 -1.9 -12.2 -2zM800.5 429.6l12.8 2.2 .4 -1.9 -12.8 -2.2zM525.4 419l-12.3 2.1 -.3 -1.9 12.4 -2.1zM762.7 423.2l-2 -.9 .2 -1.9 2.1 .9zM513.1 421.1l-12.4 2.1 -.3 -1.9 12.4 -2.1zM488.2 425.3l-12.6 2.2 -.4 -1.9 12.6 -2.1zM775.2 425.3l12.6 2.2 .4 -1.9 -12.6 -2.1zM500.7 423.2l-12.5 2.1 -.4 -1.8 12.6 -2.2zM762.7 423.2l12.5 2.1 .4 -1.8 -12.6 -2.2zM601.6 412.2l-10.8 4 -.1 -1.9 10.8 -4zM661.8 412.2l10.8 4 .1 -1.9 -10.8 -4zM631.7 416.4l-7.1 -.6 -6.6 -1.8 -.1 -1.8 6.7 1.8 7.1 .6zM645.4 414l-6.6 1.8 -7.1 .6 0 -1.8 7.1 -.6 6.7 -1.8zM891.4 456.9l13.6 2.9 .7 -1.9 -13.7 -2.9zM891.4 456.9l-2.4 -1.2 .6 -1.9 2.4 1.2zM374.4 455.7l-2.4 1.2 -.6 -1.9 2.4 -1.2zM672.6 416.2l11 4 .1 -1.9 -11 -4zM399 451l-13.4 2.9 -.6 -1.9 13.5 -2.8zM866.8 450.9l-2.4 .1 .5 -1.8 2.4 -.2zM864.4 451l-2.3 -1.1 .5 -1.9 2.3 1.2zM412.4 448.2l-13.4 2.8 -.5 -1.8 13.4 -2.9zM686 420.4l-2.4 -.2 .1 -1.9 2.4 .2zM579.8 420.2l-2.4 .2 -.1 -1.9 2.4 -.2zM425.6 445.3l-13.2 2.9 -.5 -1.9 13.2 -2.8zM837.8 445.3l13.2 2.9 .5 -1.9 -13.2 -2.8zM824.8 442.5l-2.2 -1.1 .4 -1.8 2.2 1zM824.8 442.5l13 2.8 .5 -1.8 -13.1 -2.9zM528.9 428l-2.4 0 -.2 -1.8 2.4 0zM734.5 428l12.2 3.2 .2 -1.8 -12.2 -3.2zM631.7 424.5l-7 -.4 -6.8 -1.2 -6.3 -1.9 0 -1.9 6.3 2 6.8 1.2 7 .4zM651.8 421l-6.3 1.9 -6.8 1.2 -7 .4 0 -1.8 7 -.4 6.8 -1.2 6.3 -2zM568.7 424.2l-11.3 4.2 -.2 -1.9 11.3 -4.1zM694.7 424.2l11.3 4.2 .2 -1.9 -11.3 -4.1zM516.7 431.2l-12.3 3.3 -.3 -1.9 12.4 -3.2zM746.7 431.2l12.3 3.3 .3 -1.9 -12.4 -3.2zM761.4 434.5l-2.4 0 .3 -1.9 2.4 0zM504.4 434.5l-12.4 3.2 -.3 -1.9 12.4 -3.2zM492 437.7l-12.6 3.3 -.3 -1.9 12.6 -3.3zM771.4 437.7l12.6 3.3 .3 -1.9 -12.6 -3.3zM706 428.4l11.4 4.2 .2 -1.9 -11.4 -4.2zM479.4 441l-12.7 3.4 -.4 -1.9 12.8 -3.4zM796.7 444.4l-2.1 -1.2 .4 -1.9 2.1 1.2zM799.1 444.4l-2.4 0 .4 -1.9 2.4 0zM809.5 447.7l-2.1 -1.2 .4 -1.9 2.1 1.2zM875.9 465.2l13.7 3.6 .6 -1.9 -13.7 -3.6zM862.3 461.6l13.6 3.6 .6 -1.9 -13.6 -3.6zM809.5 447.7l13 3.4 .4 -1.9 -13 -3.4zM453.9 447.7l-13 3.4 -.4 -1.9 13 -3.4zM848.9 458.1l-2.2 -1.3 .5 -1.9 2.2 1.3zM427.8 454.6l-2.5 0 -.5 -1.9 2.5 0zM848.9 458.1l13.4 3.5 .6 -1.9 -13.5 -3.5zM414.5 458.1l-13.4 3.5 -.6 -1.9 13.5 -3.5zM440.9 451.1l-13.1 3.5 -.5 -1.9 13.2 -3.5zM546 432.6l-11.6 4.2 -.3 -1.9 11.7 -4.2zM617.9 431.6l-6.6 -1.5 -6.2 -2 0 -1.9 6.1 2.1 6.6 1.5zM534.4 436.8l-2.5 .2 -.2 -1.9 2.4 -.2zM731.5 437l-2.5 -.2 .3 -1.9 2.4 .2zM620.2 431.4l-2.3 .2 -.1 -1.8 2.4 -.3zM645.5 431.6l-6.8 .9 -7 .3 0 -1.8 7 -.3 6.9 -.9zM631.7 432.8l-2.2 -.6 0 -1.8 2.2 .6zM743.3 441.3l-2.5 -.2 .3 -1.9 2.4 .2zM522.6 441.1l-11.9 4.4 -.3 -1.9 11.9 -4.4zM752.7 445.5l12.1 4.4 .3 -1.9 -12.1 -4.4zM444.2 459.7l-13.1 4.1 -.5 -1.9 13.1 -4.1zM819.2 459.7l13.1 4.1 .5 -1.9 -13.1 -4.1zM431.1 463.8l-13.3 4.2 -.5 -1.9 13.3 -4.2zM498.6 449.9l-2.5 .2 -.3 -1.9 2.5 -.2zM889.2 480.9l-2.7 -.1 .6 -1.9 2.7 .1zM886.5 480.8l-2.2 -1.4 .6 -1.9 2.2 1.4zM392.9 475.1l-2.2 1.3 -.6 -1.9 2.2 -1.3zM875.3 476.6l-2.6 -.2 .6 -1.9 2.6 .2zM390.7 476.4l-2.6 .2 -.6 -1.9 2.6 -.2zM845.6 468l13.5 4.2 .5 -1.9 -13.5 -4.2zM859.1 472.2l13.6 4.2 .6 -1.9 -13.7 -4.2zM764.8 449.9l12.3 4.5 .3 -1.9 -12.3 -4.5zM649 439.9l-8.5 1.1 -8.8 .4 0 -1.9 8.8 -.4 8.6 -1.1zM631.7 441.4l-2.2 -.6 -.1 -1.9 2.3 .6zM777.1 454.4l12.4 4.6 .4 -1.9 -12.5 -4.6zM486.3 454.4l-12.4 4.6 -.4 -1.9 12.5 -4.6zM792.1 459.2l-2.6 -.2 .4 -1.9 2.6 .2zM461.2 463.6l-12.8 4.7 -.4 -1.9 12.8 -4.7zM817.6 468.5l-2.6 -.2 .4 -1.9 2.6 .2zM448.4 468.3l-13 4.7 -.5 -1.9 13.1 -4.7zM714.7 453.5l-2.4 -.7 .2 -1.9 2.4 .7zM652.6 448.3l-6.8 1.1 -7 .6 -7.1 .2 0 -1.9 7.1 -.2 7 -.6 6.9 -1.1zM408.8 482.8l-13.6 5 -.6 -1.9 13.6 -5zM395.2 487.8l-13.9 5 -.6 -1.9 13.9 -5zM868.2 487.8l13.9 5 .6 -1.9 -13.9 -5zM809.8 476.7l12.8 5.4 .5 -1.9 -12.9 -5.4zM453.6 476.7l-12.8 5.4 -.5 -1.9 12.9 -5.4zM656.3 457l-12.2 1.7 .1 -1.9 12.2 -1.7zM822.6 482.1l13 5.6 .5 -1.9 -13 -5.6zM440.8 482.1l-13 5.6 -.5 -1.9 13 -5.6zM735.2 466.5l-2.4 -.7 .2 -1.9 2.5 .7zM644.1 458.7l-12.4 .6 0 -1.9 12.5 -.6zM835.6 487.7l13.3 5.6 .6 -1.9 -13.4 -5.6zM387.3 504.8l-14 6 -.7 -1.9 14 -6zM646.1 467.9l-7.2 .5 -7.2 .2 0 -1.9 7.2 -.2 7.2 -.5zM602 474.9l-2.6 .2 -.1 -1.9 2.6 -.2z"/></g><path d="M630.5 418L638.5 638M624.7 273L629.2 383" stroke="#cacacf" stroke-width="0.8" stroke-dasharray="1.6 2.2" fill="none"/></svg>
<div class="abs" style="left:570px;top:44px;width:117px;height:30px;background:#1f1f1f;border-radius:5px"></div>
<div class="t" style="left:587px;top:55px;font-size:8.8px;color:#e8e8e8">Assemble View</div>
<div class="abs" style="left:653px;top:51px;width:16px;height:15px;background:#2a2a2a;border-radius:3px"></div>
<svg class="abs" style="left:655px;top:52px" width="12" height="12" viewBox="0 0 12 12"><path d="M6 1.6 L9.8 3.8 L9.8 8.2 L6 10.4 L2.2 8.2 L2.2 3.8 Z" fill="none" stroke="#bdbdbd" stroke-width="1"/><circle cx="6" cy="6" r="1.6" fill="none" stroke="#bdbdbd" stroke-width="1"/></svg>
<div class="abs" style="left:591px;top:747px;width:75px;height:29px;background:#242424;border-radius:3px"></div>
<div class="abs" style="left:628px;top:749px;width:24px;height:25px;background:#2e2e2e;border-radius:2px"></div>
<svg class="abs" style="left:598px;top:754px" width="15" height="15" viewBox="0 0 15 15"><rect x="1.5" y="1.5" width="12" height="12" rx="1.2" fill="none" stroke="#d0d0d0" stroke-width="1.1"/><rect x="6.8" y="6.8" width="1.4" height="1.4" fill="#bbb"/></svg>
<div class="abs" style="left:622px;top:756px;width:1px;height:11px;background:#555"></div>
<svg class="abs" style="left:632px;top:754px" width="15" height="15" viewBox="0 0 15 15"><rect x="1.5" y="1.5" width="12" height="12" rx="1.2" fill="none" stroke="#d0d0d0" stroke-width="1.1"/><path d="M5.5 1.5 V13.5 M9.5 1.5 V13.5 M1.5 5.5 H13.5 M1.5 9.5 H13.5" stroke="#d0d0d0" stroke-width="1.1"/></svg>
<svg class="abs" style="left:655px;top:758px" width="8" height="6" viewBox="0 0 8 6"><path d="M1 1.5 L4 4.5 L7 1.5" fill="none" stroke="#cfcfcf" stroke-width="1.1"/></svg>
<div id="top" class="abs">
  <svg class="abs" style="left:7px;top:10px" width="8" height="12" viewBox="0 0 8 12"><path d="M6 1.5 L2 6 L6 10.5" fill="none" stroke="#e0e0e0" stroke-width="1.4"/></svg>
  <div class="t" style="left:22px;top:10px;font-size:10.6px;color:#ececec">Parametric Model Maker</div>
  <svg class="abs" style="left:731px;top:8px" width="16" height="16" viewBox="0 0 16 16"><rect x="1.5" y="1.5" width="9" height="11" rx="1" fill="#9a9a9a"/><rect x="4.5" y="3.5" width="10" height="12" rx="1" fill="#d2d2d2" stroke="#232323" stroke-width="1"/><path d="M7 8 h5 M7 10.5 h5" stroke="#555" stroke-width="1"/></svg>
  <div class="abs" style="left:757px;top:10px;width:1px;height:12px;background:#4a4a4a"></div>
  <div class="abs" style="left:768px;top:6px;width:70px;height:20px;background:#2c2c2c;border-radius:10px"></div>
  <svg class="abs" style="left:771px;top:7px" width="14" height="17" viewBox="0 0 14 17"><g transform="rotate(28 7 9)"><rect x="4.6" y="1.2" width="4.8" height="2" rx="0.8" fill="#d8d4ff"/><path d="M5 3 L9 3 L8.8 6 Q12.2 7.8 11.6 11.4 Q11 15 7 15 Q3 15 2.4 11.4 Q1.8 7.8 5.2 6 Z" fill="#7d70ff"/><path d="M2.6 10.6 Q7 9.4 11.4 10.6 Q11.2 14.6 7 14.7 Q2.8 14.6 2.6 10.6Z" fill="#4a36e0"/><circle cx="5" cy="9" r="0.9" fill="#ecebff"/></g></svg>
  <div class="t" style="left:787px;top:11px;font-size:8.9px;color:#ececec">Credit : 170</div>
  <svg class="abs" style="left:847px;top:6px" width="20" height="20" viewBox="0 0 20 20"><defs><clipPath id="av"><circle cx="10" cy="10" r="10"/></clipPath></defs><g clip-path="url(#av)"><rect width="20" height="20" fill="#7a6444"/><path d="M2 17 L8 6 L12 16 Z" fill="#c98f22"/><path d="M8 9 L12 3 L15 9 Z" fill="#3a9a6a"/><path d="M11 16 L15 6 L19 16 Z" fill="#141414"/><path d="M4 16 L9 10 L11 18 Z" fill="#e3aa35"/><circle cx="10" cy="10" r="9.2" fill="none" stroke="#bdb6aa" stroke-width="1.6"/></g></svg>
  <div class="abs" style="left:876px;top:10px;width:1px;height:12px;background:#4a4a4a"></div>
  <div class="abs" style="left:886px;top:6px;width:42px;height:19px;border:1px solid #1b7fc4;border-radius:3px"></div>
  <div class="t" style="left:893px;top:11px;font-size:9.1px;color:#2f90d6">Upload</div>
  <div class="abs" style="left:938px;top:6px;width:53px;height:19px;background:#0a9cff;border-radius:3px"></div>
  <div class="t" style="left:944px;top:11px;font-size:9.1px;color:#ffffff">Download</div>
</div>
<div id="panel" class="abs">
  <svg class="abs" style="left:8px;top:11px" width="12" height="12" viewBox="0 0 12 12"><g fill="none" stroke="#e6e6e6" stroke-width="1.2" stroke-linecap="round"><path d="M2.2 8.2 L8.2 2.2 L10 4 L4 10 Z"/><path d="M3 1.5 L1.5 3 M10.5 9 L9 10.5"/><path d="M6 4.5 l0.8 0.8 M4.7 5.8 l0.8 0.8"/></g></svg>
  <div class="t" style="left:23.5px;top:12.5px;font-size:10.2px;color:#ececec">Customize</div>
  <div class="abs" style="left:197px;top:8px;width:32px;height:19px;background:#2e2e2e;border-radius:2px"></div>
  <div class="t" style="left:202px;top:13px;font-size:8.8px;color:#ececec">Code</div>
  <svg class="abs" style="left:238px;top:11px" width="12" height="12" viewBox="0 0 12 12"><g fill="none" stroke="#8c8c8c" stroke-width="1.1" stroke-linecap="round"><path d="M2.3 4.2 A4.3 4.3 0 1 1 2.2 7.5"/><path d="M1.8 2.2 L2.3 4.3 L4.4 3.9"/><path d="M6 3.6 L6 6.2 L7.6 7.4"/></g></svg>
  <div class="abs" style="left:0;top:34px;width:260px;height:1px;background:#2c2c2c"></div>
  <div class="t" style="left:9px;top:46px;font-size:9.6px;color:#e6e6e6">Parameters</div>
  <svg class="abs" style="left:241px;top:48px" width="9" height="6" viewBox="0 0 9 6"><path d="M1 1 L4.5 4.5 L8 1" fill="none" stroke="#bdbdbd" stroke-width="1.1"/></svg>
  <div class="lbl" style="left:9px;top:66.5px">coaster diameter<span>Coaster outer diameter (mm)</span></div>
  <div class="inp" style="left:9px;top:83.2px"><div class="val">90</div><div class="pm" style="left:204px"></div><div class="pm p" style="left:222px"></div></div>
  <div class="lbl" style="left:9px;top:112.4px">floor height<span>Floor (base plate) thickness (mm)</span></div>
  <div class="inp" style="left:9px;top:129.1px"><div class="val">2.6</div><div class="pm" style="left:204px"></div><div class="pm p" style="left:222px"></div></div>
  <div class="lbl" style="left:9px;top:158.3px">wall height<span>Wall height above the floor (mm)</span></div>
  <div class="inp" style="left:9px;top:175.0px"><div class="val">0.4</div><div class="pm" style="left:204px"></div><div class="pm p" style="left:222px"></div></div>
  <div class="lbl" style="left:9px;top:204.2px">wall thickness<span>Wall thickness (mm)</span></div>
  <div class="inp" style="left:9px;top:220.9px"><div class="val">1</div><div class="pm" style="left:204px"></div><div class="pm p" style="left:222px"></div></div>
  <div class="lbl" style="left:9px;top:250.1px">num rings<span>Number of concentric rings</span></div>
  <div class="inp" style="left:9px;top:266.8px"><div class="val">20</div><div class="pm" style="left:204px"></div><div class="pm p" style="left:222px"></div></div>
  <div class="lbl" style="left:9px;top:296.0px">initial cells<span>Number of cells in the innermost ring</span></div>
  <div class="inp" style="left:9px;top:312.7px"><div class="val">6</div><div class="pm" style="left:204px"></div><div class="pm p" style="left:222px"></div></div>
  <div class="lbl" style="left:9px;top:341.9px">subdivision ratio<span>double the cell count for the next ring</span></div>
  <div class="inp" style="left:9px;top:358.6px"><div class="val">2.0</div><div class="pm" style="left:204px"></div><div class="pm p" style="left:222px"></div></div>
  <div class="lbl" style="left:9px;top:387.8px">seed<span>Random seed</span></div>
  <div class="inp" style="left:9px;top:404.5px"><div class="val">44</div><div class="pm" style="left:204px"></div><div class="pm p" style="left:222px"></div></div>
  <div class="lbl" style="left:9px;top:433.7px">entrance cell<span>Entrance: which cell in ring 0 opens inward (to center)</span></div>
  <div class="inp" style="left:9px;top:450.4px"><div class="val">1</div><div class="pm" style="left:204px"></div><div class="pm p" style="left:222px"></div></div>
  <div class="lbl" style="left:9px;top:479.6px">exit cell<span>Exit: which cell in the outermost ring opens outward</span></div>
  <div class="inp" style="left:9px;top:496.3px"><div class="val">0</div><div class="pm" style="left:204px"></div><div class="pm p" style="left:222px"></div></div>
  <div class="lbl" style="left:9px;top:525.5px">overlap</div>
  <div class="inp" style="left:9px;top:542.2px"><div class="val">0.5</div><div class="pm" style="left:204px"></div><div class="pm p" style="left:222px"></div></div>
  <div class="abs" style="left:9px;top:709px;width:19px;height:19px;background:#2c2c2c;border-radius:3px"></div>
  <svg class="abs" style="left:12px;top:712px" width="13" height="13" viewBox="0 0 13 13"><g fill="none" stroke="#d8d8d8" stroke-width="1.2" stroke-linecap="round"><path d="M2.5 5.5 A4.2 4.2 0 0 1 10 4"/><path d="M10.5 7.5 A4.2 4.2 0 0 1 3 9"/><path d="M10.3 1.8 L10.2 4.2 L7.8 4.2"/><path d="M2.7 11.2 L2.8 8.8 L5.2 8.8"/></g></svg>
  <div class="abs" style="left:33px;top:709px;width:19px;height:19px;background:#2c2c2c;border-radius:3px"></div>
  <svg class="abs" style="left:36px;top:712px" width="13" height="13" viewBox="0 0 13 13"><g fill="none" stroke="#d8d8d8" stroke-width="1.2" stroke-linecap="round"><path d="M3.2 3.5 A4.3 4.3 0 1 1 2.3 7"/><path d="M2.6 1.3 L3 3.8 L5.5 3.5"/></g></svg>
  <div class="abs" style="left:57px;top:709px;width:193px;height:19px;background:#0a9cff;border-radius:3px"></div>
  <svg class="abs" style="left:127px;top:712px" width="12" height="12" viewBox="0 0 12 12"><path d="M5 1 Q5.6 4.4 9 5 Q5.6 5.6 5 9 Q4.4 5.6 1 5 Q4.4 4.4 5 1Z" fill="#fff"/><path d="M9.3 7.6 Q9.5 8.8 10.7 9 Q9.5 9.2 9.3 10.4 Q9.1 9.2 7.9 9 Q9.1 8.8 9.3 7.6Z" fill="#fff"/></svg>
  <div class="t" style="left:142px;top:714px;font-size:9px;color:#ffffff">Generate</div>
</div>
</body></html>
